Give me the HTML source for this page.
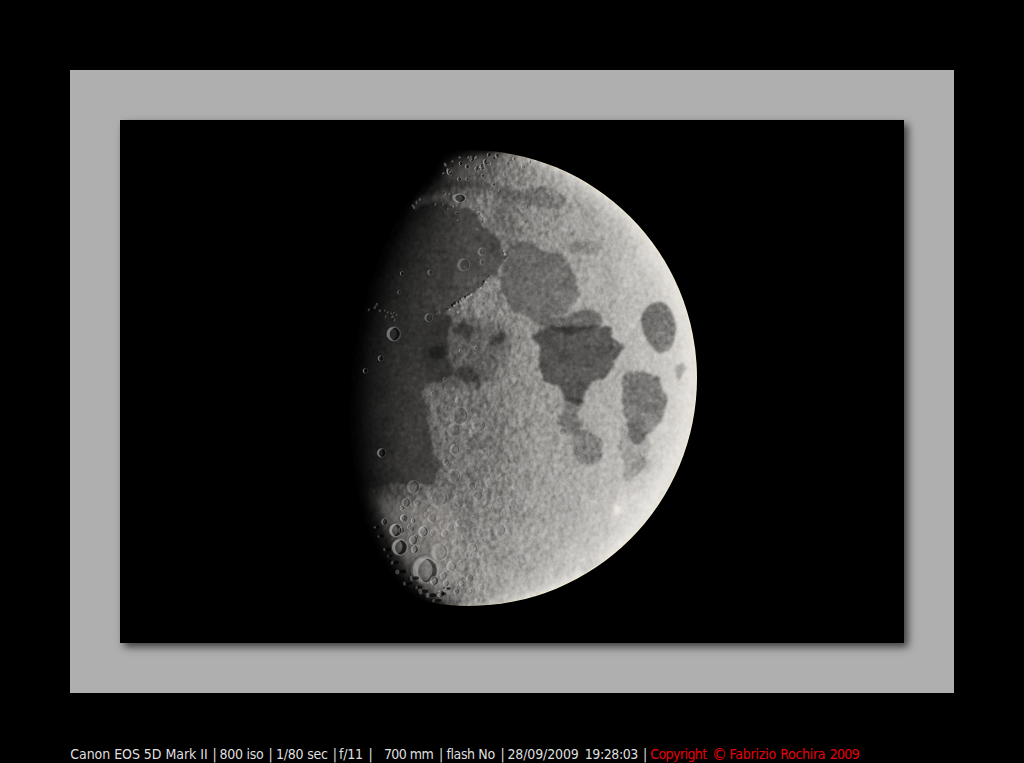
<!DOCTYPE html>
<html><head><meta charset="utf-8"><title>Moon</title>
<style>
html,body{margin:0;padding:0;background:#000;}
body{width:1024px;height:763px;position:relative;overflow:hidden;font-family:"DejaVu Sans Condensed","DejaVu Sans","Liberation Sans",sans-serif;font-stretch:condensed;}
#frame{position:absolute;left:70px;top:70px;width:884px;height:623px;background:#afafaf;}
#photo{position:absolute;left:50px;top:50px;width:784px;height:523px;background:#000;box-shadow:4px 4px 8px rgba(0,0,0,.66);overflow:hidden;}
#photo svg{position:absolute;left:-120px;top:-120px;}
#cap{position:absolute;left:70px;top:744px;width:900px;height:20px;font-size:14px;line-height:20px;color:#dfdfdf;white-space:pre;}
#cap span{position:absolute;top:0;}
#cap span.r{color:#e8000a;}
</style></head><body>
<div id="frame"><div id="photo">
<svg width="1024" height="763" viewBox="0 0 1024 763">
<defs>
<mask id="disc" maskUnits="userSpaceOnUse" x="200" y="110" width="540" height="540"><circle cx="469.0" cy="378.0" r="228.0" fill="#fff"/></mask>
<filter id="b2" x="-5%" y="-5%" width="110%" height="110%" color-interpolation-filters="sRGB"><feGaussianBlur stdDeviation="2.5"/></filter>
<filter id="bl0_6" filterUnits="userSpaceOnUse" x="200" y="110" width="540" height="540" color-interpolation-filters="sRGB"><feGaussianBlur stdDeviation="0.6"/></filter>
<filter id="bl0_8" filterUnits="userSpaceOnUse" x="200" y="110" width="540" height="540" color-interpolation-filters="sRGB"><feGaussianBlur stdDeviation="0.8"/></filter>
<filter id="bl1_2" filterUnits="userSpaceOnUse" x="200" y="110" width="540" height="540" color-interpolation-filters="sRGB"><feGaussianBlur stdDeviation="1.2"/></filter>
<filter id="bl1_5" filterUnits="userSpaceOnUse" x="200" y="110" width="540" height="540" color-interpolation-filters="sRGB"><feTurbulence type="fractalNoise" baseFrequency="0.07" numOctaves="3" seed="4" result="t"/><feDisplacementMap in="SourceGraphic" in2="t" scale="9" xChannelSelector="R" yChannelSelector="G" result="d"/><feGaussianBlur in="d" stdDeviation="0.9"/></filter>
<filter id="bl1_6" filterUnits="userSpaceOnUse" x="200" y="110" width="540" height="540" color-interpolation-filters="sRGB"><feTurbulence type="fractalNoise" baseFrequency="0.07" numOctaves="3" seed="4" result="t"/><feDisplacementMap in="SourceGraphic" in2="t" scale="9" xChannelSelector="R" yChannelSelector="G" result="d"/><feGaussianBlur in="d" stdDeviation="1.0"/></filter>
<filter id="bl1_8" filterUnits="userSpaceOnUse" x="200" y="110" width="540" height="540" color-interpolation-filters="sRGB"><feTurbulence type="fractalNoise" baseFrequency="0.07" numOctaves="3" seed="4" result="t"/><feDisplacementMap in="SourceGraphic" in2="t" scale="9" xChannelSelector="R" yChannelSelector="G" result="d"/><feGaussianBlur in="d" stdDeviation="1.1"/></filter>
<filter id="bl2" filterUnits="userSpaceOnUse" x="200" y="110" width="540" height="540" color-interpolation-filters="sRGB"><feTurbulence type="fractalNoise" baseFrequency="0.07" numOctaves="3" seed="4" result="t"/><feDisplacementMap in="SourceGraphic" in2="t" scale="9" xChannelSelector="R" yChannelSelector="G" result="d"/><feGaussianBlur in="d" stdDeviation="1.2"/></filter>
<filter id="bl2_2" filterUnits="userSpaceOnUse" x="200" y="110" width="540" height="540" color-interpolation-filters="sRGB"><feTurbulence type="fractalNoise" baseFrequency="0.07" numOctaves="3" seed="4" result="t"/><feDisplacementMap in="SourceGraphic" in2="t" scale="9" xChannelSelector="R" yChannelSelector="G" result="d"/><feGaussianBlur in="d" stdDeviation="1.3"/></filter>
<filter id="bl2_5" filterUnits="userSpaceOnUse" x="200" y="110" width="540" height="540" color-interpolation-filters="sRGB"><feTurbulence type="fractalNoise" baseFrequency="0.07" numOctaves="3" seed="4" result="t"/><feDisplacementMap in="SourceGraphic" in2="t" scale="9" xChannelSelector="R" yChannelSelector="G" result="d"/><feGaussianBlur in="d" stdDeviation="1.5"/></filter>
<filter id="bl3" filterUnits="userSpaceOnUse" x="200" y="110" width="540" height="540" color-interpolation-filters="sRGB"><feTurbulence type="fractalNoise" baseFrequency="0.07" numOctaves="3" seed="4" result="t"/><feDisplacementMap in="SourceGraphic" in2="t" scale="9" xChannelSelector="R" yChannelSelector="G" result="d"/><feGaussianBlur in="d" stdDeviation="1.8"/></filter>
<filter id="bl3_5" filterUnits="userSpaceOnUse" x="200" y="110" width="540" height="540" color-interpolation-filters="sRGB"><feGaussianBlur stdDeviation="3.5"/></filter>
<filter id="bl4" filterUnits="userSpaceOnUse" x="200" y="110" width="540" height="540" color-interpolation-filters="sRGB"><feGaussianBlur stdDeviation="4"/></filter>
<filter id="bl4_5" filterUnits="userSpaceOnUse" x="200" y="110" width="540" height="540" color-interpolation-filters="sRGB"><feGaussianBlur stdDeviation="4.5"/></filter>
<filter id="bl5" filterUnits="userSpaceOnUse" x="200" y="110" width="540" height="540" color-interpolation-filters="sRGB"><feGaussianBlur stdDeviation="5"/></filter>
<filter id="bl6" filterUnits="userSpaceOnUse" x="200" y="110" width="540" height="540" color-interpolation-filters="sRGB"><feGaussianBlur stdDeviation="6"/></filter>
<filter id="bl8" filterUnits="userSpaceOnUse" x="200" y="110" width="540" height="540" color-interpolation-filters="sRGB"><feGaussianBlur stdDeviation="8"/></filter>
<filter id="bl10" filterUnits="userSpaceOnUse" x="200" y="110" width="540" height="540" color-interpolation-filters="sRGB"><feGaussianBlur stdDeviation="10"/></filter>
<filter id="bl12" filterUnits="userSpaceOnUse" x="200" y="110" width="540" height="540" color-interpolation-filters="sRGB"><feGaussianBlur stdDeviation="12"/></filter>
<filter id="bl14" filterUnits="userSpaceOnUse" x="200" y="110" width="540" height="540" color-interpolation-filters="sRGB"><feGaussianBlur stdDeviation="14"/></filter>
<filter id="bl16" filterUnits="userSpaceOnUse" x="200" y="110" width="540" height="540" color-interpolation-filters="sRGB"><feGaussianBlur stdDeviation="16"/></filter>
<linearGradient id="gIn" gradientTransform="rotate(6.5 .5 .5)"><stop offset="0" stop-color="#fff" stop-opacity=".75"/><stop offset=".32" stop-color="#fff" stop-opacity="0"/><stop offset=".5" stop-color="#000" stop-opacity="0"/><stop offset=".8" stop-color="#000" stop-opacity=".8"/><stop offset="1" stop-color="#000" stop-opacity=".9"/></linearGradient>
<linearGradient id="gOut" gradientTransform="rotate(6.5 .5 .5)"><stop offset="0" stop-color="#000" stop-opacity=".55"/><stop offset=".4" stop-color="#000" stop-opacity="0"/><stop offset=".6" stop-color="#fff" stop-opacity="0"/><stop offset="1" stop-color="#fff" stop-opacity=".5"/></linearGradient>
<filter id="cb" x="-5%" y="-5%" width="110%" height="110%" color-interpolation-filters="sRGB"><feGaussianBlur stdDeviation="0.55"/></filter>
<filter id="noise" x="0" y="0" width="100%" height="100%" color-interpolation-filters="sRGB"><feTurbulence type="fractalNoise" baseFrequency="0.22" numOctaves="3" seed="7" result="n"/><feColorMatrix in="n" type="matrix" values="0.9 0.9 0 0 -0.4  0.9 0.9 0 0 -0.4  0.9 0.9 0 0 -0.4  0 0 0 0 1"/></filter>
<filter id="relief" x="0" y="0" width="100%" height="100%" color-interpolation-filters="sRGB"><feTurbulence type="fractalNoise" baseFrequency="0.14" numOctaves="3" seed="11" result="t"/><feDiffuseLighting in="t" surfaceScale="2.2" diffuseConstant="1" lighting-color="#fff"><feDistantLight azimuth="6.5" elevation="30"/></feDiffuseLighting></filter>
<linearGradient id="rmg" gradientUnits="userSpaceOnUse" x1="360" y1="378" x2="700" y2="416"><stop offset="0" stop-color="#fff"/><stop offset=".35" stop-color="#aaa"/><stop offset="1" stop-color="#444"/></linearGradient>
<mask id="rmask" maskUnits="userSpaceOnUse" x="230" y="140" width="480" height="480"><rect x="230" y="140" width="480" height="480" fill="url(#rmg)"/><g filter="url(#bl2)"><path d="M409.0,211.8C416.1,210.7 422.0,207.0 427.9,205.4C433.7,203.9 440.0,202.2 444.4,202.4C448.7,202.6 449.9,205.7 453.8,206.6C457.7,207.5 464.0,206.1 468.0,207.8C471.9,209.4 474.8,213.5 477.4,216.5C479.9,219.6 480.9,223.2 483.3,226.0C485.6,228.7 488.6,230.0 491.5,233.0C494.5,236.1 499.1,239.7 501.0,244.4C502.9,249.0 503.9,255.8 502.9,260.9C501.9,266.0 498.5,270.7 495.1,275.0C491.6,279.4 486.6,283.3 482.1,286.8C477.6,290.4 472.3,293.3 468.0,296.3C463.6,299.2 460.1,301.8 456.2,304.5C452.2,307.3 448.7,310.8 444.4,312.8C440.0,314.7 434.9,316.2 430.2,316.3C425.5,316.4 421.6,314.2 416.1,313.3C410.6,312.3 404.3,312.1 397.2,310.9C390.1,309.7 381.5,308.0 373.6,306.2C365.7,304.4 356.4,307.7 350.0,300.0C343.6,292.3 334.2,273.3 335.0,260.0C335.8,246.7 346.7,228.0 355.0,220.0C363.3,212.0 376.0,213.4 385.0,212.0C394.0,210.6 401.8,212.9 409.0,211.8ZM364.2,304.7C373.7,300.1 386.6,301.6 397.2,302.4C407.8,303.1 418.8,307.1 427.9,309.4C436.9,311.8 447.7,313.4 451.4,316.5C455.2,319.7 451.0,324.0 450.3,328.3C449.5,332.6 446.9,337.0 446.7,342.5C446.5,348.0 447.9,356.6 449.1,361.3C450.3,366.1 454.6,367.6 453.8,370.8C453.0,373.9 449.1,377.9 444.4,380.2C439.6,382.6 429.4,382.6 425.5,384.9C421.6,387.3 420.8,390.8 420.8,394.4C420.8,397.9 423.9,399.9 425.5,406.2C427.1,412.5 428.6,425.4 430.2,432.1C431.8,438.8 434.3,444.1 434.9,446.3C435.6,448.4 433.8,443.0 434.1,445.0C434.4,447.0 435.6,453.7 436.7,458.1C437.8,462.5 441.3,467.1 440.6,471.2C440.0,475.3 436.2,480.8 432.8,483.0C429.3,485.2 425.1,484.3 419.7,484.3C414.2,484.3 408.3,482.5 400.0,483.0C391.7,483.4 378.3,487.5 370.0,487.0C361.7,486.5 355.0,494.5 350.0,480.0C345.0,465.5 341.7,425.0 340.0,400.0C338.3,375.0 336.0,345.9 340.0,330.0C344.0,314.1 354.6,309.3 364.2,304.7Z" fill="#000" fill-opacity="0.75"/><path d="M514.4,242.2C517.9,240.2 522.1,240.6 526.2,241.6C530.3,242.5 534.9,246.4 539.3,248.1C543.7,249.8 548.3,250.9 552.4,252.0C556.6,253.1 561.4,252.5 564.2,254.7C567.0,256.8 567.5,261.0 569.4,265.1C571.4,269.3 574.5,275.4 576.0,279.5C577.5,283.7 578.5,286.7 578.6,290.0C578.7,293.3 577.9,296.1 576.6,299.2C575.3,302.2 573.3,306.1 570.7,308.4C568.2,310.7 565.1,311.4 561.6,312.9C558.1,314.5 553.7,316.6 549.8,317.5C545.9,318.5 541.9,319.0 538.0,318.8C534.1,318.7 529.7,318.0 526.2,316.9C522.7,315.8 520.1,314.4 517.0,312.3C514.0,310.2 510.3,307.5 507.9,304.4C505.5,301.4 503.7,297.9 502.6,294.0C501.5,290.0 501.4,285.2 501.3,280.9C501.2,276.5 501.3,272.3 502.0,267.8C502.6,263.2 503.2,257.6 505.2,253.3C507.3,249.1 510.9,244.2 514.4,242.2Z" fill="#000" fill-opacity="0.75"/><path d="M539.3,318.8C540.8,317.2 546.7,317.9 552.4,316.9C558.1,315.9 566.8,314.4 573.4,312.9C579.9,311.5 587.1,307.4 591.7,308.4C596.3,309.3 600.9,315.3 600.9,318.8C600.9,322.3 597.6,327.0 591.7,329.3C585.8,331.6 573.6,333.0 565.5,332.6C557.4,332.2 547.6,329.0 543.2,326.7C538.9,324.4 537.8,320.5 539.3,318.8Z" fill="#000" fill-opacity="0.75"/><path d="M533.1,334.4C534.8,331.8 541.8,329.2 546.2,327.9C550.6,326.6 554.5,327.0 559.3,326.6C564.1,326.1 570.2,325.2 575.0,325.2C579.8,325.2 583.8,326.6 588.1,326.6C592.5,326.6 597.3,325.0 601.2,325.2C605.2,325.5 609.3,325.5 611.7,327.9C614.1,330.3 613.7,336.7 615.6,339.7C617.6,342.6 622.8,343.1 623.5,345.5C624.1,347.9 621.1,351.3 619.6,354.1C618.0,356.8 615.6,358.9 614.3,361.9C613.0,365.0 613.4,369.6 611.7,372.4C610.0,375.2 606.5,377.6 603.8,379.0C601.2,380.3 598.2,379.4 596.0,380.3C593.8,381.1 592.5,382.0 590.7,384.2C589.0,386.4 587.0,390.5 585.5,393.4C584.0,396.2 583.8,399.5 581.6,401.2C579.4,403.0 575.0,404.3 572.4,403.8C569.8,403.4 567.6,400.8 565.9,398.6C564.1,396.4 563.4,392.9 561.9,390.7C560.4,388.6 559.3,386.8 556.7,385.5C554.1,384.2 548.8,384.6 546.2,382.9C543.6,381.1 542.3,378.3 541.0,375.0C539.7,371.7 538.6,366.7 538.3,363.2C538.1,359.7 540.1,357.3 539.7,354.1C539.2,350.8 536.8,346.9 535.7,343.6C534.6,340.3 531.4,337.0 533.1,334.4Z" fill="#000" fill-opacity="0.75"/><path d="M564.5,397.3C567.8,395.3 579.2,397.5 581.6,399.9C584.0,402.3 579.0,408.0 579.0,411.7C579.0,415.4 582.0,418.7 581.6,422.2C581.1,425.7 579.2,430.9 576.3,432.7C573.5,434.4 567.4,434.4 564.5,432.7C561.7,430.9 559.7,425.7 559.3,422.2C558.9,418.7 561.0,415.9 561.9,411.7C562.8,407.6 561.3,399.3 564.5,397.3Z" fill="#000" fill-opacity="0.75"/><path d="M643.2,312.3C645.1,309.2 649.3,304.8 652.4,303.1C655.5,301.4 659.0,301.1 661.6,301.8C664.2,302.4 666.2,304.6 668.1,307.0C670.1,309.4 672.1,312.9 673.4,316.2C674.7,319.5 675.8,323.4 676.0,326.7C676.2,330.0 675.3,332.8 674.7,335.9C674.0,338.9 673.6,342.4 672.1,345.0C670.5,347.6 667.7,350.3 665.5,351.6C663.3,352.9 661.1,353.5 659.0,352.9C656.8,352.2 654.4,349.8 652.4,347.6C650.4,345.5 648.7,342.6 647.2,339.8C645.6,336.9 644.2,333.7 643.2,330.6C642.2,327.6 641.3,324.5 641.3,321.4C641.3,318.4 641.4,315.3 643.2,312.3Z" fill="#000" fill-opacity="0.75"/><path d="M631.4,370.8C635.4,370.2 643.0,370.0 648.0,372.0C652.9,373.9 658.0,378.0 660.9,382.6C663.9,387.1 665.3,394.0 665.6,399.1C666.0,404.2 665.1,408.5 663.3,413.2C661.5,418.0 658.0,423.1 655.0,427.4C652.1,431.7 648.7,436.5 645.6,439.2C642.5,441.9 638.7,444.2 636.2,443.4C633.6,442.6 632.0,438.7 630.3,434.5C628.5,430.2 627.1,423.5 625.5,418.0C624.0,412.5 621.6,406.9 620.8,401.4C620.0,395.9 620.2,389.3 620.8,384.9C621.4,380.6 622.6,377.9 624.4,375.5C626.1,373.1 627.5,371.4 631.4,370.8Z" fill="#000" fill-opacity="0.75"/></g></mask>
<filter id="noise2" x="0" y="0" width="100%" height="100%" color-interpolation-filters="sRGB"><feTurbulence type="fractalNoise" baseFrequency="0.055" numOctaves="2" seed="3" result="n"/><feColorMatrix in="n" type="matrix" values="0.7 0.7 0 0 -0.2  0.7 0.7 0 0 -0.2  0.7 0.7 0 0 -0.2  0 0 0 0 1"/></filter>
</defs>
<g mask="url(#disc)">
<g id="albedo">
<rect x="230" y="140" width="480" height="480" fill="rgb(232, 229, 224)"/>
<g filter="url(#bl16)">
<ellipse cx="590.0" cy="520.0" rx="85" ry="55" transform="rotate(-35 590.0 520.0)" fill="#fff" fill-opacity="0.1"/>
</g>
<g filter="url(#bl14)">
<ellipse cx="560.0" cy="215.0" rx="70" ry="35" transform="rotate(25 560.0 215.0)" fill="#000" fill-opacity="0.07"/>
<ellipse cx="478.0" cy="450.0" rx="42" ry="85" transform="rotate(0 478.0 450.0)" fill="#000" fill-opacity="0.1"/>
</g>
<g filter="url(#bl12)">
<ellipse cx="520.0" cy="520.0" rx="60" ry="45" transform="rotate(-30 520.0 520.0)" fill="#fff" fill-opacity="0.06"/>
</g>
<g filter="url(#bl10)">
<ellipse cx="425.0" cy="262.0" rx="45" ry="38" transform="rotate(-20 425.0 262.0)" fill="#000" fill-opacity="0.05"/>
<ellipse cx="600.0" cy="470.0" rx="45" ry="30" transform="rotate(-40 600.0 470.0)" fill="#fff" fill-opacity="0.07"/>
<ellipse cx="645.0" cy="465.0" rx="30" ry="55" transform="rotate(20 645.0 465.0)" fill="#fff" fill-opacity="0.05"/>
</g>
<g filter="url(#bl8)">
<ellipse cx="490.0" cy="180.0" rx="40" ry="14" transform="rotate(8 490.0 180.0)" fill="#000" fill-opacity="0.06"/>
</g>
<g filter="url(#bl6)">
<ellipse cx="393.0" cy="328.0" rx="26" ry="14" transform="rotate(10 393.0 328.0)" fill="#fff" fill-opacity="0.07"/>
<ellipse cx="505.0" cy="230.0" rx="16" ry="30" transform="rotate(10 505.0 230.0)" fill="#000" fill-opacity="0.16"/>
</g>
<g filter="url(#bl5)">
<ellipse cx="543.2" cy="283.5" rx="19" ry="21" transform="rotate(0 543.2 283.5)" fill="#fff" fill-opacity="0.1"/>
<ellipse cx="617.3" cy="510.2" rx="15" ry="11" transform="rotate(-30 617.3 510.2)" fill="#fff" fill-opacity="0.1"/>
<path d="M607.9,527.9C614.5,519.2 621.6,517.2 629.1,509.0C636.6,500.7 647.2,488.1 652.7,478.3C658.2,468.5 659.0,454.7 662.1,450.0C665.3,445.3 671.5,443.7 671.5,450.0C671.5,456.3 667.2,476.0 662.1,487.7C657.0,499.5 648.7,511.3 640.9,520.8C633.0,530.2 623.6,537.7 614.9,544.4C606.3,551.0 590.2,563.6 589.0,560.9C587.8,558.1 601.2,536.5 607.9,527.9Z" fill="#fff" fill-opacity="0.12"/>
<ellipse cx="520.0" cy="560.0" rx="16" ry="9" transform="rotate(-10 520.0 560.0)" fill="#000" fill-opacity="0.05"/>
</g>
<g filter="url(#bl4)">
<path d="M420.8,318.9C426.3,313.4 441.2,313.8 451.4,314.2C461.7,314.5 473.1,319.3 482.1,321.2C491.2,323.2 500.6,321.6 505.7,326.0C510.8,330.3 514.4,339.7 512.8,347.2C511.2,354.7 501.4,364.1 496.3,370.8C491.2,377.5 489.2,384.5 482.1,387.3C475.0,390.0 462.8,389.3 453.8,387.3C444.8,385.3 433.7,382.2 427.9,375.5C422.0,368.8 419.6,356.6 418.4,347.2C417.2,337.7 415.3,324.4 420.8,318.9Z" fill="#000" fill-opacity="0.25"/>
<ellipse cx="560.0" cy="505.0" rx="14" ry="8" transform="rotate(20 560.0 505.0)" fill="#000" fill-opacity="0.05"/>
</g>
<g filter="url(#bl3)">
<path d="M633.8,375.5C638.9,373.1 652.7,376.3 657.4,380.2C662.1,384.1 662.5,394.0 662.1,399.1C661.7,404.2 659.4,409.3 655.0,410.9C650.7,412.5 640.9,411.3 636.2,408.5C631.4,405.8 627.1,399.9 626.7,394.4C626.3,388.9 628.7,377.9 633.8,375.5Z" fill="#000" fill-opacity="0.08"/>
<ellipse cx="591.7" cy="456.3" rx="6" ry="6" transform="rotate(0 591.7 456.3)" fill="#000" fill-opacity="0.1"/>
<ellipse cx="641.0" cy="466.0" rx="11" ry="9" transform="rotate(-30 641.0 466.0)" fill="#000" fill-opacity="0.1"/>
<ellipse cx="591.0" cy="567.0" rx="10" ry="5" transform="rotate(-25 591.0 567.0)" fill="#000" fill-opacity="0.08"/>
</g>
<g filter="url(#bl2_5)">
<path d="M573.4,242.9C576.6,241.1 584.9,240.7 589.1,241.6C593.2,242.4 597.4,245.9 598.3,248.1C599.1,250.3 597.6,253.6 594.3,254.7C591.0,255.7 582.8,255.1 578.6,254.7C574.5,254.2 570.3,254.0 569.4,252.0C568.6,250.1 570.1,244.6 573.4,242.9Z" fill="#000" fill-opacity="0.18"/>
<path d="M539.3,318.8C540.8,317.2 546.7,317.9 552.4,316.9C558.1,315.9 566.8,314.4 573.4,312.9C579.9,311.5 587.1,307.4 591.7,308.4C596.3,309.3 600.9,315.3 600.9,318.8C600.9,322.3 597.6,327.0 591.7,329.3C585.8,331.6 573.6,333.0 565.5,332.6C557.4,332.2 547.6,329.0 543.2,326.7C538.9,324.4 537.8,320.5 539.3,318.8Z" fill="#000" fill-opacity="0.36"/>
<path d="M564.5,397.3C567.8,395.3 579.2,397.5 581.6,399.9C584.0,402.3 579.0,408.0 579.0,411.7C579.0,415.4 582.0,418.7 581.6,422.2C581.1,425.7 579.2,430.9 576.3,432.7C573.5,434.4 567.4,434.4 564.5,432.7C561.7,430.9 559.7,425.7 559.3,422.2C558.9,418.7 561.0,415.9 561.9,411.7C562.8,407.6 561.3,399.3 564.5,397.3Z" fill="#000" fill-opacity="0.3"/>
<path d="M491.7,275.8C496.1,274.5 502.0,275.5 504.8,279.1C507.6,282.7 509.6,292.8 508.7,297.4C507.9,302.0 503.7,304.4 499.6,306.6C495.4,308.8 488.2,308.5 483.8,310.5C479.5,312.5 476.9,316.2 473.4,318.4C469.9,320.5 465.9,322.9 462.9,323.6C459.8,324.3 457.0,323.6 455.0,322.3C453.1,321.0 452.8,317.6 451.1,315.7C449.3,313.9 442.6,314.0 444.5,311.2C446.5,308.3 457.2,302.8 462.9,298.7C468.6,294.7 473.8,290.7 478.6,286.9C483.4,283.1 487.3,277.1 491.7,275.8Z" fill="#fff" fill-opacity="0.1"/>
</g>
<g filter="url(#bl2_2)">
<path d="M423.6,197.4C425.1,194.8 434.1,188.4 439.3,185.6C444.5,182.8 450.2,181.4 455.0,180.4C459.8,179.3 462.0,178.7 468.1,179.3C474.2,180.0 483.1,182.2 491.7,184.3C500.3,186.4 513.1,191.9 520.0,192.2C526.9,192.4 528.3,186.3 533.1,186.0C537.9,185.6 544.0,188.1 548.8,189.9C553.6,191.6 559.3,194.0 561.9,196.4C564.5,198.8 565.4,202.1 564.5,204.3C563.7,206.5 560.2,208.9 556.7,209.5C553.2,210.2 547.9,208.9 543.6,208.2C539.2,207.6 534.4,205.6 530.5,205.6C526.6,205.6 523.0,209.2 520.0,208.2C517.0,207.3 516.1,202.3 512.7,200.0C509.3,197.8 504.4,196.5 499.6,194.8C494.8,193.0 489.1,190.8 483.8,189.5C478.6,188.3 472.9,187.4 468.1,187.2C463.3,187.0 459.4,187.2 455.0,188.2C450.7,189.3 446.1,191.3 441.9,193.5C437.8,195.7 433.2,200.7 430.1,201.3C427.1,202.0 422.1,200.0 423.6,197.4Z" fill="#000" fill-opacity="0.22"/>
<ellipse cx="466.8" cy="374.3" rx="11.5" ry="8" transform="rotate(10 466.8 374.3)" fill="#000" fill-opacity="0.34"/>
<ellipse cx="436.1" cy="353.1" rx="8" ry="8" transform="rotate(0 436.1 353.1)" fill="#000" fill-opacity="0.36"/>
<ellipse cx="464.4" cy="330.7" rx="11" ry="7" transform="rotate(0 464.4 330.7)" fill="#000" fill-opacity="0.34"/>
</g>
<g filter="url(#bl2)">
<path d="M409.0,211.8C416.1,210.7 422.0,207.0 427.9,205.4C433.7,203.9 440.0,202.2 444.4,202.4C448.7,202.6 449.9,205.7 453.8,206.6C457.7,207.5 464.0,206.1 468.0,207.8C471.9,209.4 474.8,213.5 477.4,216.5C479.9,219.6 480.9,223.2 483.3,226.0C485.6,228.7 488.6,230.0 491.5,233.0C494.5,236.1 499.1,239.7 501.0,244.4C502.9,249.0 503.9,255.8 502.9,260.9C501.9,266.0 498.5,270.7 495.1,275.0C491.6,279.4 486.6,283.3 482.1,286.8C477.6,290.4 472.3,293.3 468.0,296.3C463.6,299.2 460.1,301.8 456.2,304.5C452.2,307.3 448.7,310.8 444.4,312.8C440.0,314.7 434.9,316.2 430.2,316.3C425.5,316.4 421.6,314.2 416.1,313.3C410.6,312.3 404.3,312.1 397.2,310.9C390.1,309.7 381.5,308.0 373.6,306.2C365.7,304.4 356.4,307.7 350.0,300.0C343.6,292.3 334.2,273.3 335.0,260.0C335.8,246.7 346.7,228.0 355.0,220.0C363.3,212.0 376.0,213.4 385.0,212.0C394.0,210.6 401.8,212.9 409.0,211.8ZM364.2,304.7C373.7,300.1 386.6,301.6 397.2,302.4C407.8,303.1 418.8,307.1 427.9,309.4C436.9,311.8 447.7,313.4 451.4,316.5C455.2,319.7 451.0,324.0 450.3,328.3C449.5,332.6 446.9,337.0 446.7,342.5C446.5,348.0 447.9,356.6 449.1,361.3C450.3,366.1 454.6,367.6 453.8,370.8C453.0,373.9 449.1,377.9 444.4,380.2C439.6,382.6 429.4,382.6 425.5,384.9C421.6,387.3 420.8,390.8 420.8,394.4C420.8,397.9 423.9,399.9 425.5,406.2C427.1,412.5 428.6,425.4 430.2,432.1C431.8,438.8 434.3,444.1 434.9,446.3C435.6,448.4 433.8,443.0 434.1,445.0C434.4,447.0 435.6,453.7 436.7,458.1C437.8,462.5 441.3,467.1 440.6,471.2C440.0,475.3 436.2,480.8 432.8,483.0C429.3,485.2 425.1,484.3 419.7,484.3C414.2,484.3 408.3,482.5 400.0,483.0C391.7,483.4 378.3,487.5 370.0,487.0C361.7,486.5 355.0,494.5 350.0,480.0C345.0,465.5 341.7,425.0 340.0,400.0C338.3,375.0 336.0,345.9 340.0,330.0C344.0,314.1 354.6,309.3 364.2,304.7Z" fill="#000" fill-opacity="0.37"/>
<ellipse cx="496.7" cy="338.9" rx="9" ry="7" transform="rotate(-10 496.7 338.9)" fill="#000" fill-opacity="0.34"/>
<path d="M430.1,197.4C432.1,195.3 438.4,191.8 443.2,190.2C448.0,188.6 453.9,187.8 459.0,187.6C464.0,187.4 469.2,187.8 473.4,188.9C477.5,190.0 481.0,192.1 483.8,194.1C486.7,196.2 490.2,199.0 490.4,201.3C490.6,203.6 488.0,207.0 485.2,207.9C482.3,208.8 476.6,207.2 473.4,206.6C470.1,205.9 469.0,204.4 465.5,204.0C462.0,203.5 456.8,204.2 452.4,204.0C448.0,203.7 442.8,202.9 439.3,202.6C435.8,202.4 433.0,203.5 431.4,202.6C429.9,201.8 428.2,199.5 430.1,197.4Z" fill="#fff" fill-opacity="0.15"/>
<ellipse cx="664.5" cy="427.2" rx="7" ry="8" transform="rotate(20 664.5 427.2)" fill="#fff" fill-opacity="0.22"/>
<path d="M622.0,424.0C625.3,422.0 635.7,424.5 640.0,428.0C644.3,431.5 647.3,439.3 648.0,445.0C648.7,450.7 646.0,456.5 644.0,462.0C642.0,467.5 638.8,475.2 636.0,478.0C633.2,480.8 629.3,482.0 627.0,479.0C624.7,476.0 623.2,466.5 622.0,460.0C620.8,453.5 620.0,446.0 620.0,440.0C620.0,434.0 618.7,426.0 622.0,424.0Z" fill="#000" fill-opacity="0.17"/>
</g>
<g filter="url(#bl1_8)">
<path d="M578.6,430.1C581.4,428.8 586.9,430.1 590.4,431.4C593.9,432.8 597.4,435.2 599.6,438.0C601.7,440.8 603.3,445.0 603.5,448.5C603.7,452.0 602.4,456.1 600.9,459.0C599.3,461.8 596.9,464.4 594.3,465.5C591.7,466.6 588.0,466.6 585.2,465.5C582.3,464.4 579.3,461.6 577.3,459.0C575.3,456.3 574.0,453.1 573.4,449.8C572.7,446.5 572.5,442.6 573.4,439.3C574.2,436.0 575.8,431.4 578.6,430.1Z" fill="#000" fill-opacity="0.25"/>
</g>
<g filter="url(#bl1_6)">
<path d="M631.4,370.8C635.4,370.2 643.0,370.0 648.0,372.0C652.9,373.9 658.0,378.0 660.9,382.6C663.9,387.1 665.3,394.0 665.6,399.1C666.0,404.2 665.1,408.5 663.3,413.2C661.5,418.0 658.0,423.1 655.0,427.4C652.1,431.7 648.7,436.5 645.6,439.2C642.5,441.9 638.7,444.2 636.2,443.4C633.6,442.6 632.0,438.7 630.3,434.5C628.5,430.2 627.1,423.5 625.5,418.0C624.0,412.5 621.6,406.9 620.8,401.4C620.0,395.9 620.2,389.3 620.8,384.9C621.4,380.6 622.6,377.9 624.4,375.5C626.1,373.1 627.5,371.4 631.4,370.8Z" fill="#000" fill-opacity="0.33"/>
</g>
<g filter="url(#bl1_5)">
<path d="M514.4,242.2C517.9,240.2 522.1,240.6 526.2,241.6C530.3,242.5 534.9,246.4 539.3,248.1C543.7,249.8 548.3,250.9 552.4,252.0C556.6,253.1 561.4,252.5 564.2,254.7C567.0,256.8 567.5,261.0 569.4,265.1C571.4,269.3 574.5,275.4 576.0,279.5C577.5,283.7 578.5,286.7 578.6,290.0C578.7,293.3 577.9,296.1 576.6,299.2C575.3,302.2 573.3,306.1 570.7,308.4C568.2,310.7 565.1,311.4 561.6,312.9C558.1,314.5 553.7,316.6 549.8,317.5C545.9,318.5 541.9,319.0 538.0,318.8C534.1,318.7 529.7,318.0 526.2,316.9C522.7,315.8 520.1,314.4 517.0,312.3C514.0,310.2 510.3,307.5 507.9,304.4C505.5,301.4 503.7,297.9 502.6,294.0C501.5,290.0 501.4,285.2 501.3,280.9C501.2,276.5 501.3,272.3 502.0,267.8C502.6,263.2 503.2,257.6 505.2,253.3C507.3,249.1 510.9,244.2 514.4,242.2Z" fill="#000" fill-opacity="0.29"/>
<path d="M533.1,334.4C534.8,331.8 541.8,329.2 546.2,327.9C550.6,326.6 554.5,327.0 559.3,326.6C564.1,326.1 570.2,325.2 575.0,325.2C579.8,325.2 583.8,326.6 588.1,326.6C592.5,326.6 597.3,325.0 601.2,325.2C605.2,325.5 609.3,325.5 611.7,327.9C614.1,330.3 613.7,336.7 615.6,339.7C617.6,342.6 622.8,343.1 623.5,345.5C624.1,347.9 621.1,351.3 619.6,354.1C618.0,356.8 615.6,358.9 614.3,361.9C613.0,365.0 613.4,369.6 611.7,372.4C610.0,375.2 606.5,377.6 603.8,379.0C601.2,380.3 598.2,379.4 596.0,380.3C593.8,381.1 592.5,382.0 590.7,384.2C589.0,386.4 587.0,390.5 585.5,393.4C584.0,396.2 583.8,399.5 581.6,401.2C579.4,403.0 575.0,404.3 572.4,403.8C569.8,403.4 567.6,400.8 565.9,398.6C564.1,396.4 563.4,392.9 561.9,390.7C560.4,388.6 559.3,386.8 556.7,385.5C554.1,384.2 548.8,384.6 546.2,382.9C543.6,381.1 542.3,378.3 541.0,375.0C539.7,371.7 538.6,366.7 538.3,363.2C538.1,359.7 540.1,357.3 539.7,354.1C539.2,350.8 536.8,346.9 535.7,343.6C534.6,340.3 531.4,337.0 533.1,334.4Z" fill="#000" fill-opacity="0.48"/>
<ellipse cx="680.5" cy="370.0" rx="4.5" ry="9" transform="rotate(8 680.5 370.0)" fill="#000" fill-opacity="0.22"/>
<path d="M501.5,247.0C503.3,244.8 509.5,245.8 511.4,247.6C513.2,249.5 513.3,255.4 512.7,258.1C512.0,260.8 509.4,263.6 507.4,264.0C505.5,264.4 501.9,263.6 500.9,260.7C499.9,257.9 499.8,249.1 501.5,247.0Z" fill="#fff" fill-opacity="0.12"/>
<path d="M613.1,322.8C614.0,319.7 618.1,318.6 621.0,318.8C623.8,319.0 627.9,321.7 630.1,324.1C632.3,326.5 634.1,330.4 634.1,333.2C634.1,336.1 632.3,339.6 630.1,341.1C627.9,342.6 623.4,343.1 621.0,342.4C618.6,341.7 617.0,340.4 615.7,337.2C614.4,333.9 612.2,325.8 613.1,322.8Z" fill="#fff" fill-opacity="0.12"/>
<path d="M632.8,326.0C633.4,321.4 637.8,316.5 639.3,314.9C640.8,313.3 642.6,314.1 641.9,316.2C641.3,318.3 636.0,323.0 635.4,327.3C634.7,331.7 638.0,339.9 638.0,342.4C638.0,344.9 636.2,345.1 635.4,342.4C634.5,339.7 632.1,330.6 632.8,326.0Z" fill="#fff" fill-opacity="0.25"/>
</g>
<g filter="url(#bl1_2)">
<path d="M643.2,312.3C645.1,309.2 649.3,304.8 652.4,303.1C655.5,301.4 659.0,301.1 661.6,301.8C664.2,302.4 666.2,304.6 668.1,307.0C670.1,309.4 672.1,312.9 673.4,316.2C674.7,319.5 675.8,323.4 676.0,326.7C676.2,330.0 675.3,332.8 674.7,335.9C674.0,338.9 673.6,342.4 672.1,345.0C670.5,347.6 667.7,350.3 665.5,351.6C663.3,352.9 661.1,353.5 659.0,352.9C656.8,352.2 654.4,349.8 652.4,347.6C650.4,345.5 648.7,342.6 647.2,339.8C645.6,336.9 644.2,333.7 643.2,330.6C642.2,327.6 641.3,324.5 641.3,321.4C641.3,318.4 641.4,315.3 643.2,312.3Z" fill="#000" fill-opacity="0.42"/>
<ellipse cx="459.0" cy="415.7" rx="8" ry="8" transform="rotate(0 459.0 415.7)" fill="#000" fill-opacity="0.07"/>
</g>
<g filter="url(#bl0_6)">
<ellipse cx="458.9" cy="198.1" rx="6" ry="3.6" transform="rotate(8 458.9 198.1)" fill="#000" fill-opacity="0.3"/>
</g>
<circle cx="469.0" cy="378.0" r="227.3" fill="none" stroke="#fff6cf" stroke-width="1.4" stroke-opacity="0.55"/>
<g filter="url(#cb)" fill="none">
<circle cx="562.9" cy="431.4" r="3.5" fill="#000" fill-opacity="0.05"/>
<circle cx="562.9" cy="431.4" r="4.2" stroke="#fff" stroke-opacity="0.3" stroke-width="1.8"/>
<circle cx="566.0" cy="443.0" r="3.1" fill="#000" fill-opacity="0.03"/>
<circle cx="566.0" cy="443.0" r="3.8" stroke="#fff" stroke-opacity="0.15" stroke-width="1.6"/>
<circle cx="623.9" cy="430.4" r="2.8" fill="#000" fill-opacity="0.03"/>
<circle cx="623.9" cy="430.4" r="3.4" stroke="#fff" stroke-opacity="0.28" stroke-width="1.4"/>
<circle cx="615.4" cy="422.6" r="2.1" fill="#000" fill-opacity="0.03"/>
<circle cx="615.4" cy="422.6" r="2.5" stroke="#fff" stroke-opacity="0.22" stroke-width="1.0"/>
<circle cx="559.6" cy="324.7" r="1.9" stroke="#fff" stroke-opacity="0.35" stroke-width="0.9"/>
<circle cx="585.8" cy="317.5" r="1.7" stroke="#fff" stroke-opacity="0.25" stroke-width="0.9"/>
<circle cx="495.0" cy="391.5" r="1.3" stroke="#fff" stroke-opacity="0.4" stroke-width="0.9"/>
<circle cx="497.0" cy="410.5" r="1.5" stroke="#fff" stroke-opacity="0.45" stroke-width="0.9"/>
<circle cx="487.8" cy="411.8" r="1.7" stroke="#fff" stroke-opacity="0.25" stroke-width="0.9"/>
<circle cx="490.1" cy="395.4" r="1.5" stroke="#fff" stroke-opacity="0.25" stroke-width="0.9"/>
<circle cx="591.8" cy="388.5" r="1.1" stroke="#fff" stroke-opacity="0.5" stroke-width="0.9"/>
<circle cx="548.0" cy="300.0" r="1.3" stroke="#fff" stroke-opacity="0.2" stroke-width="0.9"/>
</g>
</g>
<g id="illum" style="mix-blend-mode:multiply" filter="url(#b2)">
<rect x="200" y="120" width="540" height="523" fill="#000"/>
<path d="M703.0,613.0 439.0,612.9 438.1,612.0 438.3,608.0 438.7,606.0 439.0,605.3 439.0,604.0 436.0,604.0 435.0,603.0 432.0,602.8 431.2,602.0 430.0,601.9 429.0,601.6 428.4,601.0 427.0,600.9 426.1,600.0 425.0,599.9 424.0,599.0 423.0,598.9 422.0,598.0 421.0,597.9 420.1,597.0 419.0,596.8 418.2,596.0 417.0,595.6 415.1,594.0 414.0,593.6 410.9,591.0 410.0,590.6 401.6,583.0 393.5,574.0 387.6,566.0 381.4,556.0 376.7,547.0 371.7,536.0 367.4,525.0 363.5,513.0 359.5,498.0 356.7,485.0 354.6,473.0 352.6,458.0 351.5,446.0 350.5,429.0 350.3,413.0 350.6,397.0 351.5,381.0 352.6,369.0 354.6,353.0 357.5,335.0 360.5,320.0 363.6,307.0 367.4,293.0 372.5,277.0 377.6,263.0 382.5,251.0 387.6,240.0 393.7,228.0 400.6,216.0 408.4,204.0 417.5,192.0 423.6,185.0 432.0,176.6 439.0,170.5 447.0,164.6 451.4,162.0 452.0,161.4 453.2,161.0 454.0,160.3 455.0,160.0 456.0,159.2 457.0,159.0 458.0,158.2 459.0,158.0 460.0,157.2 461.2,157.0 462.0,156.3 463.5,156.0 464.0,155.5 465.0,155.1 466.3,155.0 467.0,154.3 469.3,154.0 470.0,153.3 473.0,153.0 474.0,152.2 477.7,152.0 479.0,151.2 480.0,151.1 490.4,151.0 491.0,148.8 491.2,144.0 492.0,143.2 493.0,143.1 703.0,143.0 704.0,144.0 704.0,612.0 703.0,613.0Z" fill="rgb(1,1,1)"/>
<path d="M703.0,613.0 440.0,612.9 439.0,612.7 438.3,612.0 439.0,607.6 439.2,604.0 436.0,603.8 435.1,603.0 433.0,602.9 431.6,602.0 430.0,601.8 429.0,601.0 427.0,600.6 426.4,600.0 425.0,599.7 424.3,599.0 423.0,598.7 422.3,598.0 421.0,597.6 420.4,597.0 416.0,594.5 412.0,591.6 407.0,587.5 402.2,583.0 396.7,577.0 390.4,569.0 384.5,560.0 380.5,553.0 375.5,543.0 370.4,531.0 366.5,520.0 362.6,507.0 359.4,494.0 356.6,480.0 354.5,466.0 352.7,450.0 351.7,435.0 351.2,422.0 351.2,406.0 351.7,392.0 352.7,378.0 354.6,360.0 356.5,346.0 359.4,330.0 362.6,315.0 365.6,303.0 369.6,289.0 374.5,274.0 380.5,258.0 385.7,246.0 391.4,234.0 397.3,223.0 404.6,211.0 410.7,202.0 417.6,193.0 424.5,185.0 432.0,177.4 440.0,170.4 448.0,164.5 456.0,159.7 460.0,157.7 464.3,156.0 465.0,155.5 467.0,155.0 468.0,154.4 470.0,154.0 471.0,153.4 473.6,153.0 475.0,152.3 478.4,152.0 479.0,151.6 481.0,151.2 491.1,151.0 491.6,144.0 493.0,143.2 494.0,143.1 703.0,143.0 704.0,144.0 704.0,612.0 703.0,613.0Z" fill="rgb(1,1,1)"/>
<path d="M703.0,613.0 455.0,613.0 440.0,612.7 438.7,612.0 439.6,605.0 439.4,604.0 436.0,603.7 435.3,603.0 433.0,602.7 432.1,602.0 430.0,601.6 429.3,601.0 428.0,600.7 426.8,600.0 425.0,599.3 418.0,595.4 414.0,592.7 409.0,588.8 402.8,583.0 395.6,575.0 388.3,565.0 381.7,554.0 376.7,544.0 372.4,534.0 368.6,524.0 364.5,511.0 361.4,499.0 358.5,486.0 356.3,473.0 354.2,457.0 352.8,440.0 352.2,428.0 352.1,412.0 352.4,396.0 353.4,380.0 354.7,367.0 356.6,352.0 359.5,334.0 362.6,319.0 366.5,303.0 370.5,289.0 374.7,276.0 379.4,263.0 385.6,248.0 391.3,236.0 397.6,224.0 403.5,214.0 411.5,202.0 418.4,193.0 425.3,185.0 434.0,176.2 442.0,169.4 450.0,163.7 457.0,159.6 466.0,155.5 472.0,153.4 474.3,153.0 475.0,152.6 479.1,152.0 480.0,151.6 482.0,151.2 491.3,151.0 492.1,144.0 493.0,143.3 494.0,143.2 703.0,143.0 704.0,144.0 704.0,612.0 703.0,613.0Z" fill="rgb(2,2,2)"/>
<path d="M703.0,613.0 455.0,613.0 443.0,612.9 440.0,612.6 439.1,612.0 439.9,605.0 439.6,604.0 437.0,603.8 436.0,603.5 435.5,603.0 433.0,602.6 432.3,602.0 430.0,601.4 429.5,601.0 428.0,600.6 424.0,598.6 417.0,594.4 413.0,591.6 408.6,588.0 401.4,581.0 394.6,573.0 388.3,564.0 382.4,554.0 377.4,544.0 372.7,533.0 368.4,521.0 364.5,508.0 361.5,496.0 358.5,481.0 356.4,468.0 354.7,453.0 353.6,438.0 353.0,424.0 353.0,410.0 353.4,394.0 354.4,379.0 355.7,366.0 357.6,351.0 360.4,334.0 363.5,319.0 367.4,303.0 371.4,289.0 375.6,276.0 380.3,263.0 385.7,250.0 391.7,237.0 397.4,226.0 402.5,217.0 409.6,206.0 417.6,195.0 424.3,187.0 431.9,179.0 440.0,171.6 448.0,165.5 456.0,160.5 462.0,157.5 466.0,155.8 472.0,153.7 476.0,152.6 479.8,152.0 482.0,151.4 491.6,151.0 492.3,144.0 493.0,143.5 495.0,143.2 703.0,143.0 704.0,144.0 704.0,612.0 703.0,613.0Z" fill="rgb(4,4,4)"/>
<path d="M703.0,613.0 460.0,613.0 446.0,612.9 441.0,612.7 439.4,612.0 440.3,605.0 439.9,604.0 437.0,603.7 435.7,603.0 433.0,602.4 432.5,602.0 428.0,600.3 422.0,597.3 417.0,594.1 413.0,591.2 409.1,588.0 404.9,584.0 399.3,578.0 393.8,571.0 388.3,563.0 383.7,555.0 378.6,545.0 373.5,533.0 369.5,522.0 365.6,509.0 362.3,496.0 359.5,482.0 357.4,469.0 355.8,455.0 354.6,440.0 354.0,425.0 353.9,410.0 354.3,395.0 355.4,379.0 356.8,365.0 358.7,350.0 361.4,334.0 364.5,319.0 368.4,303.0 372.3,289.0 376.5,276.0 381.6,262.0 386.6,250.0 392.6,237.0 398.3,226.0 404.6,215.0 411.8,204.0 418.4,195.0 426.0,186.0 433.7,178.0 441.0,171.4 449.0,165.4 457.0,160.4 465.0,156.5 473.0,153.6 477.0,152.6 483.0,151.4 492.0,151.0 492.7,144.0 494.0,143.4 496.0,143.2 703.0,143.0 704.0,144.0 704.0,612.0 703.0,613.0Z" fill="rgb(5,5,5)"/>
<path d="M703.0,613.0 460.0,613.0 446.0,612.9 441.0,612.5 439.7,612.0 440.6,605.0 440.1,604.0 437.0,603.6 436.0,603.0 434.0,602.6 431.0,601.4 423.0,597.6 418.0,594.5 414.0,591.6 409.7,588.0 405.4,584.0 399.9,578.0 394.4,571.0 389.7,564.0 384.4,555.0 379.4,545.0 374.7,534.0 370.7,523.0 366.7,510.0 363.4,497.0 360.6,483.0 358.5,470.0 356.7,455.0 355.5,440.0 354.9,425.0 354.9,410.0 355.4,394.0 356.4,379.0 357.7,365.0 359.7,350.0 362.6,333.0 365.7,318.0 369.3,303.0 373.3,289.0 377.5,276.0 382.6,262.0 388.4,248.0 394.5,235.0 400.3,224.0 406.8,213.0 413.4,203.0 420.1,194.0 427.7,185.0 435.5,177.0 443.0,170.4 451.0,164.5 459.0,159.7 463.0,157.7 468.0,155.6 477.0,152.8 484.0,151.5 492.3,151.0 493.1,144.0 494.0,143.5 496.0,143.3 518.0,143.0 703.0,143.0 704.0,144.0 704.0,612.0 703.0,613.0Z" fill="rgb(7,7,7)"/>
<path d="M703.0,613.0 464.0,613.0 448.0,612.9 442.0,612.6 440.1,612.0 440.9,605.0 440.2,604.0 437.0,603.5 436.0,602.9 434.0,602.4 429.0,600.4 423.0,597.3 418.0,594.2 414.0,591.2 410.2,588.0 406.0,584.0 400.5,578.0 394.4,570.0 389.7,563.0 384.6,554.0 379.7,544.0 374.7,532.0 370.5,520.0 367.3,509.0 364.3,497.0 361.5,483.0 359.3,469.0 357.6,454.0 356.5,439.0 355.9,424.0 355.9,409.0 356.4,394.0 357.4,379.0 358.9,364.0 360.7,350.0 363.6,333.0 366.7,318.0 370.4,303.0 374.3,289.0 378.5,276.0 383.6,262.0 389.4,248.0 395.5,235.0 401.2,224.0 407.7,213.0 414.3,203.0 421.8,193.0 428.6,185.0 436.4,177.0 444.4,170.0 452.0,164.4 460.0,159.6 468.0,155.9 475.0,153.5 484.0,151.6 492.7,151.0 493.4,144.0 495.0,143.5 497.0,143.3 521.0,143.0 703.0,143.0 704.0,144.0 704.0,612.0 703.0,613.0Z" fill="rgb(8,8,8)"/>
<path d="M703.0,613.0 464.0,612.9 448.0,612.8 442.0,612.5 440.4,612.0 441.3,605.0 440.4,604.0 437.0,603.3 434.0,602.3 429.0,600.2 422.9,597.0 418.3,594.0 414.3,591.0 410.8,588.0 406.6,584.0 401.2,578.0 395.8,571.0 390.5,563.0 385.4,554.0 380.5,544.0 375.5,532.0 371.7,521.0 368.2,509.0 365.2,497.0 362.4,483.0 360.3,469.0 358.6,454.0 357.5,439.0 356.9,424.0 356.9,409.0 357.4,394.0 358.4,379.0 359.9,364.0 362.1,348.0 364.7,333.0 367.8,318.0 371.4,303.0 375.7,288.0 380.2,274.0 385.4,260.0 390.4,248.0 396.5,235.0 402.2,224.0 408.7,213.0 415.3,203.0 422.7,193.0 430.4,184.0 437.2,177.0 445.2,170.0 453.4,164.0 461.0,159.5 469.0,155.8 476.0,153.4 484.0,151.7 493.0,151.0 493.8,144.0 495.0,143.6 497.0,143.3 521.0,143.1 703.0,143.0 704.0,144.0 704.0,612.0 703.0,613.0Z" fill="rgb(10,10,10)"/>
<path d="M703.0,613.0 464.0,612.9 448.0,612.8 442.0,612.4 440.8,612.0 441.7,605.0 440.5,604.0 437.0,603.2 432.0,601.3 427.0,599.0 423.3,597.0 418.8,594.0 414.8,591.0 411.3,588.0 407.2,584.0 401.8,578.0 396.5,571.0 391.2,563.0 386.7,555.0 381.8,545.0 377.2,534.0 373.3,523.0 369.4,510.0 366.2,497.0 363.4,483.0 361.3,469.0 359.7,455.0 358.6,441.0 358.0,426.0 358.0,411.0 358.4,395.0 359.5,379.0 361.1,363.0 363.4,347.0 365.8,333.0 368.6,319.0 372.5,303.0 376.5,289.0 381.3,274.0 386.5,260.0 391.5,248.0 397.5,235.0 403.8,223.0 410.3,212.0 417.6,201.0 424.4,192.0 431.3,184.0 439.2,176.0 446.0,170.0 454.2,164.0 462.0,159.4 470.0,155.7 477.0,153.4 485.0,151.8 493.4,151.0 494.1,144.0 496.0,143.5 498.0,143.3 524.0,143.1 703.0,143.0 704.0,144.0 704.0,612.0 703.0,613.0Z" fill="rgb(13,13,13)"/>
<path d="M703.0,612.9 468.0,612.9 450.0,612.8 443.0,612.5 441.2,612.0 442.0,605.0 440.7,604.0 438.0,603.4 431.5,601.0 427.3,599.0 423.8,597.0 419.3,594.0 415.4,591.0 407.9,584.0 402.5,578.0 397.2,571.0 392.6,564.0 387.5,555.0 382.6,545.0 377.7,533.0 373.6,521.0 370.4,510.0 367.2,497.0 364.5,483.0 362.3,469.0 360.7,454.0 359.6,439.0 359.1,424.0 359.1,409.0 359.7,393.0 360.7,378.0 362.4,362.0 364.5,347.0 367.3,331.0 370.5,316.0 374.2,301.0 378.5,286.0 382.8,273.0 387.6,260.0 393.4,246.0 399.6,233.0 405.4,222.0 412.0,211.0 418.6,201.0 425.4,192.0 433.2,183.0 441.2,175.0 448.2,169.0 456.0,163.4 463.5,159.0 471.0,155.6 478.0,153.3 485.0,151.9 493.8,151.0 494.5,144.0 498.0,143.4 524.0,143.1 703.0,143.1 703.9,144.0 703.9,612.0 703.0,612.9Z" fill="rgb(15,15,15)"/>
<path d="M703.0,612.9 468.0,612.9 450.0,612.8 443.0,612.4 441.6,612.0 442.4,605.0 440.9,604.0 438.0,603.3 431.9,601.0 427.8,599.0 422.7,596.0 418.5,593.0 413.7,589.0 409.5,585.0 405.8,581.0 399.4,573.0 394.0,565.0 388.4,555.0 383.5,545.0 378.6,533.0 374.5,521.0 370.6,507.0 367.4,493.0 364.7,478.0 362.6,462.0 361.2,446.0 360.4,430.0 360.2,414.0 360.7,397.0 361.8,380.0 363.5,363.0 365.7,347.0 368.7,330.0 372.3,313.0 376.5,297.0 380.6,283.0 385.7,268.0 391.6,253.0 397.3,240.0 403.8,227.0 410.6,215.0 417.6,204.0 424.9,194.0 431.4,186.0 439.0,178.0 445.5,172.0 453.1,166.0 457.5,163.0 463.0,159.7 468.5,157.0 473.5,155.0 477.0,153.8 482.0,152.6 486.0,151.9 492.0,151.4 494.2,151.0 494.9,144.0 497.0,143.5 500.0,143.3 514.0,143.1 703.0,143.1 703.9,144.0 703.9,612.0 703.0,612.9Z" fill="rgb(17,17,17)"/>
<path d="M703.0,612.9 468.0,612.9 450.0,612.7 443.0,612.3 442.0,612.0 442.8,605.0 441.0,603.9 438.0,603.2 432.3,601.0 428.3,599.0 423.3,596.0 419.1,593.0 414.3,589.0 410.2,585.0 406.5,581.0 400.2,573.0 394.9,565.0 389.2,555.0 384.5,545.0 379.6,533.0 375.3,520.0 371.4,506.0 368.3,492.0 365.7,477.0 363.7,462.0 362.3,446.0 361.6,430.0 361.4,414.0 361.9,397.0 363.0,380.0 364.7,363.0 367.1,346.0 370.1,329.0 373.6,313.0 377.7,297.0 382.5,281.0 387.3,267.0 392.7,253.0 398.5,240.0 404.9,227.0 411.7,215.0 418.7,204.0 425.9,194.0 432.5,186.0 440.0,178.0 446.4,172.0 454.0,166.0 458.4,163.0 463.4,160.0 469.3,157.0 474.3,155.0 478.0,153.8 483.0,152.6 494.6,151.0 495.3,144.0 497.0,143.6 501.0,143.3 515.0,143.1 703.0,143.1 703.9,144.0 703.9,612.0 703.0,612.9Z" fill="rgb(20,20,20)"/>
<path d="M703.0,612.9 468.0,612.9 450.0,612.7 443.0,612.1 442.4,612.0 443.2,605.0 441.0,603.9 438.0,603.0 432.8,601.0 428.7,599.0 423.8,596.0 419.7,593.0 415.0,589.0 410.9,585.0 407.3,581.0 401.7,574.0 395.8,565.0 390.7,556.0 385.9,546.0 381.0,534.0 376.6,521.0 372.8,507.0 369.6,493.0 367.0,478.0 365.1,463.0 363.6,447.0 362.9,431.0 362.7,415.0 363.1,398.0 364.2,381.0 365.9,364.0 368.2,347.0 371.2,330.0 374.6,314.0 378.7,298.0 383.1,283.0 388.2,268.0 393.6,254.0 399.2,241.0 405.6,228.0 412.3,216.0 419.2,205.0 426.3,195.0 432.7,187.0 440.0,179.0 447.4,172.0 454.9,166.0 459.3,163.0 464.3,160.0 470.2,157.0 475.2,155.0 483.0,152.8 495.0,151.0 495.8,144.0 501.0,143.4 517.0,143.1 703.0,143.1 703.9,144.0 703.9,612.0 703.0,612.9Z" fill="rgb(23,23,23)"/>
<path d="M703.0,612.9 468.0,612.9 450.0,612.7 446.0,612.5 443.0,612.0 443.7,605.0 441.0,603.8 438.2,603.0 433.2,601.0 429.3,599.0 424.4,596.0 420.3,593.0 415.7,589.0 411.6,585.0 408.1,581.0 401.9,573.0 396.7,565.0 391.7,556.0 386.9,546.0 382.1,534.0 377.7,521.0 373.9,507.0 370.8,493.0 368.2,478.0 366.3,463.0 364.9,447.0 364.2,431.0 364.0,415.0 364.5,398.0 365.6,381.0 367.3,364.0 369.6,347.0 372.4,331.0 375.8,315.0 379.8,299.0 384.1,284.0 389.2,269.0 394.5,255.0 400.5,241.0 406.9,228.0 413.5,216.0 420.4,205.0 427.4,195.0 433.8,187.0 441.1,179.0 448.5,172.0 455.9,166.0 460.3,163.0 465.2,160.0 471.2,157.0 476.1,155.0 483.0,152.9 488.3,152.0 493.0,151.5 495.4,151.0 496.2,144.0 502.0,143.4 518.0,143.2 703.0,143.1 703.9,144.0 703.9,612.0 703.0,612.9Z" fill="rgb(26,26,26)"/>
<path d="M703.0,612.9 472.0,612.8 452.0,612.7 444.0,612.1 443.3,612.0 444.1,605.0 433.7,601.0 426.5,597.0 422.3,594.0 417.5,590.0 413.4,586.0 409.7,582.0 403.5,574.0 398.2,566.0 393.2,557.0 388.4,547.0 383.6,535.0 379.2,522.0 375.4,508.0 372.3,494.0 369.7,479.0 367.7,464.0 366.3,448.0 365.6,432.0 365.4,416.0 365.8,399.0 366.9,382.0 368.6,365.0 370.9,348.0 373.6,332.0 377.0,316.0 381.0,299.7 385.2,285.0 390.2,270.0 395.4,256.0 401.4,242.0 407.7,229.0 414.2,217.0 420.9,206.0 427.9,196.0 434.1,188.0 441.3,180.0 448.4,173.0 455.7,167.0 459.8,164.0 464.5,161.0 470.0,158.0 474.4,156.0 480.0,154.0 483.7,153.0 489.3,152.0 494.0,151.5 495.8,151.0 496.7,144.0 503.0,143.4 520.0,143.2 703.0,143.1 703.9,144.0 703.9,612.0 703.0,612.9Z" fill="rgb(29,29,29)"/>
<path d="M703.0,612.9 472.0,612.8 452.0,612.6 447.0,612.4 444.0,612.0 443.8,612.0 444.6,605.0 434.2,601.0 427.1,597.0 423.0,594.0 418.2,590.0 414.2,586.0 410.6,582.0 405.1,575.0 399.8,567.0 394.7,558.0 389.9,548.0 385.1,536.0 381.0,524.0 377.1,510.0 374.0,496.0 371.3,481.0 369.3,466.0 367.9,450.0 367.1,434.0 366.8,418.0 367.2,401.0 368.2,384.0 369.9,367.0 372.1,350.0 375.0,333.0 378.2,317.0 382.2,301.0 386.4,286.0 391.3,271.0 396.5,257.0 402.4,243.0 408.5,230.0 415.0,218.0 421.6,207.0 429.1,196.0 435.4,188.0 442.4,180.0 449.6,173.0 456.7,167.0 460.9,164.0 465.5,161.0 471.0,158.0 475.4,156.0 481.0,154.0 484.7,153.0 494.0,151.6 496.3,151.0 497.1,144.0 504.0,143.4 521.0,143.2 703.0,143.1 703.9,144.0 703.9,612.0 703.0,612.9Z" fill="rgb(32,32,32)"/>
<path d="M703.0,612.9 472.0,612.8 452.0,612.6 444.3,612.0 445.0,605.0 439.4,603.0 434.7,601.0 427.8,597.0 423.7,594.0 419.0,590.0 415.0,586.0 411.5,582.0 406.1,575.0 400.8,567.0 395.8,558.0 391.1,548.0 386.3,536.0 382.0,523.0 378.2,509.0 375.2,495.0 372.6,480.0 370.7,465.0 369.3,449.0 368.6,433.0 368.4,417.0 368.8,400.0 369.9,383.0 371.6,366.0 373.8,349.0 376.7,332.0 380.1,316.0 384.0,300.0 388.3,285.0 393.2,270.0 398.4,256.0 404.0,242.6 410.0,230.0 416.4,218.0 423.0,207.0 430.5,196.0 436.7,188.0 443.7,180.0 450.8,173.0 457.9,167.0 462.0,164.0 466.6,161.0 472.1,158.0 476.4,156.0 482.0,154.0 485.7,153.0 495.0,151.6 496.8,151.0 497.6,144.0 505.0,143.4 523.0,143.2 703.0,143.1 703.9,144.0 703.9,612.0 703.0,612.9Z" fill="rgb(35,35,35)"/>
<path d="M703.0,612.9 473.0,612.8 453.0,612.6 444.8,612.0 445.5,605.0 439.8,603.0 435.2,601.0 428.5,597.0 424.4,594.0 419.8,590.0 415.9,586.0 412.4,582.0 407.1,575.0 401.9,567.0 397.0,558.0 392.7,549.0 387.9,537.0 383.9,525.0 380.1,511.0 377.0,497.0 374.4,482.0 372.4,467.0 371.0,451.0 370.2,435.0 370.0,419.0 370.4,402.0 371.4,385.0 373.0,368.0 375.2,351.0 378.0,334.2 381.3,318.0 385.1,302.0 389.3,287.0 394.1,272.0 399.2,258.0 405.0,244.0 411.0,231.0 417.3,219.0 423.8,208.0 431.1,197.0 437.2,189.0 444.0,181.0 450.9,174.0 457.8,168.0 463.1,164.0 467.7,161.0 473.1,158.0 477.5,156.0 483.0,154.0 486.8,153.0 495.0,151.8 497.0,151.2 497.3,151.0 498.1,144.0 506.0,143.4 524.0,143.2 703.0,143.1 703.9,144.0 703.9,612.0 703.0,612.9Z" fill="rgb(39,39,39)"/>
<path d="M703.0,612.8 473.0,612.8 453.0,612.6 445.3,612.0 446.0,605.0 437.9,602.0 433.9,600.0 429.2,597.0 425.2,594.0 420.7,590.0 416.8,586.0 413.4,582.0 408.1,575.0 403.0,567.0 398.2,558.0 394.0,549.0 389.3,537.0 385.1,524.0 381.6,511.0 378.5,497.0 376.0,482.0 374.1,467.0 372.7,451.0 371.9,435.0 371.7,419.0 372.1,402.0 373.2,385.0 374.8,368.0 377.0,351.0 379.8,334.0 383.0,318.0 386.9,302.0 391.0,287.0 395.8,272.0 401.0,257.7 406.6,244.0 412.6,231.0 418.9,219.0 425.9,207.0 432.6,197.0 438.6,189.0 445.4,181.0 452.2,174.0 459.1,168.0 464.3,164.0 468.9,161.0 474.3,158.0 478.6,156.0 484.1,154.0 487.9,153.0 497.0,151.6 497.8,151.0 498.7,144.0 507.0,143.4 526.0,143.2 703.0,143.2 703.8,144.0 703.8,612.0 703.0,612.8Z" fill="rgb(42,42,42)"/>
<path d="M703.0,612.8 474.0,612.8 454.0,612.5 445.9,612.0 446.6,605.0 438.5,602.0 434.6,600.0 429.9,597.0 426.0,594.0 422.6,591.0 418.7,587.0 415.2,583.0 409.9,576.0 404.8,568.0 400.4,560.0 396.2,551.0 391.4,539.0 387.1,526.0 383.6,513.0 380.5,499.0 378.0,484.4 376.0,469.0 374.6,453.0 373.8,437.0 373.6,421.0 373.9,404.0 374.9,387.0 376.4,370.0 378.6,353.0 381.1,337.0 384.5,320.0 388.2,304.0 392.3,289.0 397.0,273.9 402.0,259.7 407.9,245.0 413.8,232.0 420.0,220.0 426.9,208.0 433.4,198.0 440.1,189.0 446.8,181.0 453.6,174.0 460.4,168.0 465.6,164.0 470.1,161.0 475.4,158.0 479.7,156.0 485.3,154.0 489.0,153.0 498.0,151.7 498.3,151.0 499.2,144.0 507.0,143.5 527.0,143.2 703.0,143.2 703.8,144.0 703.8,612.0 703.0,612.8Z" fill="rgb(46,46,46)"/>
<path d="M703.0,612.8 475.0,612.7 455.0,612.5 446.4,612.0 447.1,605.0 439.1,602.0 435.3,600.0 430.7,597.0 426.9,594.0 423.6,591.0 419.7,587.0 416.3,583.0 411.1,576.0 406.7,569.0 402.3,561.0 398.0,552.0 393.3,540.0 389.0,527.0 385.5,514.0 382.4,500.0 380.0,486.0 377.9,470.0 376.5,454.0 375.7,438.0 375.5,422.0 375.8,405.0 376.8,388.0 378.3,371.0 380.3,355.0 383.0,337.9 386.1,322.0 390.0,304.8 394.0,289.9 398.9,274.0 403.8,260.0 409.0,246.8 415.0,233.3 421.2,221.0 428.0,209.0 434.4,199.0 440.9,190.0 447.4,182.0 454.0,175.0 460.5,169.0 465.6,165.0 471.4,161.0 476.7,158.0 480.9,156.0 486.4,154.0 490.3,153.0 498.6,152.0 499.8,144.0 508.0,143.5 527.0,143.3 703.0,143.2 703.8,144.0 703.8,612.0 703.0,612.8Z" fill="rgb(50,50,50)"/>
<path d="M703.0,612.8 477.0,612.7 456.0,612.5 447.0,612.0 447.7,605.0 441.9,603.0 439.7,602.0 436.0,600.0 431.5,597.0 427.8,594.0 424.6,591.0 420.7,587.0 417.4,583.0 413.0,577.0 408.0,569.0 403.7,561.0 399.9,553.0 395.2,541.0 391.0,528.2 387.5,515.0 384.4,501.0 382.0,486.8 380.0,471.0 378.6,455.0 377.8,439.0 377.6,423.0 377.9,406.0 378.8,389.0 380.4,372.0 382.4,355.0 385.0,338.7 388.2,322.0 392.0,305.3 396.0,290.0 400.9,274.0 405.8,260.0 411.0,246.7 417.0,233.1 423.0,221.0 429.2,210.0 436.1,199.0 442.5,190.0 449.0,182.0 455.5,175.0 462.0,169.0 466.9,165.0 471.2,162.0 476.1,159.0 480.0,157.0 484.7,155.0 490.0,153.4 493.0,152.8 499.3,152.0 500.4,144.0 509.0,143.5 527.0,143.3 703.0,143.2 703.8,144.0 703.8,612.0 703.0,612.8Z" fill="rgb(54,54,54)"/>
<path d="M703.0,612.8 478.0,612.7 457.0,612.5 447.6,612.0 448.2,605.0 445.1,604.0 440.4,602.0 433.8,598.0 429.9,595.0 426.6,592.0 422.8,588.0 419.4,584.0 414.3,577.0 409.9,570.0 405.6,562.0 401.9,554.0 397.2,542.0 393.3,530.0 389.8,517.0 386.7,503.0 384.2,488.0 382.2,473.0 380.8,457.0 380.0,440.5 379.8,424.0 380.1,407.0 381.0,390.0 382.5,373.0 384.6,356.0 387.1,340.0 390.1,324.0 394.0,306.3 398.0,291.0 402.8,275.0 408.0,260.0 413.0,247.0 418.6,234.0 424.5,222.0 431.0,210.1 437.3,200.0 443.6,191.0 449.9,183.0 456.2,176.0 463.5,169.0 468.4,165.0 472.6,162.0 477.5,159.0 481.3,157.0 488.9,154.0 492.8,153.0 498.0,152.4 499.9,152.0 501.0,144.0 510.0,143.5 528.0,143.3 703.0,143.2 703.8,144.0 703.8,612.0 703.0,612.8Z" fill="rgb(58,58,58)"/>
<path d="M703.0,612.8 480.0,612.7 458.0,612.5 448.2,612.0 448.8,605.0 443.2,603.0 439.3,601.0 436.1,599.0 430.9,595.0 424.8,589.0 419.1,582.0 413.7,574.0 408.7,565.0 404.0,555.0 399.3,543.0 395.4,531.0 392.0,518.0 389.0,504.0 386.4,489.0 384.6,474.0 383.2,458.0 382.4,442.0 382.1,426.0 382.5,409.0 383.3,392.0 384.8,375.0 386.9,357.0 389.4,341.0 392.3,325.0 396.0,308.1 400.0,292.4 404.0,278.7 409.0,263.5 414.0,250.0 419.9,236.0 426.0,223.2 432.0,212.0 438.6,201.0 444.7,192.0 450.8,184.0 456.9,177.0 464.0,170.0 468.7,166.0 472.7,163.0 477.2,160.0 482.7,157.0 487.3,155.0 490.3,154.0 494.2,153.0 499.0,152.4 500.5,152.0 501.6,144.0 511.0,143.5 529.0,143.3 703.0,143.2 703.8,144.0 703.8,612.0 703.0,612.8Z" fill="rgb(63,63,63)"/>
<path d="M703.0,612.7 482.0,612.7 459.0,612.5 448.9,612.0 449.3,605.0 443.9,603.0 440.1,601.0 437.0,599.0 432.0,595.0 426.0,589.0 420.5,582.0 415.2,574.0 410.8,566.0 406.2,556.0 401.9,545.0 398.0,533.0 394.3,519.0 391.3,505.0 389.0,490.9 387.0,475.0 385.7,460.0 384.9,444.0 384.7,428.0 385.0,411.0 385.8,394.0 387.2,377.0 389.2,360.0 391.8,342.0 394.9,325.0 398.4,309.0 402.2,294.0 406.4,279.0 411.0,264.9 416.1,251.0 421.8,237.0 427.4,225.0 433.6,213.0 440.0,202.0 446.0,193.0 452.7,184.0 458.7,177.0 465.7,170.0 470.3,166.0 474.2,163.0 478.7,160.0 484.1,157.0 488.7,155.0 491.7,154.0 495.7,153.0 499.0,152.6 501.1,152.0 502.2,144.0 512.0,143.5 531.0,143.3 703.0,143.3 703.7,144.0 703.7,612.0 703.0,612.7Z" fill="rgb(67,67,67)"/>
<path d="M703.0,612.7 483.0,612.7 460.0,612.5 449.6,612.0 450.1,606.0 449.8,605.0 444.6,603.0 441.0,601.0 438.0,599.0 432.0,594.0 427.3,589.0 421.9,582.0 417.4,575.0 413.0,567.0 408.9,558.0 404.2,546.0 400.4,534.0 397.0,521.0 394.1,507.0 391.8,493.0 389.9,478.0 388.5,462.0 387.7,446.0 387.4,429.0 387.8,412.0 388.6,395.0 390.0,378.0 392.0,360.5 394.4,344.0 397.4,327.0 401.0,310.0 404.9,294.0 409.0,279.6 414.0,264.0 419.0,250.1 424.0,237.8 430.0,224.6 435.9,213.0 442.3,202.0 448.1,193.0 454.0,185.0 459.8,178.0 466.5,171.0 470.9,167.0 474.6,164.0 478.8,161.0 483.7,158.0 487.8,156.0 493.1,154.0 497.2,153.0 500.0,152.6 501.8,152.0 502.9,144.0 513.0,143.5 532.0,143.4 703.0,143.3 703.7,144.0 703.7,612.0 703.0,612.7Z" fill="rgb(71,71,71)"/>
<path d="M703.0,612.7 485.0,612.6 462.0,612.5 450.3,612.0 450.7,606.0 450.3,605.0 445.4,603.0 441.9,601.0 439.0,599.0 434.3,595.0 429.6,590.0 424.8,584.0 420.3,577.0 415.9,569.0 411.7,560.0 407.4,549.0 403.5,537.0 400.1,524.0 397.1,510.0 394.8,496.0 392.9,481.0 391.5,465.0 390.7,449.0 390.4,432.0 390.7,415.0 391.5,398.0 392.8,381.0 394.7,364.0 397.0,347.0 400.0,329.7 403.4,313.0 407.0,297.8 411.3,282.0 416.0,266.6 421.0,252.3 426.2,239.0 431.9,226.0 437.9,214.0 444.1,203.0 449.7,194.0 456.1,185.0 461.8,178.0 468.4,171.0 476.3,164.0 480.5,161.0 485.4,158.0 491.7,155.0 494.7,154.0 501.0,152.6 502.5,152.0 503.6,144.0 514.0,143.6 534.0,143.4 703.0,143.3 703.7,144.0 703.7,612.0 703.0,612.7Z" fill="rgb(76,76,76)"/>
<path d="M703.0,612.7 486.0,612.6 463.0,612.5 451.0,612.0 451.4,606.0 450.9,605.0 446.3,603.0 442.9,601.0 440.1,599.0 435.6,595.0 431.0,590.0 426.5,584.0 422.0,577.0 418.3,570.0 414.6,562.0 410.3,551.0 406.5,539.0 403.1,526.0 400.2,512.0 397.9,498.0 396.0,482.0 394.8,467.0 394.0,451.0 393.7,435.0 393.9,418.0 394.7,401.0 396.0,383.6 397.9,366.0 400.0,350.0 403.0,332.0 406.3,315.0 410.0,299.0 414.0,283.8 418.1,270.0 423.1,255.0 428.0,241.9 433.9,228.0 440.0,215.2 446.1,204.0 452.2,194.0 457.7,186.0 463.2,179.0 469.5,172.0 477.0,165.0 480.9,162.0 485.3,159.0 488.9,157.0 493.3,155.0 496.2,154.0 502.0,152.6 503.2,152.0 504.4,144.0 515.0,143.6 536.0,143.4 703.0,143.3 703.7,144.0 703.7,612.0 703.0,612.7Z" fill="rgb(81,81,81)"/>
<path d="M703.0,612.7 488.0,612.6 464.0,612.4 451.7,612.0 452.2,606.0 451.5,605.0 447.2,603.0 442.6,600.0 438.0,596.0 433.4,591.0 428.9,585.0 425.1,579.0 421.3,572.0 417.6,564.0 413.8,554.0 409.9,542.0 406.6,529.0 403.7,515.0 401.3,500.0 399.5,485.0 398.2,469.0 397.5,453.0 397.2,436.0 397.5,419.0 398.3,402.0 399.7,384.0 401.6,366.0 404.0,348.3 406.9,331.0 410.0,315.0 413.9,298.0 417.8,283.0 422.0,268.5 426.8,254.0 432.0,240.0 437.0,228.0 442.6,216.0 448.3,205.0 454.0,195.3 459.5,187.0 464.8,180.0 470.7,173.0 474.6,169.0 479.0,165.0 482.8,162.0 487.2,159.0 490.7,157.0 495.0,155.0 497.9,154.0 502.2,153.0 503.0,152.7 503.9,152.0 505.1,144.0 516.0,143.6 537.0,143.4 703.0,143.3 703.7,144.0 703.7,612.0 703.0,612.7Z" fill="rgb(86,86,86)"/>
<path d="M703.0,612.7 490.0,612.6 465.0,612.4 452.5,612.0 453.0,606.0 452.2,605.0 448.2,603.0 442.6,599.0 438.4,595.0 435.0,591.0 431.4,586.0 427.6,580.0 424.0,573.0 420.8,566.0 416.7,555.0 413.0,543.0 410.0,530.9 407.2,517.0 405.0,502.5 403.3,488.0 402.1,472.0 401.4,456.0 401.1,439.0 401.4,422.0 402.2,405.0 403.5,387.0 405.3,370.0 407.6,352.0 410.3,335.0 413.4,318.0 417.0,301.6 421.0,285.4 425.0,271.0 429.8,256.0 434.8,242.0 439.9,229.0 445.3,217.0 450.8,206.0 455.9,197.0 461.6,188.0 467.3,180.0 473.1,173.0 476.9,169.0 481.2,165.0 484.8,162.0 489.1,159.0 492.5,157.0 496.7,155.0 499.6,154.0 504.0,153.0 504.7,152.0 506.0,144.0 518.0,143.6 539.0,143.4 703.0,143.3 703.7,144.0 703.7,612.0 703.0,612.7Z" fill="rgb(91,91,91)"/>
<path d="M703.0,612.6 491.0,612.6 466.0,612.4 453.4,612.0 453.8,606.0 453.0,605.0 449.2,603.0 445.1,600.0 440.9,596.0 437.5,592.0 433.9,587.0 430.9,582.0 427.7,576.0 424.6,569.0 420.8,559.0 417.1,547.0 414.0,534.5 411.4,521.0 409.2,507.0 407.6,492.0 406.3,476.0 405.6,460.0 405.4,443.0 405.7,426.0 406.5,408.0 407.8,390.0 409.6,372.0 411.9,354.0 414.5,337.0 417.5,320.0 421.0,303.4 424.7,288.0 428.9,272.0 433.0,258.6 437.9,244.0 442.8,231.0 448.0,218.8 453.6,207.0 459.0,197.0 463.9,189.0 469.3,181.0 474.8,174.0 478.4,170.0 482.4,166.0 485.7,163.0 489.6,160.0 494.4,157.0 498.6,155.0 501.3,154.0 505.3,153.0 506.8,144.0 519.0,143.6 540.0,143.4 703.0,143.4 703.6,144.0 703.6,612.0 703.0,612.6Z" fill="rgb(96,96,96)"/>
<path d="M703.0,612.6 493.0,612.6 468.0,612.4 454.2,612.0 454.6,606.0 453.8,605.0 450.4,603.0 446.5,600.0 443.5,597.0 440.1,593.0 437.3,589.0 434.2,584.0 431.1,578.0 428.4,572.0 424.7,562.0 421.4,551.0 418.4,539.0 415.9,526.0 413.8,512.0 412.2,497.0 411.0,481.0 410.4,465.0 410.2,448.0 410.4,431.0 411.2,413.0 412.4,395.0 414.0,378.0 416.3,359.0 419.0,340.3 422.0,322.9 425.1,307.0 429.0,290.0 433.0,274.1 437.0,260.0 441.5,246.0 446.2,233.0 451.4,220.0 456.8,208.0 461.9,198.0 466.5,190.0 471.6,182.0 476.8,175.0 483.8,167.0 488.1,163.0 491.8,160.0 494.7,158.0 498.3,156.0 500.4,155.0 506.2,153.0 507.7,144.0 520.0,143.6 542.0,143.5 703.0,143.4 703.6,144.0 703.6,612.0 703.0,612.6Z" fill="rgb(101,101,101)"/>
<path d="M703.0,612.6 495.0,612.5 469.0,612.4 455.1,612.0 455.5,606.0 454.8,605.0 451.6,603.0 448.1,600.0 445.2,597.0 442.8,594.0 440.1,590.0 437.7,586.0 435.1,581.0 432.9,576.0 429.1,566.0 426.0,555.6 423.0,543.0 420.8,531.0 418.8,517.0 417.2,502.0 416.2,487.0 415.6,471.0 415.4,454.0 415.7,436.0 416.5,418.0 417.7,400.0 419.3,382.0 421.5,363.0 424.0,344.6 427.0,326.2 430.0,310.0 433.6,293.0 437.2,278.0 441.2,263.0 445.3,249.0 450.0,235.0 454.9,222.0 459.9,210.0 464.6,200.0 469.4,191.0 474.2,183.0 479.0,176.0 485.6,168.0 489.5,164.0 492.9,161.0 498.5,157.0 502.3,155.0 506.0,153.7 507.1,153.0 508.6,144.0 522.0,143.6 544.0,143.5 703.0,143.4 703.6,144.0 703.6,612.0 703.0,612.6Z" fill="rgb(106,106,106)"/>
<path d="M703.0,612.6 497.0,612.5 471.0,612.4 456.1,612.0 456.4,606.0 455.8,605.0 453.0,603.0 449.7,600.0 445.6,595.0 441.3,588.0 437.0,579.0 433.7,570.0 430.5,559.0 428.0,547.8 425.8,535.0 424.0,521.4 422.7,507.0 421.8,492.0 421.2,475.0 421.2,458.0 421.6,440.0 422.4,422.0 423.8,403.0 425.5,384.0 427.6,365.0 430.0,347.0 433.0,327.8 436.0,311.0 439.2,295.0 443.0,278.0 446.8,263.0 451.0,248.0 455.1,235.0 459.3,223.0 463.9,211.0 468.3,201.0 472.8,192.0 477.2,184.0 481.6,177.0 487.6,169.0 491.2,165.0 494.2,162.0 497.8,159.0 500.7,157.0 504.3,155.0 507.0,153.9 508.0,153.0 509.6,144.0 523.0,143.6 545.0,143.5 703.0,143.4 703.6,144.0 703.6,612.0 703.0,612.6Z" fill="rgb(112,112,112)"/>
<path d="M703.0,612.5 499.0,612.5 472.0,612.4 457.0,612.0 457.4,606.0 456.9,605.0 452.4,601.0 448.5,596.0 444.9,590.0 441.7,583.0 438.8,575.0 435.9,565.0 433.3,553.0 431.4,541.0 429.8,528.0 428.7,514.0 427.9,499.0 427.5,482.0 427.6,465.0 428.1,447.0 429.0,428.7 430.4,409.0 432.1,390.0 434.2,370.0 436.8,350.0 439.6,331.0 442.8,312.0 446.0,295.0 449.1,280.0 452.8,264.0 456.7,249.0 460.4,236.0 464.6,223.0 468.9,211.0 472.9,201.0 477.0,192.0 481.1,184.0 485.2,177.0 490.8,169.0 494.1,165.0 496.9,162.0 500.3,159.0 502.9,157.0 508.4,154.0 509.0,153.0 510.6,144.0 524.0,143.7 547.0,143.5 703.0,143.5 703.5,144.0 703.5,612.0 703.0,612.5Z" fill="rgb(118,118,118)"/>
<path d="M703.0,612.5 500.0,612.5 473.0,612.3 458.1,612.0 458.4,606.0 458.1,605.0 455.1,602.0 452.0,598.0 449.1,593.0 446.4,587.0 443.6,579.0 441.2,570.0 439.0,559.2 437.4,548.0 436.0,535.0 435.1,522.0 434.6,507.0 434.4,491.0 434.7,473.0 435.3,455.0 436.3,436.0 437.8,416.0 439.7,395.0 441.8,375.0 444.2,355.0 447.0,334.8 450.0,315.4 453.0,298.0 456.0,282.0 459.4,266.0 462.9,251.0 466.5,237.0 470.2,224.0 474.0,212.0 477.2,203.0 480.8,194.0 484.4,186.0 488.0,179.0 493.5,170.0 498.9,163.0 504.0,158.0 509.9,154.0 511.6,144.0 526.0,143.7 549.0,143.5 703.0,143.5 703.5,144.0 703.5,612.0 703.0,612.5Z" fill="rgb(123,123,123)"/>
<path d="M703.0,612.5 502.0,612.5 473.0,612.3 459.2,612.0 459.4,605.0 455.6,600.0 453.8,597.0 451.9,593.0 449.0,585.0 446.7,576.0 445.1,567.0 443.6,556.0 442.7,545.0 442.0,532.0 441.7,517.0 441.8,500.0 442.3,482.0 443.3,463.0 444.6,442.0 446.4,420.0 448.6,397.0 451.0,374.6 456.7,330.0 463.0,289.6 466.3,271.0 469.9,253.0 473.5,237.0 477.0,223.0 480.4,211.0 483.9,200.0 487.2,191.0 490.9,182.0 495.4,173.0 500.5,165.0 504.5,160.0 507.7,157.0 510.3,155.0 510.9,154.0 512.8,144.0 527.0,143.7 551.0,143.6 703.0,143.5 703.5,144.0 703.5,612.0 703.0,612.5Z" fill="rgb(129,129,129)"/>
<path d="M703.0,612.5 504.0,612.4 473.0,612.3 460.3,612.0 460.5,606.0 460.8,605.0 457.4,599.0 455.0,593.0 453.1,586.0 451.4,577.0 450.3,568.0 449.6,559.0 449.1,548.0 449.0,536.0 449.3,522.0 449.9,506.0 452.2,469.0 456.0,425.0 461.2,376.0 467.0,328.6 473.0,286.0 479.0,249.8 482.0,234.0 485.0,220.0 487.6,209.0 490.3,199.0 493.1,190.0 495.9,182.0 499.7,173.0 503.4,166.0 507.4,160.0 512.1,155.0 512.0,154.0 514.0,144.0 553.0,143.6 703.0,143.5 703.5,144.0 703.5,612.0 703.0,612.5Z" fill="rgb(135,135,135)"/>
<path d="M703.0,612.5 506.0,612.4 461.5,612.0 461.7,606.0 462.4,605.0 460.1,599.0 458.4,593.0 457.2,586.0 456.4,578.0 455.9,562.0 456.6,541.0 458.4,514.0 461.7,478.0 467.0,427.8 474.0,365.5 480.9,307.0 486.0,267.0 490.3,236.0 494.3,212.0 498.1,194.0 501.8,180.0 504.6,172.0 507.1,166.0 509.8,161.0 513.2,156.0 513.7,155.0 513.2,154.0 515.2,144.0 555.0,143.6 703.0,143.5 703.5,144.0 703.5,612.0 703.0,612.5Z" fill="rgb(141,141,141)"/>
<path d="M703.0,612.4 508.0,612.4 462.8,612.0 463.0,606.0 464.1,605.0 462.2,593.0 461.9,587.0 461.8,581.0 462.3,569.0 463.5,555.0 467.0,525.1 479.3,430.0 485.4,379.0 491.6,322.0 502.2,215.0 504.6,196.0 507.2,181.0 509.0,173.0 510.8,167.0 512.6,162.0 515.2,156.0 514.5,154.0 516.5,144.0 557.0,143.6 703.0,143.6 703.4,144.0 703.4,612.0 703.0,612.4Z" fill="rgb(147,147,147)"/>
<path d="M703.0,612.4 511.0,612.4 464.2,612.0 464.3,606.0 465.9,605.0 466.2,604.0 466.4,595.0 466.8,589.0 469.0,572.0 482.4,499.0 489.5,456.0 494.6,420.0 499.2,383.0 503.8,339.0 507.3,295.0 509.4,260.0 511.9,202.0 512.9,185.0 514.6,170.0 517.1,157.0 517.0,156.0 515.8,155.0 515.9,154.0 518.0,144.0 559.0,143.7 703.0,143.6 703.4,144.0 703.4,612.0 703.0,612.4Z" fill="rgb(153,153,153)"/>
<path d="M703.0,612.4 513.0,612.3 465.6,612.0 465.7,606.0 467.9,605.0 468.9,603.0 473.4,584.0 483.7,547.0 488.7,528.0 492.8,511.0 496.9,493.0 502.1,467.0 506.9,440.0 511.0,413.0 514.5,385.0 517.3,358.0 519.5,331.0 521.1,304.0 521.9,278.0 522.2,258.0 522.0,238.0 521.3,217.0 519.6,179.0 519.6,159.0 519.2,157.0 518.5,156.0 517.1,155.0 519.5,144.0 561.0,143.7 703.0,143.6 703.4,144.0 703.4,612.0 703.0,612.4Z" fill="rgb(160,160,160)"/>
<path d="M703.0,612.4 515.0,612.3 467.2,612.0 467.2,606.0 470.0,605.0 471.1,604.0 472.9,601.0 483.5,576.0 490.8,558.0 495.6,545.0 499.8,533.0 503.9,520.0 507.8,507.0 511.5,493.0 515.0,479.0 518.4,464.0 521.4,449.0 524.2,434.0 526.8,418.0 529.1,402.0 531.1,386.0 534.1,355.0 535.9,325.0 536.5,295.0 536.4,280.0 536.0,266.0 535.1,249.0 533.7,232.0 531.9,216.0 529.4,199.0 522.8,161.0 521.7,158.0 521.0,157.0 520.0,156.4 518.6,155.0 521.1,144.0 564.0,143.7 703.0,143.6 703.4,144.0 703.4,612.0 703.0,612.4Z" fill="rgb(166,166,166)"/>
<path d="M703.0,612.3 518.0,612.3 468.8,612.0 468.8,606.0 472.3,605.0 473.8,604.0 475.8,602.0 477.3,600.0 481.4,594.0 487.6,584.0 497.7,566.0 503.8,554.0 509.7,541.0 515.1,528.0 519.9,515.0 525.0,500.0 529.5,485.0 533.5,470.0 537.3,454.0 540.7,438.0 543.7,421.0 546.2,405.0 548.4,388.0 550.1,371.0 551.4,355.0 552.2,338.0 552.6,322.0 552.6,306.0 552.1,290.0 551.2,275.0 549.9,260.0 547.7,243.0 544.9,226.0 541.5,210.0 537.6,195.0 532.0,177.0 526.8,163.0 525.3,160.0 523.7,158.0 522.5,157.0 520.5,156.0 520.3,155.0 522.8,144.0 566.0,143.7 703.0,143.7 703.3,144.0 703.3,612.0 703.0,612.3Z" fill="rgb(173,173,173)"/>
<path d="M703.0,612.3 521.0,612.3 470.6,612.0 470.5,606.0 474.6,605.0 476.7,604.0 479.4,602.0 482.7,599.0 488.2,593.0 494.1,586.0 500.2,578.0 505.9,570.0 513.6,558.0 520.4,546.0 527.1,533.0 533.0,520.0 538.6,506.0 544.0,491.0 549.1,475.0 553.5,459.0 557.5,442.0 561.0,425.0 563.8,408.0 566.2,390.0 567.9,373.0 569.0,356.0 569.6,339.0 569.6,322.0 569.0,305.0 567.9,289.0 566.2,273.0 564.0,258.0 560.7,241.0 556.4,224.0 551.7,209.0 546.0,194.0 542.6,186.0 538.7,178.0 535.1,171.0 531.6,165.0 528.7,161.0 526.7,159.0 525.4,158.0 524.0,157.4 523.0,156.5 521.8,156.0 524.7,144.0 569.0,143.7 703.0,143.7 703.3,144.0 703.3,612.0 703.0,612.3Z" fill="rgb(179,179,179)"/>
<path d="M703.0,612.3 524.0,612.2 472.5,612.0 472.4,606.0 477.0,605.0 479.6,604.0 483.3,602.0 488.8,598.0 495.9,592.0 502.2,586.0 508.8,579.0 515.0,572.0 523.6,561.0 531.2,550.0 539.1,537.0 546.1,524.0 553.2,509.0 559.4,494.0 565.1,478.0 570.1,462.0 574.6,445.0 578.4,428.0 581.6,410.0 584.0,392.0 585.7,374.0 586.7,357.0 587.0,339.0 586.6,322.0 585.4,305.0 583.7,289.0 581.2,273.0 577.9,257.0 573.4,240.0 568.1,224.0 562.0,209.0 555.2,195.0 551.3,188.0 547.0,181.0 542.2,174.0 537.7,168.0 534.3,164.0 531.2,161.0 528.5,159.0 524.5,157.0 523.8,156.0 526.7,144.0 572.0,143.8 703.0,143.7 703.3,144.0 703.3,612.0 703.0,612.3Z" fill="rgb(186,186,186)"/>
<path d="M703.0,612.3 527.0,612.2 475.2,612.0 475.0,606.0 479.4,605.0 485.1,603.0 490.9,600.0 497.2,596.0 504.2,591.0 511.6,585.0 518.4,579.0 524.5,573.0 533.7,563.0 542.6,552.0 551.1,540.0 559.1,527.0 567.2,512.0 574.2,497.0 580.7,481.0 586.2,465.0 591.2,448.0 595.5,430.0 598.8,412.0 601.4,394.0 603.0,376.0 603.9,358.0 603.8,340.0 603.0,323.0 601.4,306.0 599.0,289.7 595.9,274.0 591.8,258.0 589.0,249.0 586.3,241.0 583.2,233.0 579.8,225.0 576.1,217.0 572.5,210.0 568.5,203.0 564.1,196.0 559.4,189.0 554.1,182.0 549.2,176.0 543.7,170.0 538.5,165.0 534.8,162.0 531.7,160.0 528.0,158.3 527.0,157.3 526.2,157.0 529.6,144.0 703.0,143.7 703.3,144.0 703.3,612.0 703.0,612.3Z" fill="rgb(193,193,193)"/>
<path d="M703.0,612.2 478.2,612.0 478.0,606.0 485.7,604.0 491.2,602.0 497.6,599.0 503.2,596.0 511.4,591.0 518.7,586.0 526.5,580.0 533.6,574.0 544.1,564.0 554.0,553.0 563.5,541.0 571.8,529.0 580.2,515.0 588.0,500.0 595.2,484.0 601.6,467.0 607.0,450.0 611.6,432.0 615.1,414.0 617.7,396.0 619.4,378.0 620.0,360.0 619.8,342.0 618.6,325.0 616.6,308.0 613.5,291.0 609.7,275.0 604.9,259.0 602.0,251.0 598.4,242.0 594.8,234.0 590.9,226.0 586.5,218.0 582.3,211.0 577.8,204.0 572.7,197.0 567.2,190.0 562.0,184.0 556.3,178.0 550.0,172.0 544.0,167.0 539.9,164.0 535.1,161.0 531.0,159.0 530.0,158.2 529.0,158.0 532.8,144.0 703.0,143.8 703.2,144.0 703.2,612.0 703.0,612.2Z" fill="rgb(200,200,200)"/>
<path d="M703.0,612.2 481.7,612.0 481.4,606.0 485.0,604.7 492.0,603.0 497.7,601.0 504.8,598.0 511.0,595.0 520.1,590.0 528.1,585.0 535.3,580.0 543.1,574.0 554.6,564.0 564.5,554.0 574.9,542.0 583.9,530.0 593.0,516.0 597.7,508.0 602.0,500.0 609.6,484.0 616.0,468.1 621.7,451.0 626.3,434.0 630.0,416.0 632.7,398.0 634.3,380.0 634.8,362.0 634.4,344.0 632.9,327.0 630.5,310.0 627.0,293.0 622.7,277.0 617.2,261.0 614.0,253.0 610.0,244.0 606.0,236.0 601.6,228.0 596.8,220.0 592.2,213.0 587.1,206.0 581.5,199.0 575.4,192.0 569.6,186.0 563.3,180.0 556.3,174.0 549.7,169.0 543.8,165.0 536.0,160.7 535.0,160.5 534.2,160.0 534.0,159.6 532.2,159.0 536.6,144.0 703.0,143.8 703.2,144.0 703.2,612.0 703.0,612.2Z" fill="rgb(207,207,207)"/>
<path d="M703.0,612.2 485.9,612.0 485.4,606.0 485.9,605.0 490.0,604.3 501.7,601.0 509.7,598.0 518.8,594.0 526.7,590.0 535.5,585.0 543.3,580.0 551.8,574.0 558.2,569.0 564.1,564.0 574.7,554.0 584.9,543.0 594.6,531.0 599.7,524.0 604.4,517.0 609.0,509.6 613.4,502.0 621.0,487.0 625.0,478.2 628.4,470.0 634.4,453.0 637.1,444.0 639.5,435.0 643.3,417.0 646.0,399.0 647.5,382.0 647.9,364.0 647.3,346.0 645.6,329.0 642.9,312.0 639.0,295.0 634.3,279.0 628.7,264.0 625.0,255.5 620.9,247.0 616.7,239.0 612.0,231.0 606.8,223.0 601.9,216.0 596.5,209.0 590.6,202.0 584.1,195.0 578.0,189.0 571.3,183.0 563.9,177.0 557.0,172.0 550.9,168.0 543.9,164.0 541.0,162.7 539.0,161.5 538.0,161.4 537.4,161.0 537.0,160.3 536.1,160.0 541.1,144.0 703.0,143.8 703.2,144.0 703.2,612.0 703.0,612.2ZM535.0,160.1 535.0,159.7 535.8,160.0 535.0,160.1Z" fill="rgb(214,214,214)"/>
<path d="M703.0,612.1 490.8,612.0 490.1,605.0 492.0,604.7 495.0,603.6 501.8,602.0 508.4,600.0 516.7,597.0 526.2,593.0 534.5,589.0 543.7,584.0 551.9,579.0 559.3,574.0 571.1,565.0 577.0,560.0 583.6,554.0 594.3,543.0 604.4,531.0 609.8,524.0 614.7,517.0 619.3,510.0 624.0,502.1 632.1,487.0 639.2,471.0 642.4,463.0 645.5,454.0 650.5,437.0 652.7,428.0 654.5,419.0 656.1,410.0 657.3,401.0 658.8,383.0 659.2,366.0 658.5,349.0 656.7,332.0 654.0,315.8 650.0,299.0 645.0,282.9 642.1,275.0 638.8,267.0 635.0,258.6 630.7,250.0 626.0,241.6 621.0,233.5 615.9,226.0 610.0,218.0 604.3,211.0 598.1,204.0 591.2,197.0 584.8,191.0 577.7,185.0 569.9,179.0 562.8,174.0 554.7,169.0 545.0,163.8 544.0,163.5 542.0,162.2 541.0,162.2 540.6,162.0 546.5,144.0 703.1,144.0 703.0,612.1Z" fill="rgb(221,221,221)"/>
<path d="M703.0,612.1 496.9,612.0 496.1,605.0 495.4,604.0 499.0,603.6 501.0,602.8 508.3,601.0 514.9,599.0 523.4,596.0 533.2,592.0 541.7,588.0 551.2,583.0 559.6,578.0 568.7,572.0 580.6,563.0 592.1,553.0 603.1,542.0 613.6,530.0 619.0,523.0 624.0,516.1 633.1,502.0 637.6,494.0 641.8,486.0 649.0,470.2 655.1,454.0 657.9,445.0 660.2,437.0 664.0,420.0 665.6,411.0 666.8,402.0 668.3,385.0 668.6,368.0 667.9,351.0 666.0,334.3 663.0,317.5 659.0,301.5 654.0,286.0 648.0,270.9 643.8,262.0 639.2,253.0 634.0,244.0 629.0,236.2 624.0,229.0 617.9,221.0 612.1,214.0 605.7,207.0 598.7,200.0 592.1,194.0 585.0,188.0 577.1,182.0 569.8,177.0 561.8,172.0 551.0,166.3 550.0,165.6 549.0,165.4 548.4,165.0 548.0,164.4 546.3,164.0 546.4,163.0 553.3,144.0 703.1,144.0 703.0,612.1ZM544.0,163.0 544.0,162.9 544.2,163.0 544.0,163.0Z" fill="rgb(229,229,229)"/>
<path d="M703.0,612.1 505.0,612.0 503.8,604.0 503.0,603.8 502.3,603.0 506.0,602.6 506.8,602.0 508.0,601.6 510.0,601.3 517.9,599.0 526.9,596.0 534.7,593.0 544.0,589.0 552.1,585.0 559.5,581.0 567.9,576.0 575.5,571.0 582.5,566.0 590.2,560.0 597.2,554.0 603.6,548.0 609.6,542.0 616.1,535.0 622.0,528.0 631.9,515.0 641.0,501.0 645.1,494.0 649.8,485.0 657.0,469.4 663.0,453.6 668.0,437.0 670.0,428.8 671.8,420.0 674.4,404.0 675.8,388.0 676.3,372.0 675.7,356.0 674.0,339.4 671.2,323.0 667.6,308.0 663.0,293.0 657.0,277.5 653.0,268.7 648.1,259.0 643.0,250.0 638.0,242.0 633.0,234.7 627.0,226.7 620.7,219.0 614.4,212.0 607.6,205.0 600.0,198.0 592.9,192.0 585.2,186.0 578.1,181.0 570.3,176.0 563.4,172.0 557.0,168.5 556.0,168.2 555.0,167.3 554.0,167.2 553.6,167.0 553.5,166.0 562.3,144.0 703.1,144.0 703.0,612.1ZM552.0,166.1 551.8,166.0 552.0,165.5 552.8,166.0 552.0,166.1Z" fill="rgb(236,236,236)"/>
<path d="M703.0,612.1 516.7,612.0 514.7,602.0 513.0,601.5 512.8,601.0 516.0,600.8 516.6,600.0 519.0,599.5 529.7,596.0 537.8,593.0 545.1,590.0 559.7,583.0 567.0,579.0 573.7,575.0 587.0,566.0 594.9,560.0 600.9,555.0 612.8,544.0 624.0,532.0 629.9,525.0 635.0,518.4 640.0,511.5 644.9,504.0 653.2,490.0 657.0,482.6 661.0,474.2 664.9,465.0 668.0,457.0 673.0,441.3 677.0,425.2 680.0,408.2 681.6,393.0 682.3,378.0 682.0,362.0 680.8,347.0 678.4,331.0 675.0,315.4 671.0,301.4 666.0,287.3 662.0,277.8 658.0,269.2 653.0,259.7 648.0,251.1 643.0,243.3 637.2,235.0 631.0,227.0 625.1,220.0 617.7,212.0 610.5,205.0 603.9,199.0 595.4,192.0 587.3,186.0 579.9,181.0 568.0,173.7 567.0,173.4 566.0,172.5 565.0,172.3 564.0,171.2 563.0,171.2 562.6,171.0 563.0,170.1 563.9,170.0 575.8,144.0 703.1,144.0 703.0,612.1ZM561.0,170.1 560.8,170.0 561.0,169.6 561.7,170.0 561.0,170.1Z" fill="rgb(244,244,244)"/>
<path d="M703.0,612.0 538.0,612.0 533.6,597.0 532.0,596.7 531.8,596.0 534.0,595.7 535.0,594.9 537.0,594.5 538.0,593.8 540.0,593.2 541.0,592.6 545.0,591.2 552.0,588.2 560.7,584.0 568.3,580.0 575.3,576.0 587.7,568.0 599.8,559.0 611.5,549.0 622.7,538.0 633.0,526.4 642.0,514.8 651.0,501.5 659.0,487.7 666.0,473.5 672.0,458.9 677.0,444.0 681.0,428.8 684.1,413.0 686.0,397.0 686.7,388.0 687.0,379.0 686.9,371.0 686.6,362.0 686.0,353.9 685.0,344.9 683.8,337.0 682.0,327.2 678.0,311.0 673.0,295.5 667.0,280.5 660.0,266.1 656.0,258.8 651.0,250.6 646.0,243.0 641.0,236.1 631.0,223.7 625.0,217.0 619.1,211.0 612.8,205.0 606.0,199.0 593.0,188.8 584.4,183.0 584.0,182.5 582.9,182.0 581.0,180.4 579.7,180.0 580.0,179.1 581.3,179.0 601.0,144.0 703.0,144.0 703.0,612.0ZM575.0,177.0 575.2,177.0 575.0,177.0ZM577.0,178.1 576.8,178.0 577.0,177.7 577.6,178.0 577.0,178.1ZM579.0,179.2 578.3,179.0 579.0,178.4 579.8,179.0 579.0,179.2ZM531.0,597.3 529.0,597.4 528.7,597.0 531.5,597.0 531.0,597.3Z" fill="rgb(251,251,251)"/>
</g>
<g mask="url(#rmask)" style="mix-blend-mode:overlay"><rect x="230" y="140" width="480" height="480" filter="url(#relief)" opacity="0.32"/></g><rect x="230" y="140" width="480" height="480" filter="url(#noise)" style="mix-blend-mode:overlay" opacity="0.22"/><rect x="230" y="140" width="480" height="480" filter="url(#noise2)" style="mix-blend-mode:overlay" opacity="0.16"/>
<path d="M443.2,175.8C441.7,173.1 443.2,166.6 445.9,163.3C448.5,160.1 454.4,157.8 459.0,156.1C463.5,154.4 469.2,153.2 473.4,153.1C477.5,153.0 482.5,153.1 483.8,155.5C485.2,157.8 483.8,163.9 481.2,167.3C478.6,170.7 472.5,173.7 468.1,175.8C463.8,177.9 459.2,179.7 455.0,179.7C450.9,179.7 444.8,178.5 443.2,175.8Z" fill="#cfc9c3" fill-opacity="0.16" filter="url(#bl4)"/>
<path d="M410.5,206.6C410.3,205.0 413.1,202.0 415.7,200.0C418.3,198.1 421.6,196.5 426.2,194.8C430.8,193.0 440.4,189.1 443.2,189.5C446.1,190.0 445.4,195.2 443.2,197.4C441.0,199.6 434.5,200.7 430.1,202.6C425.8,204.6 420.3,208.5 417.0,209.2C413.8,209.8 410.7,208.1 410.5,206.6Z" fill="#cfc9c3" fill-opacity="0.1" filter="url(#bl2_5)"/>
<path d="M379.0,498.0C381.0,495.0 388.2,499.3 395.0,500.0C401.8,500.7 410.8,500.7 420.0,502.0C429.2,503.3 443.0,501.7 450.0,508.0C457.0,514.3 460.8,528.3 462.0,540.0C463.2,551.7 459.5,569.3 457.0,578.0C454.5,586.7 451.8,590.7 447.0,592.0C442.2,593.3 434.7,590.7 428.0,586.0C421.3,581.3 412.8,571.5 407.0,564.0C401.2,556.5 397.0,548.7 393.0,541.0C389.0,533.3 385.3,525.2 383.0,518.0C380.7,510.8 377.0,501.0 379.0,498.0Z" fill="#cfc9c3" fill-opacity="0.25" filter="url(#bl4_5)"/>
<g filter="url(#bl0_8)" fill="#fffaf2">
<circle cx="632.8" cy="326.0" r="2.0" fill-opacity="0.50"/>
<circle cx="548.0" cy="388.0" r="1.5" fill-opacity="0.17"/>
<circle cx="556.0" cy="395.0" r="1.2" fill-opacity="0.26"/>
<circle cx="540.0" cy="410.0" r="1.2" fill-opacity="0.19"/>
<circle cx="567.0" cy="380.0" r="1.8" fill-opacity="0.20"/>
<circle cx="530.0" cy="430.0" r="1.7" fill-opacity="0.20"/>
<circle cx="545.0" cy="440.0" r="2.0" fill-opacity="0.17"/>
<circle cx="520.0" cy="455.0" r="1.4" fill-opacity="0.18"/>
<circle cx="575.0" cy="470.0" r="2.0" fill-opacity="0.23"/>
<circle cx="600.0" cy="480.0" r="2.1" fill-opacity="0.27"/>
<circle cx="560.0" cy="500.0" r="1.5" fill-opacity="0.27"/>
<circle cx="590.0" cy="520.0" r="1.8" fill-opacity="0.22"/>
<circle cx="540.0" cy="520.0" r="2.0" fill-opacity="0.20"/>
<circle cx="575.0" cy="545.0" r="1.9" fill-opacity="0.29"/>
<circle cx="610.0" cy="300.0" r="1.4" fill-opacity="0.23"/>
<circle cx="600.0" cy="280.0" r="1.5" fill-opacity="0.20"/>
<circle cx="622.0" cy="262.0" r="1.6" fill-opacity="0.21"/>
<circle cx="590.0" cy="255.0" r="1.4" fill-opacity="0.24"/>
<circle cx="615.0" cy="345.0" r="1.9" fill-opacity="0.27"/>
<circle cx="640.0" cy="390.0" r="1.4" fill-opacity="0.28"/>
<circle cx="650.0" cy="400.0" r="1.8" fill-opacity="0.25"/>
<circle cx="600.0" cy="395.0" r="1.6" fill-opacity="0.21"/>
<circle cx="605.0" cy="445.0" r="1.7" fill-opacity="0.27"/>
<circle cx="640.0" cy="300.0" r="1.6" fill-opacity="0.29"/>
<circle cx="625.0" cy="285.0" r="2.0" fill-opacity="0.28"/>
<circle cx="655.0" cy="375.0" r="2.0" fill-opacity="0.27"/>
<circle cx="560.0" cy="470.0" r="1.6" fill-opacity="0.26"/>
<circle cx="535.0" cy="480.0" r="1.9" fill-opacity="0.20"/>
<circle cx="510.0" cy="470.0" r="1.6" fill-opacity="0.18"/>
<circle cx="505.0" cy="430.0" r="1.7" fill-opacity="0.19"/>
<circle cx="525.0" cy="395.0" r="1.5" fill-opacity="0.28"/>
<circle cx="515.0" cy="380.0" r="1.9" fill-opacity="0.27"/>
<circle cx="580.0" cy="300.0" r="1.4" fill-opacity="0.25"/>
<circle cx="570.0" cy="240.0" r="1.6" fill-opacity="0.27"/>
<circle cx="600.0" cy="220.0" r="1.6" fill-opacity="0.26"/>
<circle cx="630.0" cy="240.0" r="1.8" fill-opacity="0.28"/>
<circle cx="650.0" cy="270.0" r="1.4" fill-opacity="0.18"/>
</g>
<g filter="url(#bl1_5)" fill="#fffaf2">
<circle cx="617.3" cy="510.2" r="3.2" fill-opacity="0.55"/>
<path d="M620.1,509.0C622.7,507.7 630.5,503.4 635.2,500.1C640.0,496.7 646.6,490.9 648.8,488.9C650.9,486.9 650.7,486.6 648.1,487.9C645.4,489.2 637.7,493.5 632.9,496.8C628.2,500.1 621.6,506.0 619.4,508.0C617.3,510.0 617.5,510.3 620.1,509.0Z" fill-opacity="0.21"/>
<path d="M619.5,508.1C621.9,505.5 628.7,497.4 632.7,491.7C636.7,486.0 641.9,476.8 643.6,473.7C645.3,470.6 645.0,470.4 642.6,473.0C640.3,475.6 633.4,483.7 629.4,489.4C625.4,495.1 620.2,504.3 618.5,507.4C616.9,510.5 617.1,510.7 619.5,508.1Z" fill-opacity="0.18"/>
<path d="M620.4,510.0C622.5,509.9 628.8,509.2 632.8,508.1C636.8,507.0 642.6,504.5 644.5,503.5C646.4,502.6 646.3,502.3 644.2,502.4C642.1,502.5 635.8,503.2 631.8,504.3C627.7,505.3 621.9,507.9 620.0,508.8C618.1,509.8 618.2,510.1 620.4,510.0Z" fill-opacity="0.16"/>
<path d="M618.4,507.3C619.2,505.2 621.4,498.7 622.1,494.3C622.9,489.9 623.1,483.1 623.1,480.8C623.1,478.5 622.7,478.4 621.9,480.6C621.1,482.7 619.0,489.2 618.2,493.6C617.4,498.0 617.2,504.9 617.2,507.1C617.3,509.4 617.6,509.5 618.4,507.3Z" fill-opacity="0.13"/>
<path d="M619.9,511.8C621.5,512.8 626.3,515.6 629.8,516.9C633.2,518.1 638.7,519.1 640.6,519.3C642.5,519.5 642.6,519.2 641.0,518.2C639.4,517.2 634.6,514.4 631.1,513.1C627.7,511.9 622.2,510.9 620.3,510.7C618.5,510.4 618.3,510.8 619.9,511.8Z" fill-opacity="0.13"/>
<path d="M614.4,511.2C612.2,511.9 605.9,514.5 602.0,516.7C598.1,519.0 592.8,523.2 591.0,524.7C589.3,526.2 589.5,526.5 591.6,525.7C593.8,525.0 600.1,522.4 604.0,520.2C607.9,517.9 613.3,513.7 615.0,512.2C616.7,510.7 616.6,510.4 614.4,511.2Z" fill-opacity="0.13"/>
<path d="M615.3,512.5C613.9,513.9 610.2,518.4 608.3,521.8C606.4,525.1 604.4,530.5 603.8,532.4C603.2,534.3 603.5,534.5 604.8,533.0C606.2,531.6 609.9,527.1 611.8,523.8C613.7,520.4 615.7,515.0 616.3,513.1C616.9,511.2 616.6,511.1 615.3,512.5Z" fill-opacity="0.10"/>
<path d="M616.3,507.3C615.7,505.3 613.4,499.4 611.3,495.8C609.2,492.2 605.2,487.2 603.8,485.7C602.4,484.1 602.1,484.2 602.8,486.3C603.4,488.3 605.7,494.2 607.8,497.8C609.9,501.4 613.9,506.3 615.3,507.9C616.7,509.5 617.0,509.3 616.3,507.3Z" fill-opacity="0.10"/>
<path d="M614.7,508.6C612.7,507.4 606.7,504.2 602.5,502.7C598.3,501.1 591.6,499.7 589.3,499.4C587.1,499.0 586.9,499.3 588.9,500.5C590.9,501.7 596.9,504.9 601.1,506.4C605.3,508.0 612.0,509.4 614.3,509.7C616.5,510.1 616.7,509.8 614.7,508.6Z" fill-opacity="0.10"/>
<path d="M618.3,513.1C618.6,514.5 619.9,518.7 621.3,521.2C622.7,523.6 625.7,526.8 626.8,527.8C627.9,528.8 628.2,528.7 627.8,527.2C627.5,525.8 626.2,521.6 624.8,519.2C623.4,516.7 620.4,513.5 619.3,512.5C618.2,511.5 617.9,511.7 618.3,513.1Z" fill-opacity="0.10"/>
<path d="M619.1,507.7C621.5,503.6 628.4,491.1 632.4,482.5C636.4,473.9 641.6,460.6 643.2,456.1C644.8,451.6 644.5,451.4 642.1,455.6C639.7,459.7 632.8,472.2 628.8,480.8C624.8,489.4 619.6,502.7 618.0,507.2C616.4,511.7 616.7,511.9 619.1,507.7Z" fill-opacity="0.10"/>
<path d="M640.6,520.4C643.8,516.5 652.8,504.7 658.1,496.3C663.4,488.0 670.4,474.9 672.6,470.4C674.8,465.9 674.5,465.7 671.4,469.6C668.2,473.5 659.2,485.3 653.9,493.7C648.6,502.0 641.6,515.1 639.4,519.6C637.2,524.1 637.5,524.3 640.6,520.4Z" fill-opacity="0.12"/>
<path d="M630.6,545.5C634.2,542.1 644.6,531.6 650.9,524.1C657.2,516.6 665.8,504.6 668.6,500.5C671.3,496.4 671.0,496.1 667.4,499.5C663.8,502.9 653.4,513.4 647.1,520.9C640.8,528.4 632.2,540.4 629.4,544.5C626.7,548.6 627.0,548.9 630.6,545.5Z" fill-opacity="0.11"/>
<path d="M650.7,500.3C653.7,495.6 662.2,481.1 667.2,471.1C672.2,461.1 678.7,445.6 680.7,440.3C682.7,435.1 682.3,434.9 679.3,439.7C676.3,444.4 667.8,458.9 662.8,468.9C657.8,478.9 651.3,494.4 649.3,499.7C647.3,504.9 647.7,505.1 650.7,500.3Z" fill-opacity="0.10"/>
<path d="M600.5,560.6C604.1,558.5 614.8,552.0 621.5,547.0C628.2,542.0 637.4,533.5 640.5,530.6C643.5,527.7 643.2,527.3 639.5,529.4C635.9,531.5 625.2,538.0 618.5,543.0C611.8,548.0 602.6,556.5 599.5,559.4C596.5,562.3 596.8,562.7 600.5,560.6Z" fill-opacity="0.10"/>
<path d="M585.4,580.6C589.0,579.0 599.7,573.8 606.3,569.6C613.0,565.5 622.4,558.2 625.4,555.6C628.4,553.1 628.2,552.7 624.6,554.4C621.0,556.0 610.3,561.2 603.7,565.4C597.0,569.5 587.6,576.8 584.6,579.4C581.6,581.9 581.8,582.3 585.4,580.6Z" fill-opacity="0.08"/>
<path d="M655.7,470.3C657.5,467.1 662.3,457.5 664.8,450.9C667.3,444.2 670.0,433.8 670.7,430.3C671.4,426.7 671.1,426.6 669.3,429.7C667.5,432.9 662.7,442.5 660.2,449.1C657.7,455.8 655.0,466.2 654.3,469.7C653.6,473.3 653.9,473.4 655.7,470.3Z" fill-opacity="0.10"/>
</g>
<g filter="url(#bl4)" fill="#fffaf2">
<circle cx="617.3" cy="510.2" r="10.0" fill-opacity="0.22"/>
</g>
<g filter="url(#cb)">
<ellipse cx="487.4" cy="277.0" rx="0.8" ry="0.8" fill="#000" fill-opacity="0.31"/>
<ellipse cx="489.1" cy="277.5" rx="0.7" ry="0.8" fill="#d8d2cc" fill-opacity="0.23"/>
<ellipse cx="488.3" cy="279.2" rx="1.2" ry="1.4" fill="#d8d2cc" fill-opacity="0.18"/>
<ellipse cx="466.7" cy="298.4" rx="1.0" ry="1.2" fill="#d8d2cc" fill-opacity="0.28"/>
<ellipse cx="452.2" cy="305.5" rx="1.3" ry="1.4" fill="#000" fill-opacity="0.49"/>
<ellipse cx="454.3" cy="306.0" rx="1.2" ry="1.4" fill="#d8d2cc" fill-opacity="0.22"/>
<ellipse cx="459.9" cy="299.1" rx="1.3" ry="1.4" fill="#000" fill-opacity="0.37"/>
<ellipse cx="462.0" cy="299.6" rx="1.2" ry="1.4" fill="#d8d2cc" fill-opacity="0.38"/>
<ellipse cx="461.9" cy="298.6" rx="0.9" ry="1.3" fill="#d8d2cc" fill-opacity="0.22"/>
<ellipse cx="458.7" cy="302.3" rx="1.0" ry="0.7" fill="#000" fill-opacity="0.45"/>
<ellipse cx="460.6" cy="302.8" rx="1.0" ry="0.7" fill="#d8d2cc" fill-opacity="0.18"/>
<ellipse cx="483.7" cy="281.8" rx="1.1" ry="1.2" fill="#000" fill-opacity="0.48"/>
<ellipse cx="485.5" cy="282.3" rx="1.0" ry="1.2" fill="#d8d2cc" fill-opacity="0.39"/>
<ellipse cx="488.8" cy="275.9" rx="1.0" ry="1.0" fill="#000" fill-opacity="0.30"/>
<ellipse cx="490.6" cy="276.4" rx="0.9" ry="1.0" fill="#d8d2cc" fill-opacity="0.31"/>
<ellipse cx="482.3" cy="284.1" rx="1.0" ry="1.1" fill="#000" fill-opacity="0.43"/>
<ellipse cx="484.1" cy="284.6" rx="0.9" ry="1.1" fill="#d8d2cc" fill-opacity="0.30"/>
<ellipse cx="465.0" cy="296.6" rx="1.2" ry="1.0" fill="#000" fill-opacity="0.38"/>
<ellipse cx="467.0" cy="297.2" rx="1.0" ry="1.0" fill="#d8d2cc" fill-opacity="0.22"/>
<ellipse cx="478.4" cy="287.1" rx="1.2" ry="0.7" fill="#000" fill-opacity="0.45"/>
<ellipse cx="480.4" cy="287.7" rx="1.1" ry="0.7" fill="#d8d2cc" fill-opacity="0.31"/>
<ellipse cx="454.5" cy="302.9" rx="1.4" ry="1.1" fill="#000" fill-opacity="0.46"/>
<ellipse cx="456.6" cy="303.4" rx="1.2" ry="1.1" fill="#d8d2cc" fill-opacity="0.21"/>
<ellipse cx="468.2" cy="296.0" rx="0.9" ry="1.3" fill="#d8d2cc" fill-opacity="0.30"/>
<ellipse cx="467.2" cy="296.2" rx="1.1" ry="1.0" fill="#000" fill-opacity="0.46"/>
<ellipse cx="469.0" cy="296.7" rx="1.0" ry="1.0" fill="#d8d2cc" fill-opacity="0.39"/>
<ellipse cx="452.3" cy="304.7" rx="1.3" ry="1.2" fill="#000" fill-opacity="0.49"/>
<ellipse cx="454.4" cy="305.2" rx="1.1" ry="1.2" fill="#d8d2cc" fill-opacity="0.42"/>
<ellipse cx="480.5" cy="288.5" rx="1.1" ry="1.2" fill="#d8d2cc" fill-opacity="0.41"/>
<ellipse cx="461.0" cy="301.8" rx="0.8" ry="1.3" fill="#d8d2cc" fill-opacity="0.24"/>
<ellipse cx="467.6" cy="296.5" rx="1.2" ry="0.7" fill="#d8d2cc" fill-opacity="0.39"/>
<ellipse cx="469.2" cy="294.8" rx="1.3" ry="0.8" fill="#000" fill-opacity="0.42"/>
<ellipse cx="471.3" cy="295.3" rx="1.2" ry="0.8" fill="#d8d2cc" fill-opacity="0.33"/>
<ellipse cx="469.4" cy="293.7" rx="1.2" ry="0.9" fill="#000" fill-opacity="0.41"/>
<ellipse cx="471.5" cy="294.2" rx="1.1" ry="0.9" fill="#d8d2cc" fill-opacity="0.32"/>
<ellipse cx="460.0" cy="300.8" rx="0.9" ry="1.2" fill="#d8d2cc" fill-opacity="0.33"/>
<ellipse cx="466.4" cy="297.2" rx="0.7" ry="1.2" fill="#d8d2cc" fill-opacity="0.22"/>
<ellipse cx="470.9" cy="294.9" rx="1.2" ry="1.4" fill="#d8d2cc" fill-opacity="0.36"/>
<ellipse cx="458.5" cy="302.1" rx="0.8" ry="1.2" fill="#000" fill-opacity="0.30"/>
<ellipse cx="460.1" cy="302.6" rx="0.7" ry="1.2" fill="#d8d2cc" fill-opacity="0.42"/>
<ellipse cx="454.4" cy="304.0" rx="1.4" ry="0.9" fill="#000" fill-opacity="0.45"/>
<ellipse cx="456.5" cy="304.5" rx="1.2" ry="0.9" fill="#d8d2cc" fill-opacity="0.27"/>
<ellipse cx="446.2" cy="308.8" rx="1.2" ry="0.7" fill="#000" fill-opacity="0.35"/>
<ellipse cx="448.2" cy="309.3" rx="1.1" ry="0.7" fill="#d8d2cc" fill-opacity="0.18"/>
<ellipse cx="466.3" cy="297.7" rx="0.9" ry="0.8" fill="#d8d2cc" fill-opacity="0.23"/>
<ellipse cx="486.0" cy="281.9" rx="1.2" ry="1.3" fill="#d8d2cc" fill-opacity="0.20"/>
<ellipse cx="448.0" cy="308.8" rx="1.4" ry="0.7" fill="#000" fill-opacity="0.30"/>
<ellipse cx="450.1" cy="309.3" rx="1.3" ry="0.7" fill="#d8d2cc" fill-opacity="0.24"/>
<ellipse cx="492.0" cy="276.0" rx="0.8" ry="1.3" fill="#d8d2cc" fill-opacity="0.26"/>
<ellipse cx="483.7" cy="281.4" rx="1.3" ry="0.9" fill="#000" fill-opacity="0.31"/>
<ellipse cx="485.8" cy="282.0" rx="1.2" ry="0.9" fill="#d8d2cc" fill-opacity="0.20"/>
<ellipse cx="455.0" cy="302.0" rx="0.9" ry="0.8" fill="#000" fill-opacity="0.43"/>
<ellipse cx="456.7" cy="302.5" rx="0.8" ry="0.8" fill="#d8d2cc" fill-opacity="0.38"/>
<ellipse cx="460.9" cy="300.7" rx="0.8" ry="1.0" fill="#000" fill-opacity="0.30"/>
<ellipse cx="462.6" cy="301.2" rx="0.8" ry="1.0" fill="#d8d2cc" fill-opacity="0.30"/>
<ellipse cx="447.6" cy="309.0" rx="1.1" ry="1.1" fill="#000" fill-opacity="0.27"/>
<ellipse cx="449.6" cy="309.5" rx="1.0" ry="1.1" fill="#d8d2cc" fill-opacity="0.20"/>
<ellipse cx="467.4" cy="295.0" rx="1.0" ry="1.1" fill="#000" fill-opacity="0.41"/>
<ellipse cx="469.2" cy="295.5" rx="0.9" ry="1.1" fill="#d8d2cc" fill-opacity="0.36"/>
<ellipse cx="463.8" cy="298.0" rx="1.0" ry="1.2" fill="#d8d2cc" fill-opacity="0.42"/>
<ellipse cx="465.1" cy="297.3" rx="1.2" ry="1.3" fill="#000" fill-opacity="0.50"/>
<ellipse cx="467.0" cy="297.8" rx="1.1" ry="1.3" fill="#d8d2cc" fill-opacity="0.26"/>
<ellipse cx="481.5" cy="287.9" rx="0.9" ry="1.3" fill="#d8d2cc" fill-opacity="0.29"/>
<ellipse cx="489.0" cy="289.7" rx="1.3" ry="1.7" fill="#d8d2cc" fill-opacity="0.15"/>
<ellipse cx="466.1" cy="305.4" rx="1.4" ry="1.8" fill="#d8d2cc" fill-opacity="0.10"/>
<ellipse cx="479.4" cy="296.7" rx="1.3" ry="1.4" fill="#d8d2cc" fill-opacity="0.13"/>
<ellipse cx="486.0" cy="291.1" rx="1.3" ry="1.1" fill="#d8d2cc" fill-opacity="0.07"/>
<ellipse cx="468.4" cy="304.7" rx="1.4" ry="1.6" fill="#d8d2cc" fill-opacity="0.12"/>
<ellipse cx="458.2" cy="312.3" rx="1.6" ry="1.1" fill="#d8d2cc" fill-opacity="0.15"/>
<ellipse cx="483.7" cy="295.9" rx="1.1" ry="1.8" fill="#d8d2cc" fill-opacity="0.16"/>
<ellipse cx="473.9" cy="299.4" rx="1.6" ry="1.5" fill="#d8d2cc" fill-opacity="0.11"/>
<ellipse cx="490.2" cy="286.5" rx="1.0" ry="1.5" fill="#d8d2cc" fill-opacity="0.12"/>
<ellipse cx="489.8" cy="288.0" rx="1.6" ry="1.7" fill="#d8d2cc" fill-opacity="0.11"/>
<ellipse cx="471.9" cy="301.7" rx="1.4" ry="1.6" fill="#d8d2cc" fill-opacity="0.08"/>
<ellipse cx="483.8" cy="293.4" rx="1.4" ry="1.8" fill="#d8d2cc" fill-opacity="0.14"/>
<ellipse cx="491.8" cy="279.1" rx="1.7" ry="0.9" fill="#d8d2cc" fill-opacity="0.10"/>
<ellipse cx="457.2" cy="312.3" rx="1.5" ry="1.0" fill="#d8d2cc" fill-opacity="0.09"/>
<ellipse cx="478.1" cy="297.9" rx="1.6" ry="1.2" fill="#d8d2cc" fill-opacity="0.10"/>
<ellipse cx="475.5" cy="301.2" rx="1.7" ry="1.3" fill="#d8d2cc" fill-opacity="0.11"/>
<ellipse cx="489.5" cy="287.3" rx="1.0" ry="1.6" fill="#d8d2cc" fill-opacity="0.08"/>
<ellipse cx="477.9" cy="299.6" rx="1.2" ry="1.6" fill="#d8d2cc" fill-opacity="0.09"/>
<ellipse cx="460.9" cy="308.7" rx="1.3" ry="0.9" fill="#d8d2cc" fill-opacity="0.10"/>
<ellipse cx="474.4" cy="300.8" rx="1.0" ry="1.7" fill="#d8d2cc" fill-opacity="0.12"/>
<ellipse cx="482.5" cy="293.9" rx="1.4" ry="1.0" fill="#d8d2cc" fill-opacity="0.12"/>
<ellipse cx="462.6" cy="307.6" rx="1.1" ry="1.5" fill="#d8d2cc" fill-opacity="0.12"/>
<ellipse cx="458.1" cy="312.0" rx="1.0" ry="1.7" fill="#d8d2cc" fill-opacity="0.11"/>
<ellipse cx="457.5" cy="311.4" rx="1.5" ry="1.5" fill="#d8d2cc" fill-opacity="0.14"/>
<ellipse cx="465.6" cy="303.7" rx="1.1" ry="1.7" fill="#d8d2cc" fill-opacity="0.10"/>
<ellipse cx="462.4" cy="308.6" rx="1.2" ry="1.4" fill="#d8d2cc" fill-opacity="0.13"/>
<ellipse cx="495.2" cy="279.5" rx="1.0" ry="1.7" fill="#d8d2cc" fill-opacity="0.09"/>
<ellipse cx="494.0" cy="281.5" rx="1.7" ry="1.0" fill="#d8d2cc" fill-opacity="0.12"/>
<ellipse cx="486.8" cy="290.6" rx="1.2" ry="1.5" fill="#d8d2cc" fill-opacity="0.10"/>
<ellipse cx="457.9" cy="313.0" rx="1.0" ry="1.9" fill="#d8d2cc" fill-opacity="0.09"/>
<ellipse cx="470.4" cy="302.2" rx="0.9" ry="1.3" fill="#d8d2cc" fill-opacity="0.15"/>
<ellipse cx="491.6" cy="285.5" rx="0.9" ry="1.8" fill="#d8d2cc" fill-opacity="0.14"/>
<ellipse cx="465.1" cy="307.1" rx="1.1" ry="1.4" fill="#d8d2cc" fill-opacity="0.09"/>
<ellipse cx="487.4" cy="289.2" rx="1.0" ry="1.7" fill="#d8d2cc" fill-opacity="0.13"/>
<ellipse cx="505.2" cy="261.0" rx="1.3" ry="0.9" fill="#d8d2cc" fill-opacity="0.24"/>
<ellipse cx="506.6" cy="256.7" rx="1.0" ry="1.2" fill="#000" fill-opacity="0.21"/>
<ellipse cx="508.4" cy="257.2" rx="0.9" ry="1.2" fill="#d8d2cc" fill-opacity="0.23"/>
<ellipse cx="505.7" cy="250.0" rx="0.9" ry="1.5" fill="#d8d2cc" fill-opacity="0.17"/>
<ellipse cx="504.9" cy="254.6" rx="1.2" ry="1.3" fill="#d8d2cc" fill-opacity="0.31"/>
<ellipse cx="505.6" cy="254.0" rx="1.2" ry="0.8" fill="#d8d2cc" fill-opacity="0.19"/>
<ellipse cx="503.0" cy="253.0" rx="1.0" ry="1.3" fill="#000" fill-opacity="0.33"/>
<ellipse cx="504.8" cy="253.5" rx="0.9" ry="1.3" fill="#d8d2cc" fill-opacity="0.33"/>
<ellipse cx="505.2" cy="254.6" rx="0.8" ry="1.0" fill="#d8d2cc" fill-opacity="0.23"/>
<ellipse cx="506.6" cy="255.4" rx="1.1" ry="1.2" fill="#d8d2cc" fill-opacity="0.15"/>
<ellipse cx="504.6" cy="258.0" rx="1.4" ry="1.1" fill="#000" fill-opacity="0.22"/>
<ellipse cx="506.7" cy="258.6" rx="1.3" ry="1.1" fill="#d8d2cc" fill-opacity="0.20"/>
<ellipse cx="502.2" cy="250.6" rx="0.8" ry="1.4" fill="#000" fill-opacity="0.28"/>
<ellipse cx="503.9" cy="251.0" rx="0.8" ry="1.4" fill="#d8d2cc" fill-opacity="0.36"/>
<ellipse cx="483.6" cy="221.9" rx="0.6" ry="0.8" fill="#000" fill-opacity="0.26"/>
<ellipse cx="485.0" cy="222.3" rx="0.5" ry="0.8" fill="#d8d2cc" fill-opacity="0.24"/>
<ellipse cx="475.2" cy="204.4" rx="0.5" ry="0.8" fill="#d8d2cc" fill-opacity="0.13"/>
<ellipse cx="475.8" cy="211.2" rx="1.1" ry="0.9" fill="#000" fill-opacity="0.27"/>
<ellipse cx="477.6" cy="211.7" rx="1.0" ry="0.9" fill="#d8d2cc" fill-opacity="0.24"/>
<ellipse cx="482.7" cy="221.3" rx="0.8" ry="0.7" fill="#000" fill-opacity="0.22"/>
<ellipse cx="484.3" cy="221.8" rx="0.8" ry="0.7" fill="#d8d2cc" fill-opacity="0.20"/>
<ellipse cx="484.0" cy="221.4" rx="1.0" ry="0.7" fill="#d8d2cc" fill-opacity="0.17"/>
<ellipse cx="477.9" cy="210.2" rx="0.6" ry="0.6" fill="#000" fill-opacity="0.23"/>
<ellipse cx="479.4" cy="210.7" rx="0.6" ry="0.6" fill="#d8d2cc" fill-opacity="0.18"/>
<ellipse cx="480.7" cy="216.3" rx="1.1" ry="0.8" fill="#000" fill-opacity="0.30"/>
<ellipse cx="482.6" cy="216.8" rx="1.0" ry="0.8" fill="#d8d2cc" fill-opacity="0.26"/>
<ellipse cx="475.7" cy="206.4" rx="0.7" ry="0.6" fill="#d8d2cc" fill-opacity="0.12"/>
<ellipse cx="479.7" cy="213.9" rx="0.8" ry="0.9" fill="#000" fill-opacity="0.34"/>
<ellipse cx="481.3" cy="214.4" rx="0.7" ry="0.9" fill="#d8d2cc" fill-opacity="0.15"/>
<ellipse cx="478.4" cy="211.6" rx="0.7" ry="0.7" fill="#d8d2cc" fill-opacity="0.16"/>
<ellipse cx="479.1" cy="213.5" rx="0.9" ry="0.8" fill="#000" fill-opacity="0.21"/>
<ellipse cx="480.9" cy="214.0" rx="0.9" ry="0.8" fill="#d8d2cc" fill-opacity="0.16"/>
<ellipse cx="474.5" cy="205.1" rx="0.6" ry="0.6" fill="#d8d2cc" fill-opacity="0.18"/>
<ellipse cx="476.4" cy="208.0" rx="0.8" ry="0.8" fill="#000" fill-opacity="0.30"/>
<ellipse cx="478.1" cy="208.5" rx="0.7" ry="0.8" fill="#d8d2cc" fill-opacity="0.18"/>
<ellipse cx="482.5" cy="218.6" rx="0.8" ry="0.8" fill="#000" fill-opacity="0.29"/>
<ellipse cx="484.1" cy="219.1" rx="0.7" ry="0.8" fill="#d8d2cc" fill-opacity="0.27"/>
<ellipse cx="476.7" cy="206.2" rx="0.8" ry="0.9" fill="#d8d2cc" fill-opacity="0.26"/>
<ellipse cx="478.7" cy="215.4" rx="1.0" ry="0.8" fill="#000" fill-opacity="0.22"/>
<ellipse cx="480.5" cy="215.9" rx="0.9" ry="0.8" fill="#d8d2cc" fill-opacity="0.14"/>
<ellipse cx="482.9" cy="221.4" rx="0.8" ry="0.9" fill="#000" fill-opacity="0.19"/>
<ellipse cx="484.5" cy="221.9" rx="0.7" ry="0.9" fill="#d8d2cc" fill-opacity="0.21"/>
<path d="M392.6,327.5 395.2,327.7 397.4,328.9 399.1,330.9 399.8,333.3 399.5,335.9 398.3,338.1 396.2,339.7 393.7,340.3 391.2,339.9 391.2,339.9 393.0,339.4 394.6,338.4 395.8,337.0 396.6,335.2 396.8,333.3 396.5,331.5 395.6,329.8 394.3,328.4 392.6,327.5Z" fill="#000" fill-opacity="0.59"/><path d="M394.1,340.5 391.5,340.3 389.2,339.0 387.5,337.0 386.8,334.5 387.1,331.9 388.4,329.6 390.4,327.9 393.0,327.3 395.6,327.6 395.6,327.6 393.7,328.1 392.0,329.2 390.7,330.7 389.9,332.5 389.7,334.5 390.0,336.4 391.0,338.2 392.4,339.6 394.1,340.5Z" fill="#fff" fill-opacity="0.37"/><ellipse cx="393.4" cy="333.9" rx="7.0" ry="7.0" fill="none" stroke="#fff" stroke-opacity="0.16" stroke-width="1.3"/><path d="M393.5,342.6 390.2,342.1 387.5,340.3 385.5,337.7 384.7,334.6 385.0,331.3 386.6,328.4 389.1,326.3 392.2,325.2 395.4,325.4 395.4,325.4 392.7,325.9 390.2,327.2 388.2,329.2 387.1,331.8 386.7,334.6 387.3,337.3 388.8,339.7 390.9,341.6 393.5,342.6Z" fill="#000" fill-opacity="0.20"/>
<path d="M428.6,313.8 430.0,314.1 431.2,314.8 432.1,316.0 432.5,317.4 432.3,318.9 431.6,320.2 430.5,321.1 429.1,321.6 427.7,321.5 427.7,321.5 428.9,321.3 430.0,320.7 430.9,319.8 431.4,318.7 431.6,317.4 431.3,316.2 430.7,315.1 429.7,314.3 428.6,313.8Z" fill="#000" fill-opacity="0.40"/><path d="M429.0,321.7 427.4,321.6 426.0,320.8 425.0,319.6 424.6,318.0 424.8,316.5 425.5,315.1 426.8,314.1 428.3,313.7 429.9,313.9 429.9,313.9 428.8,314.2 427.7,314.8 427.0,315.7 426.5,316.9 426.3,318.0 426.6,319.2 427.1,320.3 428.0,321.2 429.0,321.7Z" fill="#fff" fill-opacity="0.27"/><ellipse cx="428.6" cy="317.7" rx="4.2" ry="4.2" fill="none" stroke="#fff" stroke-opacity="0.16" stroke-width="0.8"/><path d="M428.6,323.0 426.7,322.7 425.0,321.6 423.8,320.0 423.3,318.1 423.5,316.1 424.5,314.4 426.0,313.1 427.8,312.4 429.8,312.5 429.8,312.5 428.1,312.8 426.6,313.6 425.5,314.9 424.8,316.4 424.6,318.1 424.9,319.8 425.8,321.2 427.1,322.4 428.6,323.0Z" fill="#000" fill-opacity="0.08"/>
<path d="M463.7,259.0 465.7,259.4 467.4,260.6 468.7,262.3 469.2,264.3 469.0,266.4 468.0,268.2 466.4,269.6 464.5,270.3 462.4,270.3 462.4,270.3 464.2,270.0 465.9,269.2 467.2,267.9 468.0,266.2 468.2,264.3 467.8,262.5 466.9,260.9 465.4,259.7 463.7,259.0Z" fill="#000" fill-opacity="0.30"/><path d="M464.1,270.6 461.8,270.3 459.8,269.3 458.3,267.4 457.6,265.2 457.9,262.9 459.0,260.9 460.9,259.4 463.1,258.8 465.4,259.1 465.4,259.1 463.7,259.6 462.3,260.5 461.1,261.9 460.4,263.5 460.2,265.2 460.5,266.9 461.3,268.5 462.6,269.7 464.1,270.6Z" fill="#fff" fill-opacity="0.21"/><ellipse cx="463.5" cy="264.7" rx="6.2" ry="6.2" fill="none" stroke="#fff" stroke-opacity="0.14" stroke-width="1.1"/>
<path d="M482.0,247.9 483.3,248.2 484.4,248.9 485.2,250.0 485.6,251.3 485.4,252.7 484.8,253.9 483.8,254.8 482.5,255.2 481.1,255.2 481.1,255.2 482.3,255.0 483.4,254.5 484.2,253.6 484.7,252.5 484.9,251.3 484.6,250.2 484.0,249.1 483.1,248.4 482.0,247.9Z" fill="#000" fill-opacity="0.34"/><path d="M482.3,255.4 480.8,255.2 479.5,254.5 478.5,253.4 478.1,251.9 478.3,250.4 479.0,249.1 480.2,248.2 481.7,247.8 483.2,248.0 483.2,248.0 482.1,248.3 481.1,248.9 480.4,249.8 479.9,250.8 479.8,251.9 480.0,253.0 480.5,254.0 481.3,254.8 482.3,255.4Z" fill="#fff" fill-opacity="0.23"/><ellipse cx="481.9" cy="251.6" rx="4.0" ry="4.0" fill="none" stroke="#fff" stroke-opacity="0.16" stroke-width="0.7"/>
<path d="M482.1,259.7 483.0,259.9 483.7,260.3 484.2,261.0 484.4,261.8 484.3,262.7 483.9,263.4 483.3,264.0 482.5,264.3 481.6,264.2 481.6,264.2 482.3,264.1 483.0,263.8 483.5,263.2 483.8,262.6 483.9,261.8 483.8,261.1 483.4,260.5 482.8,260.0 482.1,259.7Z" fill="#000" fill-opacity="0.34"/><path d="M482.4,264.4 481.4,264.3 480.6,263.8 480.0,263.1 479.7,262.2 479.8,261.3 480.3,260.4 481.0,259.9 482.0,259.6 482.9,259.8 482.9,259.8 482.2,259.9 481.6,260.3 481.1,260.9 480.9,261.5 480.8,262.2 480.9,262.9 481.2,263.5 481.7,264.0 482.4,264.4Z" fill="#fff" fill-opacity="0.23"/><ellipse cx="482.1" cy="262.0" rx="2.5" ry="2.5" fill="none" stroke="#fff" stroke-opacity="0.16" stroke-width="0.7"/>
<path d="M429.9,270.0 430.9,270.1 431.7,270.6 432.4,271.3 432.6,272.3 432.5,273.3 432.0,274.1 431.3,274.7 430.3,275.0 429.4,274.9 429.4,274.9 430.1,274.7 430.8,274.3 431.3,273.8 431.6,273.1 431.7,272.3 431.5,271.5 431.2,270.9 430.6,270.3 429.9,270.0Z" fill="#000" fill-opacity="0.48"/><path d="M430.4,275.1 429.4,275.0 428.4,274.5 427.8,273.7 427.5,272.7 427.6,271.7 428.1,270.8 428.9,270.2 429.9,269.9 431.0,270.0 431.0,270.0 430.2,270.2 429.5,270.6 429.0,271.2 428.7,272.0 428.6,272.7 428.8,273.5 429.1,274.2 429.7,274.7 430.4,275.1Z" fill="#fff" fill-opacity="0.31"/><ellipse cx="430.1" cy="272.5" rx="2.8" ry="2.8" fill="none" stroke="#fff" stroke-opacity="0.16" stroke-width="0.7"/><path d="M430.1,275.9 428.9,275.7 427.8,275.0 427.0,274.0 426.7,272.8 426.8,271.5 427.4,270.3 428.4,269.5 429.6,269.1 430.9,269.2 430.9,269.2 429.8,269.3 428.8,269.9 428.1,270.7 427.6,271.7 427.5,272.8 427.7,273.8 428.3,274.8 429.1,275.5 430.1,275.9Z" fill="#000" fill-opacity="0.12"/>
<path d="M401.5,271.6 402.3,271.6 403.2,271.9 403.8,272.5 404.1,273.4 404.0,274.3 403.5,275.0 402.8,275.5 401.9,275.7 401.0,275.4 401.0,275.4 401.5,275.2 402.0,274.9 402.3,274.4 402.5,273.9 402.6,273.4 402.5,272.8 402.3,272.3 401.9,271.9 401.5,271.6Z" fill="#000" fill-opacity="0.64"/><path d="M402.2,275.7 401.4,275.6 400.6,275.3 400.1,274.6 399.9,273.8 400.0,272.9 400.4,272.2 401.0,271.7 401.9,271.5 402.7,271.6 402.7,271.6 402.1,271.7 401.5,272.1 401.1,272.6 400.9,273.2 400.8,273.8 400.9,274.4 401.2,275.0 401.7,275.4 402.2,275.7Z" fill="#fff" fill-opacity="0.40"/><ellipse cx="402.0" cy="273.6" rx="2.2" ry="2.2" fill="none" stroke="#fff" stroke-opacity="0.16" stroke-width="0.7"/><path d="M402.1,276.4 401.0,276.2 400.1,275.7 399.5,274.8 399.2,273.8 399.3,272.8 399.8,271.8 400.6,271.1 401.7,270.8 402.7,270.9 402.7,270.9 401.8,271.0 401.1,271.5 400.5,272.1 400.1,272.9 400.0,273.8 400.2,274.7 400.6,275.5 401.3,276.1 402.1,276.4Z" fill="#000" fill-opacity="0.23"/>
<path d="M398.6,290.7 399.3,290.7 399.9,291.0 400.4,291.5 400.6,292.1 400.5,292.8 400.2,293.4 399.6,293.8 398.9,293.9 398.3,293.7 398.3,293.7 398.7,293.6 399.0,293.3 399.3,293.0 399.4,292.6 399.5,292.1 399.4,291.7 399.2,291.3 399.0,291.0 398.6,290.7Z" fill="#000" fill-opacity="0.62"/><path d="M399.3,293.9 398.6,293.9 398.0,293.6 397.5,293.1 397.3,292.5 397.4,291.8 397.8,291.2 398.3,290.8 399.0,290.6 399.6,290.8 399.6,290.8 399.2,290.9 398.8,291.2 398.5,291.5 398.3,292.0 398.2,292.5 398.3,292.9 398.5,293.4 398.9,293.7 399.3,293.9Z" fill="#fff" fill-opacity="0.39"/><ellipse cx="399.0" cy="292.3" rx="1.8" ry="1.8" fill="none" stroke="#fff" stroke-opacity="0.16" stroke-width="0.7"/><path d="M399.2,294.5 398.3,294.4 397.6,294.0 397.1,293.3 396.8,292.5 396.9,291.6 397.3,290.9 398.0,290.4 398.8,290.1 399.6,290.2 399.6,290.2 399.0,290.4 398.4,290.7 398.0,291.2 397.7,291.8 397.6,292.5 397.7,293.1 398.1,293.7 398.5,294.2 399.2,294.5Z" fill="#000" fill-opacity="0.22"/>
<path d="M380.0,355.6 381.2,355.6 382.3,356.0 383.1,356.9 383.4,358.0 383.3,359.2 382.7,360.2 381.7,360.9 380.6,361.1 379.4,360.7 379.4,360.7 380.1,360.5 380.7,360.0 381.1,359.4 381.4,358.8 381.5,358.0 381.4,357.3 381.1,356.6 380.6,356.1 380.0,355.6Z" fill="#000" fill-opacity="0.65"/><path d="M381.0,361.1 379.9,361.0 378.9,360.5 378.2,359.6 377.9,358.5 378.0,357.4 378.5,356.4 379.4,355.7 380.5,355.5 381.6,355.6 381.6,355.6 380.8,355.8 380.1,356.3 379.5,356.9 379.2,357.7 379.1,358.5 379.3,359.4 379.7,360.1 380.3,360.7 381.0,361.1Z" fill="#fff" fill-opacity="0.40"/><ellipse cx="380.7" cy="358.3" rx="3.0" ry="3.0" fill="none" stroke="#fff" stroke-opacity="0.16" stroke-width="0.7"/><path d="M380.7,362.0 379.3,361.8 378.2,361.1 377.3,359.9 377.0,358.6 377.1,357.2 377.8,356.0 378.8,355.0 380.2,354.6 381.6,354.7 381.6,354.7 380.4,354.9 379.3,355.4 378.5,356.3 378.0,357.4 377.8,358.6 378.1,359.8 378.7,360.8 379.6,361.6 380.7,362.0Z" fill="#000" fill-opacity="0.23"/>
<path d="M364.4,368.7 365.4,368.5 366.5,368.8 367.2,369.5 367.6,370.5 367.5,371.6 366.9,372.5 366.0,373.0 364.9,373.1 363.9,372.7 363.9,372.7 364.4,372.4 364.8,372.0 365.1,371.6 365.3,371.1 365.3,370.5 365.3,370.0 365.1,369.5 364.8,369.1 364.4,368.7Z" fill="#000" fill-opacity="0.74"/><path d="M365.6,373.2 364.6,373.1 363.8,372.6 363.2,371.9 362.9,371.0 363.0,370.1 363.5,369.2 364.2,368.7 365.2,368.4 366.1,368.6 366.1,368.6 365.4,368.7 364.8,369.1 364.3,369.7 364.1,370.3 364.0,371.0 364.1,371.7 364.4,372.3 364.9,372.8 365.6,373.2Z" fill="#fff" fill-opacity="0.45"/><ellipse cx="365.3" cy="370.8" rx="2.5" ry="2.5" fill="none" stroke="#fff" stroke-opacity="0.16" stroke-width="0.7"/><path d="M365.3,373.9 364.2,373.7 363.2,373.1 362.5,372.2 362.2,371.0 362.3,369.9 362.9,368.8 363.8,368.1 364.9,367.7 366.0,367.8 366.0,367.8 365.1,367.9 364.2,368.4 363.5,369.1 363.1,370.0 363.0,371.0 363.2,372.0 363.7,372.9 364.4,373.5 365.3,373.9Z" fill="#000" fill-opacity="0.29"/>
<path d="M380.6,448.8 382.3,448.9 383.9,449.6 385.0,450.9 385.5,452.5 385.3,454.2 384.5,455.7 383.1,456.7 381.4,457.0 379.7,456.7 379.7,456.7 380.8,456.3 381.7,455.6 382.4,454.7 382.9,453.7 383.0,452.5 382.8,451.4 382.3,450.3 381.6,449.5 380.6,448.8Z" fill="#000" fill-opacity="0.63"/><path d="M381.9,457.1 380.2,457.0 378.7,456.2 377.6,454.9 377.1,453.3 377.3,451.6 378.2,450.1 379.5,449.1 381.1,448.6 382.8,448.9 382.8,448.9 381.6,449.2 380.5,449.9 379.7,450.8 379.2,452.0 379.0,453.3 379.2,454.5 379.8,455.7 380.7,456.6 381.9,457.1Z" fill="#fff" fill-opacity="0.39"/><ellipse cx="381.4" cy="452.9" rx="4.5" ry="4.5" fill="none" stroke="#fff" stroke-opacity="0.16" stroke-width="0.8"/><path d="M381.4,458.5 379.4,458.1 377.6,457.0 376.3,455.3 375.8,453.3 376.0,451.2 377.0,449.4 378.6,448.0 380.6,447.3 382.7,447.4 382.7,447.4 380.9,447.7 379.3,448.6 378.1,449.9 377.3,451.5 377.1,453.3 377.5,455.1 378.4,456.6 379.8,457.8 381.4,458.5Z" fill="#000" fill-opacity="0.22"/>
<path d="M458.1,194.2 460.5,194.4 462.7,195.2 464.3,196.5 465.0,198.0 464.9,199.6 463.8,200.9 461.9,201.7 459.6,202.0 457.2,201.8 457.2,201.8 459.0,201.5 460.5,201.0 461.7,200.1 462.4,199.1 462.5,197.9 462.1,196.7 461.1,195.7 459.7,194.8 458.1,194.2Z" fill="#000" fill-opacity="0.55"/><path d="M459.9,202.2 457.3,201.9 455.1,201.1 453.4,199.8 452.6,198.2 452.7,196.6 453.9,195.2 455.8,194.3 458.2,194.0 460.8,194.3 460.8,194.3 458.9,194.6 457.4,195.2 456.2,196.0 455.5,197.1 455.3,198.3 455.8,199.5 456.7,200.6 458.1,201.5 459.9,202.2Z" fill="#fff" fill-opacity="0.35"/><ellipse cx="458.9" cy="198.1" rx="6.8" ry="4.2" fill="none" stroke="#fff" stroke-opacity="0.16" stroke-width="1.2"/><path d="M459.3,203.5 456.2,203.0 453.5,201.8 451.5,200.1 450.6,198.1 450.8,196.2 452.1,194.5 454.4,193.3 457.4,192.8 460.5,193.0 460.5,193.0 457.9,193.2 455.5,193.9 453.8,195.0 452.7,196.5 452.5,198.2 453.2,199.9 454.7,201.5 456.8,202.7 459.3,203.5Z" fill="#000" fill-opacity="0.17"/>
<path d="M422.9,526.8 424.7,527.0 426.3,528.0 427.4,529.4 427.9,531.2 427.7,533.1 426.8,534.7 425.4,535.8 423.6,536.4 421.8,536.3 421.8,536.3 423.3,535.9 424.6,535.2 425.6,534.1 426.2,532.7 426.4,531.2 426.1,529.7 425.4,528.4 424.3,527.4 422.9,526.8Z" fill="#000" fill-opacity="0.47"/><path d="M423.6,536.6 421.7,536.4 419.9,535.5 418.7,533.9 418.1,532.0 418.4,530.1 419.3,528.3 420.9,527.1 422.8,526.6 424.7,526.9 424.7,526.9 423.3,527.3 422.0,528.1 421.1,529.2 420.5,530.6 420.3,532.0 420.6,533.5 421.3,534.8 422.3,535.9 423.6,536.6Z" fill="#fff" fill-opacity="0.30"/><ellipse cx="423.1" cy="531.6" rx="5.2" ry="5.2" fill="none" stroke="#fff" stroke-opacity="0.16" stroke-width="0.9"/><path d="M423.1,538.2 420.7,537.7 418.7,536.4 417.2,534.5 416.6,532.1 416.8,529.7 418.0,527.5 419.9,525.9 422.2,525.1 424.6,525.2 424.6,525.2 422.5,525.6 420.7,526.6 419.2,528.1 418.3,530.0 418.1,532.1 418.5,534.2 419.6,536.0 421.2,537.4 423.1,538.2Z" fill="#000" fill-opacity="0.12"/>
<path d="M398.1,540.1 401.2,540.1 403.9,541.4 405.9,543.7 406.8,546.6 406.5,549.6 404.9,552.2 402.5,554.0 399.5,554.7 396.5,554.0 396.5,554.0 398.5,553.4 400.2,552.2 401.5,550.6 402.3,548.7 402.5,546.6 402.2,544.6 401.3,542.7 399.9,541.2 398.1,540.1Z" fill="#000" fill-opacity="0.67"/><path d="M400.3,554.9 397.3,554.6 394.7,553.2 392.8,550.8 391.9,548.0 392.3,545.0 393.7,542.3 396.1,540.5 399.0,539.7 402.0,540.1 402.0,540.1 399.8,540.7 397.9,541.9 396.4,543.6 395.5,545.7 395.2,548.0 395.7,550.2 396.7,552.2 398.3,553.8 400.3,554.9Z" fill="#fff" fill-opacity="0.41"/><ellipse cx="399.5" cy="547.3" rx="8.0" ry="8.0" fill="none" stroke="#fff" stroke-opacity="0.16" stroke-width="1.4"/><path d="M399.6,557.3 395.9,556.6 392.7,554.7 390.5,551.7 389.5,548.0 390.0,544.3 391.7,541.0 394.5,538.6 398.1,537.4 401.8,537.6 401.8,537.6 398.7,538.1 395.8,539.6 393.6,542.0 392.3,544.9 391.9,548.0 392.6,551.2 394.2,554.0 396.6,556.1 399.6,557.3Z" fill="#000" fill-opacity="0.25"/>
<path d="M394.4,524.4 396.9,524.5 399.1,525.5 400.7,527.4 401.5,529.7 401.2,532.2 399.9,534.3 397.9,535.8 395.5,536.3 393.1,535.8 393.1,535.8 394.7,535.2 396.1,534.3 397.1,533.0 397.8,531.4 398.0,529.7 397.7,528.1 397.0,526.6 395.8,525.3 394.4,524.4Z" fill="#000" fill-opacity="0.64"/><path d="M396.2,536.4 393.7,536.2 391.6,535.1 390.0,533.2 389.3,530.8 389.6,528.4 390.8,526.3 392.8,524.8 395.1,524.1 397.5,524.5 397.5,524.5 395.8,524.9 394.2,525.9 393.0,527.3 392.3,529.0 392.0,530.8 392.4,532.6 393.2,534.3 394.5,535.6 396.2,536.4Z" fill="#fff" fill-opacity="0.40"/><ellipse cx="395.5" cy="530.3" rx="6.5" ry="6.5" fill="none" stroke="#fff" stroke-opacity="0.16" stroke-width="1.2"/><path d="M395.6,538.4 392.6,537.9 390.0,536.3 388.2,533.8 387.4,530.9 387.7,527.9 389.2,525.2 391.5,523.2 394.3,522.3 397.4,522.4 397.4,522.4 394.8,522.8 392.5,524.1 390.7,526.0 389.6,528.3 389.3,530.9 389.9,533.5 391.2,535.7 393.1,537.4 395.6,538.4Z" fill="#000" fill-opacity="0.23"/>
<path d="M439.4,544.1 442.3,544.6 444.7,546.2 446.4,548.5 447.2,551.3 446.9,554.2 445.5,556.8 443.3,558.7 440.5,559.6 437.6,559.5 437.6,559.5 440.1,559.1 442.4,557.9 444.1,556.1 445.2,553.8 445.5,551.3 444.9,548.9 443.6,546.7 441.7,545.0 439.4,544.1Z" fill="#000" fill-opacity="0.26"/><path d="M440.3,559.9 437.1,559.6 434.3,558.1 432.3,555.7 431.4,552.6 431.7,549.4 433.3,546.6 435.8,544.7 438.9,543.8 442.1,544.3 442.1,544.3 439.7,544.9 437.7,546.2 436.1,548.0 435.2,550.2 434.9,552.6 435.3,555.0 436.4,557.1 438.2,558.8 440.3,559.9Z" fill="#fff" fill-opacity="0.17"/><ellipse cx="439.4" cy="551.9" rx="8.5" ry="8.5" fill="none" stroke="#fff" stroke-opacity="0.10" stroke-width="1.5"/><path d="M439.5,562.5 435.6,561.8 432.2,559.7 429.8,556.5 428.8,552.7 429.3,548.7 431.1,545.2 434.1,542.7 437.9,541.4 441.9,541.6 441.9,541.6 438.5,542.1 435.5,543.7 433.1,546.2 431.7,549.3 431.3,552.7 432.0,556.0 433.8,559.0 436.3,561.2 439.5,562.5Z" fill="#000" fill-opacity="0.06"/>
<path d="M424.2,558.4 428.8,558.9 432.8,561.2 435.7,564.9 436.9,569.3 436.4,573.9 434.2,578.0 430.5,580.9 426.1,582.2 421.5,581.7 421.5,581.7 425.1,580.9 428.2,579.1 430.7,576.3 432.2,573.0 432.6,569.3 431.9,565.7 430.1,562.5 427.5,560.0 424.2,558.4Z" fill="#000" fill-opacity="0.47"/><path d="M426.3,582.6 421.5,582.1 417.2,579.8 414.1,576.1 412.7,571.4 413.2,566.5 415.6,562.2 419.5,559.2 424.2,558.0 429.1,558.6 429.1,558.6 425.5,559.6 422.4,561.5 420.0,564.3 418.5,567.7 418.1,571.4 418.8,575.0 420.5,578.2 423.1,580.9 426.3,582.6Z" fill="#fff" fill-opacity="0.29"/><ellipse cx="425.0" cy="570.3" rx="13.0" ry="13.0" fill="none" stroke="#fff" stroke-opacity="0.13" stroke-width="2.3"/><path d="M425.1,586.5 419.1,585.5 414.0,582.2 410.4,577.4 408.8,571.5 409.5,565.5 412.3,560.1 417.0,556.2 422.7,554.2 428.8,554.5 428.8,554.5 423.6,555.4 419.0,557.8 415.4,561.6 413.2,566.3 412.6,571.5 413.7,576.6 416.4,581.1 420.3,584.5 425.1,586.5Z" fill="#000" fill-opacity="0.16"/>
<path d="M459.3,407.4 462.3,408.1 464.8,409.8 466.5,412.2 467.3,415.1 466.9,418.1 465.5,420.8 463.3,422.8 460.5,423.8 457.5,423.8 457.5,423.8 460.2,423.5 462.6,422.3 464.6,420.3 465.7,417.8 466.0,415.1 465.5,412.4 464.0,410.1 461.9,408.4 459.3,407.4Z" fill="#000" fill-opacity="0.23"/><path d="M459.9,424.2 456.6,423.9 453.6,422.3 451.4,419.7 450.5,416.4 450.9,413.1 452.5,410.1 455.2,408.0 458.5,407.2 461.8,407.6 461.8,407.6 459.4,408.3 457.2,409.6 455.5,411.6 454.5,413.9 454.2,416.4 454.7,418.9 455.9,421.2 457.7,423.0 459.9,424.2Z" fill="#fff" fill-opacity="0.16"/><ellipse cx="459.0" cy="415.7" rx="9.0" ry="9.0" fill="none" stroke="#fff" stroke-opacity="0.11" stroke-width="1.6"/>
<path d="M453.9,424.2 456.0,424.7 457.8,425.9 459.1,427.7 459.7,429.8 459.4,432.0 458.4,433.9 456.8,435.3 454.7,436.1 452.5,436.1 452.5,436.1 454.5,435.8 456.2,434.9 457.6,433.5 458.5,431.7 458.7,429.8 458.3,427.9 457.2,426.2 455.7,424.9 453.9,424.2Z" fill="#000" fill-opacity="0.27"/><path d="M454.4,436.3 451.9,436.1 449.8,435.0 448.2,433.1 447.5,430.7 447.8,428.3 449.0,426.2 451.0,424.7 453.3,424.0 455.7,424.4 455.7,424.4 454.0,424.8 452.4,425.8 451.2,427.2 450.5,428.9 450.2,430.7 450.6,432.5 451.4,434.2 452.7,435.5 454.4,436.3Z" fill="#fff" fill-opacity="0.18"/><ellipse cx="453.7" cy="430.2" rx="6.5" ry="6.5" fill="none" stroke="#fff" stroke-opacity="0.13" stroke-width="1.2"/>
<path d="M454.5,444.8 456.3,445.1 457.7,446.1 458.8,447.5 459.2,449.3 459.0,451.0 458.2,452.6 456.9,453.8 455.2,454.4 453.4,454.3 453.4,454.3 455.0,454.1 456.4,453.4 457.5,452.3 458.2,450.8 458.4,449.3 458.0,447.7 457.2,446.4 456.0,445.3 454.5,444.8Z" fill="#000" fill-opacity="0.34"/><path d="M454.9,454.6 453.0,454.4 451.2,453.5 450.0,451.9 449.4,450.0 449.7,448.1 450.6,446.3 452.2,445.1 454.1,444.6 456.0,444.9 456.0,444.9 454.6,445.3 453.3,446.1 452.4,447.2 451.8,448.6 451.6,450.0 451.9,451.5 452.6,452.8 453.6,453.9 454.9,454.6Z" fill="#fff" fill-opacity="0.23"/><ellipse cx="454.4" cy="449.6" rx="5.2" ry="5.2" fill="none" stroke="#fff" stroke-opacity="0.16" stroke-width="0.9"/>
<path d="M458.0,397.2 459.0,397.4 459.9,398.0 460.5,398.8 460.8,399.8 460.6,400.8 460.2,401.7 459.4,402.4 458.4,402.7 457.4,402.7 457.4,402.7 458.3,402.6 459.1,402.2 459.7,401.5 460.1,400.7 460.2,399.8 460.0,398.9 459.6,398.2 458.9,397.6 458.0,397.2Z" fill="#000" fill-opacity="0.34"/><path d="M458.3,402.8 457.2,402.7 456.2,402.2 455.5,401.3 455.2,400.2 455.3,399.1 455.8,398.1 456.7,397.4 457.8,397.2 458.9,397.3 458.9,397.3 458.1,397.5 457.4,398.0 456.8,398.6 456.5,399.4 456.4,400.2 456.6,401.1 457.0,401.8 457.6,402.4 458.3,402.8Z" fill="#fff" fill-opacity="0.23"/><ellipse cx="458.0" cy="400.0" rx="3.0" ry="3.0" fill="none" stroke="#fff" stroke-opacity="0.16" stroke-width="0.7"/>
<path d="M446.0,458.8 447.1,459.0 448.1,459.7 448.8,460.6 449.1,461.8 449.0,462.9 448.4,464.0 447.5,464.8 446.4,465.2 445.2,465.1 445.2,465.1 446.3,465.0 447.2,464.5 447.9,463.8 448.4,462.8 448.5,461.8 448.3,460.7 447.7,459.8 446.9,459.2 446.0,458.8Z" fill="#000" fill-opacity="0.34"/><path d="M446.3,465.3 445.0,465.2 443.8,464.6 443.0,463.5 442.6,462.3 442.7,461.0 443.4,459.8 444.4,459.0 445.7,458.7 447.0,458.9 447.0,458.9 446.0,459.1 445.2,459.6 444.5,460.4 444.2,461.3 444.0,462.3 444.2,463.3 444.7,464.1 445.4,464.8 446.3,465.3Z" fill="#fff" fill-opacity="0.23"/><ellipse cx="445.9" cy="462.0" rx="3.5" ry="3.5" fill="none" stroke="#fff" stroke-opacity="0.16" stroke-width="0.7"/>
<path d="M453.9,469.4 456.2,469.9 458.2,471.2 459.5,473.1 460.1,475.3 459.9,477.7 458.8,479.8 457.0,481.3 454.8,482.1 452.5,482.1 452.5,482.1 454.6,481.8 456.5,480.9 457.9,479.4 458.9,477.5 459.1,475.3 458.6,473.3 457.5,471.5 455.9,470.1 453.9,469.4Z" fill="#000" fill-opacity="0.23"/><path d="M454.4,482.4 451.8,482.2 449.5,480.9 447.8,478.9 447.1,476.4 447.4,473.8 448.7,471.5 450.7,469.8 453.3,469.2 455.9,469.5 455.9,469.5 454.0,470.0 452.3,471.1 451.0,472.6 450.2,474.4 450.0,476.4 450.3,478.3 451.3,480.1 452.7,481.5 454.4,482.4Z" fill="#fff" fill-opacity="0.16"/><ellipse cx="453.7" cy="475.8" rx="7.0" ry="7.0" fill="none" stroke="#fff" stroke-opacity="0.11" stroke-width="1.3"/>
<path d="M471.5,481.7 472.9,482.0 474.1,482.8 474.9,483.9 475.3,485.3 475.1,486.7 474.5,488.0 473.4,489.0 472.0,489.5 470.6,489.4 470.6,489.4 471.9,489.2 473.0,488.7 473.9,487.7 474.4,486.6 474.6,485.3 474.3,484.1 473.6,483.0 472.7,482.2 471.5,481.7Z" fill="#000" fill-opacity="0.34"/><path d="M471.8,489.6 470.2,489.5 468.8,488.7 467.8,487.5 467.4,485.9 467.6,484.4 468.3,483.0 469.6,482.0 471.1,481.6 472.7,481.8 472.7,481.8 471.6,482.1 470.5,482.7 469.8,483.6 469.3,484.8 469.1,485.9 469.4,487.1 469.9,488.2 470.8,489.1 471.8,489.6Z" fill="#fff" fill-opacity="0.23"/><ellipse cx="471.4" cy="485.6" rx="4.2" ry="4.2" fill="none" stroke="#fff" stroke-opacity="0.16" stroke-width="0.8"/>
<path d="M477.4,490.8 479.1,491.2 480.5,492.1 481.5,493.4 481.9,495.1 481.7,496.8 480.9,498.2 479.6,499.4 478.1,499.9 476.4,499.9 476.4,499.9 477.9,499.7 479.2,499.0 480.3,497.9 480.9,496.6 481.1,495.1 480.8,493.6 480.0,492.3 478.8,491.3 477.4,490.8Z" fill="#000" fill-opacity="0.34"/><path d="M477.8,500.1 475.9,500.0 474.3,499.1 473.1,497.6 472.6,495.8 472.8,493.9 473.7,492.3 475.2,491.1 477.0,490.7 478.9,490.9 478.9,490.9 477.5,491.3 476.3,492.0 475.4,493.1 474.8,494.4 474.6,495.8 474.9,497.2 475.6,498.5 476.6,499.5 477.8,500.1Z" fill="#fff" fill-opacity="0.23"/><ellipse cx="477.3" cy="495.4" rx="5.0" ry="5.0" fill="none" stroke="#fff" stroke-opacity="0.16" stroke-width="0.9"/>
<path d="M438.4,488.2 441.6,489.0 444.4,490.8 446.3,493.5 447.2,496.8 446.8,500.1 445.3,503.0 442.8,505.3 439.7,506.5 436.3,506.4 436.3,506.4 439.3,506.1 442.1,504.7 444.2,502.5 445.5,499.8 445.9,496.8 445.2,493.8 443.6,491.2 441.3,489.3 438.4,488.2Z" fill="#000" fill-opacity="0.17"/><path d="M439.0,506.8 435.3,506.5 432.0,504.7 429.6,501.8 428.5,498.2 429.0,494.5 430.8,491.2 433.8,488.9 437.4,487.9 441.1,488.4 441.1,488.4 438.4,489.2 436.0,490.7 434.1,492.8 433.0,495.4 432.7,498.2 433.2,501.0 434.5,503.5 436.5,505.5 439.0,506.8Z" fill="#fff" fill-opacity="0.12"/><ellipse cx="438.0" cy="497.4" rx="10.0" ry="10.0" fill="none" stroke="#fff" stroke-opacity="0.08" stroke-width="1.8"/>
<path d="M457.8,496.0 459.9,496.5 461.7,497.7 463.0,499.5 463.6,501.6 463.3,503.8 462.3,505.7 460.7,507.1 458.6,507.9 456.4,507.9 456.4,507.9 458.4,507.6 460.1,506.7 461.5,505.3 462.4,503.5 462.6,501.6 462.2,499.7 461.1,498.0 459.6,496.7 457.8,496.0Z" fill="#000" fill-opacity="0.23"/><path d="M458.3,508.1 455.8,507.9 453.7,506.8 452.1,504.9 451.4,502.5 451.7,500.1 452.9,498.0 454.9,496.5 457.2,495.8 459.6,496.2 459.6,496.2 457.9,496.6 456.3,497.6 455.1,499.0 454.4,500.7 454.1,502.5 454.5,504.3 455.3,506.0 456.6,507.3 458.3,508.1Z" fill="#fff" fill-opacity="0.16"/><ellipse cx="457.6" cy="502.0" rx="6.5" ry="6.5" fill="none" stroke="#fff" stroke-opacity="0.11" stroke-width="1.2"/>
<path d="M478.8,418.6 481.1,419.1 483.1,420.4 484.4,422.3 485.0,424.5 484.8,426.9 483.7,429.0 481.9,430.5 479.7,431.3 477.4,431.3 477.4,431.3 479.5,431.0 481.4,430.1 482.8,428.6 483.8,426.7 484.0,424.5 483.5,422.5 482.4,420.7 480.8,419.3 478.8,418.6Z" fill="#000" fill-opacity="0.20"/><path d="M479.3,431.6 476.7,431.4 474.4,430.1 472.7,428.1 472.0,425.6 472.3,423.0 473.6,420.7 475.6,419.0 478.2,418.4 480.8,418.7 480.8,418.7 478.9,419.2 477.2,420.3 475.9,421.8 475.1,423.6 474.9,425.6 475.2,427.5 476.2,429.3 477.6,430.7 479.3,431.6Z" fill="#fff" fill-opacity="0.14"/><ellipse cx="478.6" cy="425.0" rx="7.0" ry="7.0" fill="none" stroke="#fff" stroke-opacity="0.10" stroke-width="1.3"/>
<path d="M474.7,422.8 475.7,423.0 476.6,423.6 477.2,424.4 477.5,425.4 477.3,426.4 476.9,427.3 476.1,428.0 475.1,428.3 474.1,428.3 474.1,428.3 475.0,428.2 475.8,427.8 476.4,427.1 476.8,426.3 476.9,425.4 476.7,424.5 476.3,423.8 475.6,423.2 474.7,422.8Z" fill="#000" fill-opacity="0.34"/><path d="M475.0,428.4 473.9,428.3 472.9,427.8 472.2,426.9 471.9,425.8 472.0,424.7 472.5,423.7 473.4,423.0 474.5,422.8 475.6,422.9 475.6,422.9 474.8,423.1 474.1,423.6 473.5,424.2 473.2,425.0 473.1,425.8 473.3,426.7 473.7,427.4 474.3,428.0 475.0,428.4Z" fill="#fff" fill-opacity="0.23"/><ellipse cx="474.7" cy="425.6" rx="3.0" ry="3.0" fill="none" stroke="#fff" stroke-opacity="0.16" stroke-width="0.7"/>
<path d="M445.9,437.0 446.8,437.2 447.5,437.6 448.0,438.3 448.2,439.1 448.1,440.0 447.7,440.7 447.1,441.3 446.3,441.6 445.4,441.5 445.4,441.5 446.1,441.4 446.8,441.1 447.3,440.5 447.6,439.9 447.7,439.1 447.6,438.4 447.2,437.8 446.6,437.3 445.9,437.0Z" fill="#000" fill-opacity="0.34"/><path d="M446.2,441.7 445.2,441.6 444.4,441.1 443.8,440.4 443.5,439.5 443.6,438.6 444.1,437.7 444.8,437.2 445.8,436.9 446.7,437.1 446.7,437.1 446.0,437.2 445.4,437.6 444.9,438.2 444.7,438.8 444.6,439.5 444.7,440.2 445.0,440.8 445.5,441.3 446.2,441.7Z" fill="#fff" fill-opacity="0.23"/><ellipse cx="445.9" cy="439.3" rx="2.5" ry="2.5" fill="none" stroke="#fff" stroke-opacity="0.16" stroke-width="0.7"/>
<path d="M507.8,321.9 508.7,322.1 509.4,322.5 509.9,323.2 510.1,324.0 510.0,324.9 509.6,325.6 509.0,326.2 508.2,326.5 507.3,326.4 507.3,326.4 508.0,326.3 508.7,326.0 509.2,325.4 509.5,324.8 509.6,324.0 509.5,323.3 509.1,322.7 508.5,322.2 507.8,321.9Z" fill="#000" fill-opacity="0.27"/><path d="M508.1,326.6 507.1,326.5 506.3,326.0 505.7,325.3 505.4,324.4 505.5,323.5 506.0,322.6 506.7,322.1 507.7,321.8 508.6,322.0 508.6,322.0 507.9,322.1 507.3,322.5 506.8,323.1 506.6,323.7 506.5,324.4 506.6,325.1 506.9,325.7 507.4,326.2 508.1,326.6Z" fill="#fff" fill-opacity="0.18"/><ellipse cx="507.8" cy="324.2" rx="2.5" ry="2.5" fill="none" stroke="#fff" stroke-opacity="0.13" stroke-width="0.7"/>
<path d="M511.0,363.0 511.9,363.2 512.6,363.6 513.1,364.3 513.3,365.1 513.2,366.0 512.8,366.7 512.2,367.3 511.4,367.6 510.5,367.5 510.5,367.5 511.2,367.4 511.9,367.1 512.4,366.5 512.7,365.9 512.8,365.1 512.7,364.4 512.3,363.8 511.7,363.3 511.0,363.0Z" fill="#000" fill-opacity="0.20"/><path d="M511.3,367.7 510.3,367.6 509.5,367.1 508.9,366.4 508.6,365.5 508.7,364.6 509.2,363.7 509.9,363.2 510.9,362.9 511.8,363.1 511.8,363.1 511.1,363.2 510.5,363.6 510.0,364.2 509.8,364.8 509.7,365.5 509.8,366.2 510.1,366.8 510.6,367.3 511.3,367.7Z" fill="#fff" fill-opacity="0.14"/><ellipse cx="511.0" cy="365.3" rx="2.5" ry="2.5" fill="none" stroke="#fff" stroke-opacity="0.10" stroke-width="0.7"/>
<path d="M508.5,372.0 509.3,372.2 509.9,372.6 510.4,373.2 510.6,373.9 510.5,374.7 510.1,375.4 509.5,375.9 508.8,376.1 508.1,376.1 508.1,376.1 508.7,376.0 509.3,375.7 509.8,375.2 510.1,374.6 510.1,373.9 510.0,373.3 509.7,372.7 509.1,372.3 508.5,372.0Z" fill="#000" fill-opacity="0.20"/><path d="M508.7,376.2 507.9,376.1 507.1,375.8 506.6,375.1 506.4,374.3 506.5,373.4 506.9,372.7 507.5,372.2 508.4,372.0 509.2,372.1 509.2,372.1 508.6,372.2 508.0,372.6 507.6,373.1 507.4,373.7 507.3,374.3 507.4,374.9 507.7,375.5 508.2,375.9 508.7,376.2Z" fill="#fff" fill-opacity="0.14"/><ellipse cx="508.5" cy="374.1" rx="2.2" ry="2.2" fill="none" stroke="#fff" stroke-opacity="0.10" stroke-width="0.7"/>
<path d="M444.5,377.7 445.1,377.8 445.6,378.1 446.0,378.6 446.1,379.2 446.0,379.8 445.8,380.3 445.3,380.7 444.7,380.9 444.1,380.9 444.1,380.9 444.7,380.8 445.1,380.5 445.5,380.2 445.7,379.7 445.8,379.2 445.7,378.7 445.4,378.2 445.0,377.9 444.5,377.7Z" fill="#000" fill-opacity="0.34"/><path d="M444.8,380.9 444.1,380.9 443.5,380.6 443.0,380.1 442.8,379.5 442.9,378.8 443.3,378.2 443.8,377.8 444.5,377.6 445.1,377.8 445.1,377.8 444.7,377.9 444.3,378.2 444.0,378.5 443.8,379.0 443.7,379.5 443.8,379.9 444.0,380.4 444.4,380.7 444.8,380.9Z" fill="#fff" fill-opacity="0.23"/><ellipse cx="444.5" cy="379.3" rx="1.8" ry="1.8" fill="none" stroke="#fff" stroke-opacity="0.16" stroke-width="0.7"/>
<path d="M446.1,387.9 446.6,388.0 447.0,388.3 447.3,388.7 447.5,389.2 447.4,389.7 447.2,390.2 446.8,390.5 446.3,390.7 445.8,390.6 445.8,390.6 446.2,390.6 446.6,390.4 446.9,390.0 447.1,389.6 447.2,389.2 447.1,388.8 446.9,388.4 446.5,388.1 446.1,387.9Z" fill="#000" fill-opacity="0.34"/><path d="M446.4,390.7 445.8,390.7 445.3,390.4 444.9,390.0 444.7,389.4 444.7,388.8 445.1,388.3 445.5,388.0 446.1,387.9 446.7,388.0 446.7,388.0 446.3,388.1 446.0,388.4 445.8,388.7 445.6,389.0 445.6,389.4 445.6,389.8 445.8,390.2 446.1,390.5 446.4,390.7Z" fill="#fff" fill-opacity="0.23"/><ellipse cx="446.1" cy="389.3" rx="1.5" ry="1.5" fill="none" stroke="#fff" stroke-opacity="0.16" stroke-width="0.7"/>
<path d="M432.4,391.6 433.0,391.7 433.5,392.0 433.9,392.5 434.0,393.1 433.9,393.7 433.7,394.2 433.2,394.6 432.6,394.8 432.0,394.8 432.0,394.8 432.6,394.7 433.0,394.4 433.4,394.1 433.6,393.6 433.7,393.1 433.6,392.6 433.3,392.1 432.9,391.8 432.4,391.6Z" fill="#000" fill-opacity="0.34"/><path d="M432.7,394.8 432.0,394.8 431.4,394.5 430.9,394.0 430.7,393.4 430.8,392.7 431.2,392.1 431.7,391.7 432.4,391.5 433.0,391.7 433.0,391.7 432.6,391.8 432.2,392.1 431.9,392.4 431.7,392.9 431.6,393.4 431.7,393.8 431.9,394.3 432.3,394.6 432.7,394.8Z" fill="#fff" fill-opacity="0.23"/><ellipse cx="432.4" cy="393.2" rx="1.8" ry="1.8" fill="none" stroke="#fff" stroke-opacity="0.16" stroke-width="0.7"/>
<path d="M460.3,349.5 460.8,349.6 461.2,349.9 461.5,350.3 461.7,350.8 461.6,351.3 461.4,351.8 461.0,352.1 460.5,352.3 460.0,352.2 460.0,352.2 460.4,352.2 460.8,352.0 461.1,351.6 461.3,351.2 461.4,350.8 461.3,350.4 461.1,350.0 460.7,349.7 460.3,349.5Z" fill="#000" fill-opacity="0.34"/><path d="M460.6,352.3 460.0,352.3 459.5,352.0 459.1,351.6 458.9,351.0 458.9,350.4 459.3,349.9 459.7,349.6 460.3,349.5 460.9,349.6 460.9,349.6 460.5,349.7 460.2,350.0 460.0,350.3 459.8,350.6 459.8,351.0 459.8,351.4 460.0,351.8 460.3,352.1 460.6,352.3Z" fill="#fff" fill-opacity="0.23"/><ellipse cx="460.3" cy="350.9" rx="1.5" ry="1.5" fill="none" stroke="#fff" stroke-opacity="0.16" stroke-width="0.7"/>
<path d="M475.7,346.3 476.3,346.4 476.8,346.7 477.2,347.2 477.3,347.8 477.2,348.4 477.0,348.9 476.5,349.3 475.9,349.5 475.3,349.5 475.3,349.5 475.9,349.4 476.3,349.1 476.7,348.8 476.9,348.3 477.0,347.8 476.9,347.3 476.6,346.8 476.2,346.5 475.7,346.3Z" fill="#000" fill-opacity="0.34"/><path d="M476.0,349.5 475.3,349.5 474.7,349.2 474.2,348.7 474.0,348.1 474.1,347.4 474.5,346.8 475.0,346.4 475.7,346.2 476.3,346.4 476.3,346.4 475.9,346.5 475.5,346.8 475.2,347.1 475.0,347.6 474.9,348.1 475.0,348.5 475.2,349.0 475.6,349.3 476.0,349.5Z" fill="#fff" fill-opacity="0.23"/><ellipse cx="475.7" cy="347.9" rx="1.8" ry="1.8" fill="none" stroke="#fff" stroke-opacity="0.16" stroke-width="0.7"/>
<path d="M483.8,361.3 484.3,361.4 484.7,361.7 485.0,362.1 485.2,362.6 485.1,363.1 484.9,363.6 484.5,363.9 484.0,364.1 483.5,364.0 483.5,364.0 483.9,364.0 484.3,363.8 484.6,363.4 484.8,363.0 484.9,362.6 484.8,362.2 484.6,361.8 484.2,361.5 483.8,361.3Z" fill="#000" fill-opacity="0.34"/><path d="M484.1,364.1 483.5,364.1 483.0,363.8 482.6,363.4 482.4,362.8 482.4,362.2 482.8,361.7 483.2,361.4 483.8,361.3 484.4,361.4 484.4,361.4 484.0,361.5 483.7,361.8 483.5,362.1 483.3,362.4 483.3,362.8 483.3,363.2 483.5,363.6 483.8,363.9 484.1,364.1Z" fill="#fff" fill-opacity="0.23"/><ellipse cx="483.8" cy="362.7" rx="1.5" ry="1.5" fill="none" stroke="#fff" stroke-opacity="0.16" stroke-width="0.7"/>
<path d="M456.5,212.3 456.9,212.3 457.3,212.5 457.6,212.9 457.7,213.3 457.7,213.8 457.5,214.2 457.1,214.4 456.7,214.5 456.2,214.5 456.2,214.5 456.5,214.4 456.8,214.2 457.1,214.0 457.2,213.6 457.2,213.3 457.2,213.0 457.0,212.7 456.8,212.4 456.5,212.3Z" fill="#000" fill-opacity="0.50"/><path d="M456.9,214.5 456.4,214.6 455.9,214.4 455.6,214.0 455.4,213.5 455.5,213.0 455.7,212.6 456.2,212.3 456.7,212.2 457.2,212.4 457.2,212.4 456.9,212.5 456.6,212.7 456.5,212.9 456.3,213.2 456.3,213.5 456.4,213.8 456.5,214.1 456.7,214.4 456.9,214.5Z" fill="#fff" fill-opacity="0.32"/><ellipse cx="456.6" cy="213.4" rx="1.2" ry="1.2" fill="none" stroke="#fff" stroke-opacity="0.16" stroke-width="0.7"/><path d="M456.8,214.9 456.2,214.9 455.6,214.6 455.2,214.1 455.0,213.5 455.1,212.9 455.4,212.4 455.9,212.0 456.5,211.8 457.2,211.9 457.2,211.9 456.7,212.1 456.4,212.3 456.1,212.7 455.9,213.1 455.8,213.5 455.9,214.0 456.1,214.4 456.4,214.7 456.8,214.9Z" fill="#000" fill-opacity="0.14"/>
<path d="M457.5,219.4 457.9,219.4 458.2,219.6 458.4,219.9 458.5,220.2 458.5,220.6 458.3,220.9 458.0,221.1 457.7,221.2 457.3,221.2 457.3,221.2 457.6,221.1 457.8,221.0 458.0,220.8 458.1,220.5 458.2,220.2 458.1,219.9 458.0,219.7 457.8,219.5 457.5,219.4Z" fill="#000" fill-opacity="0.47"/><path d="M458.0,221.2 457.5,221.2 457.1,221.1 456.8,220.8 456.7,220.4 456.7,220.0 456.9,219.6 457.3,219.4 457.7,219.4 458.1,219.5 458.1,219.5 457.9,219.6 457.8,219.8 457.6,220.0 457.6,220.2 457.5,220.4 457.6,220.6 457.7,220.8 457.8,221.0 458.0,221.2Z" fill="#fff" fill-opacity="0.30"/><ellipse cx="457.6" cy="220.3" rx="1.0" ry="1.0" fill="none" stroke="#fff" stroke-opacity="0.16" stroke-width="0.7"/><path d="M457.9,221.5 457.3,221.5 456.9,221.3 456.5,220.9 456.4,220.4 456.4,219.9 456.7,219.5 457.1,219.2 457.6,219.1 458.1,219.2 458.1,219.2 457.8,219.3 457.5,219.5 457.3,219.8 457.2,220.1 457.1,220.4 457.2,220.8 457.3,221.1 457.6,221.3 457.9,221.5Z" fill="#000" fill-opacity="0.12"/>
<path d="M477.3,228.5 477.7,228.6 478.0,228.8 478.2,229.1 478.3,229.4 478.3,229.8 478.1,230.1 477.8,230.4 477.4,230.5 477.1,230.5 477.1,230.5 477.4,230.4 477.7,230.3 477.9,230.0 478.0,229.7 478.1,229.4 478.0,229.1 477.8,228.8 477.6,228.6 477.3,228.5Z" fill="#000" fill-opacity="0.34"/><path d="M477.6,230.5 477.2,230.5 476.7,230.4 476.4,230.1 476.3,229.6 476.3,229.2 476.6,228.8 477.0,228.5 477.4,228.5 477.9,228.6 477.9,228.6 477.6,228.7 477.4,228.9 477.3,229.1 477.2,229.4 477.1,229.6 477.2,229.9 477.3,230.1 477.4,230.3 477.6,230.5Z" fill="#fff" fill-opacity="0.23"/><ellipse cx="477.3" cy="229.5" rx="1.1" ry="1.1" fill="none" stroke="#fff" stroke-opacity="0.16" stroke-width="0.7"/>
<path d="M523.5,202.0 525.2,202.4 526.6,203.3 527.6,204.6 528.0,206.3 527.8,208.0 527.0,209.4 525.7,210.6 524.2,211.1 522.5,211.1 522.5,211.1 524.0,210.9 525.3,210.2 526.4,209.1 527.0,207.8 527.2,206.3 526.9,204.8 526.1,203.5 524.9,202.5 523.5,202.0Z" fill="#000" fill-opacity="0.17"/><path d="M523.9,211.3 522.0,211.2 520.4,210.3 519.2,208.8 518.7,207.0 518.9,205.1 519.8,203.5 521.3,202.3 523.1,201.9 525.0,202.1 525.0,202.1 523.6,202.5 522.4,203.2 521.5,204.3 520.9,205.6 520.7,207.0 521.0,208.4 521.7,209.7 522.7,210.7 523.9,211.3Z" fill="#fff" fill-opacity="0.12"/><ellipse cx="523.4" cy="206.6" rx="5.0" ry="5.0" fill="none" stroke="#fff" stroke-opacity="0.08" stroke-width="0.9"/>
<path d="M525.8,219.3 527.1,219.6 528.2,220.3 529.0,221.4 529.4,222.7 529.2,224.1 528.6,225.3 527.6,226.2 526.3,226.6 524.9,226.6 524.9,226.6 526.1,226.4 527.2,225.9 528.0,225.0 528.5,223.9 528.7,222.7 528.4,221.6 527.8,220.5 526.9,219.8 525.8,219.3Z" fill="#000" fill-opacity="0.17"/><path d="M526.1,226.8 524.6,226.6 523.3,225.9 522.3,224.8 521.9,223.3 522.1,221.8 522.8,220.5 524.0,219.6 525.5,219.2 527.0,219.4 527.0,219.4 525.9,219.7 524.9,220.3 524.2,221.2 523.7,222.2 523.6,223.3 523.8,224.4 524.3,225.4 525.1,226.2 526.1,226.8Z" fill="#fff" fill-opacity="0.12"/><ellipse cx="525.7" cy="223.0" rx="4.0" ry="4.0" fill="none" stroke="#fff" stroke-opacity="0.08" stroke-width="0.7"/>
<path d="M402.3,514.9 403.5,514.9 404.6,515.5 405.4,516.4 405.8,517.6 405.6,518.8 405.0,519.9 404.0,520.6 402.8,520.9 401.6,520.7 401.6,520.7 402.5,520.4 403.2,519.9 403.7,519.2 404.1,518.4 404.2,517.6 404.0,516.7 403.6,516.0 403.0,515.3 402.3,514.9Z" fill="#000" fill-opacity="0.45"/><path d="M403.1,521.0 401.9,520.8 400.8,520.3 400.0,519.3 399.7,518.1 399.8,516.9 400.4,515.8 401.4,515.1 402.6,514.8 403.8,514.9 403.8,514.9 402.9,515.2 402.1,515.7 401.5,516.4 401.1,517.2 401.0,518.1 401.2,519.0 401.6,519.9 402.3,520.5 403.1,521.0Z" fill="#fff" fill-opacity="0.29"/><ellipse cx="402.8" cy="517.9" rx="3.3" ry="3.3" fill="none" stroke="#fff" stroke-opacity="0.13" stroke-width="0.7"/><path d="M402.8,522.0 401.3,521.7 400.0,520.9 399.1,519.6 398.7,518.2 398.8,516.6 399.6,515.3 400.7,514.3 402.2,513.8 403.7,513.9 403.7,513.9 402.4,514.1 401.2,514.7 400.3,515.7 399.8,516.9 399.6,518.2 399.9,519.5 400.6,520.6 401.6,521.4 402.8,522.0Z" fill="#000" fill-opacity="0.15"/>
<path d="M413.0,518.1 413.9,518.2 414.8,518.6 415.4,519.4 415.6,520.3 415.5,521.2 415.1,522.0 414.3,522.6 413.4,522.9 412.5,522.8 412.5,522.8 413.2,522.6 413.8,522.2 414.2,521.7 414.5,521.0 414.6,520.3 414.5,519.6 414.1,518.9 413.6,518.4 413.0,518.1Z" fill="#000" fill-opacity="0.41"/><path d="M413.5,523.0 412.5,522.9 411.7,522.4 411.0,521.6 410.8,520.7 410.9,519.7 411.3,518.9 412.1,518.3 413.1,518.0 414.1,518.1 414.1,518.1 413.3,518.3 412.7,518.7 412.2,519.3 411.9,520.0 411.8,520.7 412.0,521.4 412.3,522.1 412.8,522.6 413.5,523.0Z" fill="#fff" fill-opacity="0.26"/><ellipse cx="413.2" cy="520.5" rx="2.6" ry="2.6" fill="none" stroke="#fff" stroke-opacity="0.13" stroke-width="0.7"/><path d="M413.3,523.8 412.1,523.5 411.0,522.9 410.3,521.9 410.0,520.7 410.1,519.5 410.7,518.4 411.6,517.6 412.8,517.2 414.0,517.3 414.0,517.3 413.0,517.5 412.0,518.0 411.3,518.7 410.9,519.7 410.8,520.7 411.0,521.8 411.5,522.7 412.3,523.3 413.3,523.8Z" fill="#000" fill-opacity="0.12"/>
<path d="M383.5,518.9 384.8,518.8 386.0,519.3 387.0,520.2 387.4,521.5 387.3,522.8 386.6,523.9 385.4,524.6 384.1,524.8 382.8,524.4 382.8,524.4 383.5,524.0 384.1,523.5 384.6,522.9 384.8,522.2 384.9,521.5 384.8,520.7 384.5,520.0 384.1,519.4 383.5,518.9Z" fill="#000" fill-opacity="0.56"/><path d="M384.8,524.9 383.5,524.8 382.4,524.2 381.7,523.2 381.3,522.1 381.5,520.8 382.1,519.8 383.0,519.0 384.2,518.7 385.4,518.9 385.4,518.9 384.5,519.1 383.8,519.6 383.1,520.3 382.8,521.1 382.7,522.1 382.8,523.0 383.3,523.8 383.9,524.4 384.8,524.9Z" fill="#fff" fill-opacity="0.34"/><ellipse cx="384.4" cy="521.8" rx="3.3" ry="3.3" fill="none" stroke="#fff" stroke-opacity="0.13" stroke-width="0.7"/><path d="M384.4,525.9 382.9,525.6 381.6,524.8 380.7,523.6 380.3,522.1 380.5,520.6 381.2,519.2 382.4,518.2 383.8,517.7 385.4,517.8 385.4,517.8 384.1,518.0 382.9,518.6 382.0,519.6 381.4,520.8 381.3,522.1 381.6,523.4 382.2,524.5 383.2,525.4 384.4,525.9Z" fill="#000" fill-opacity="0.21"/>
<path d="M431.6,513.6 433.1,513.9 434.4,514.8 435.4,516.0 435.8,517.5 435.6,519.1 434.9,520.5 433.7,521.5 432.2,522.0 430.6,522.0 430.6,522.0 432.0,521.7 433.2,521.1 434.1,520.1 434.7,518.9 434.8,517.5 434.5,516.2 433.8,515.0 432.8,514.2 431.6,513.6Z" fill="#000" fill-opacity="0.31"/><path d="M432.0,522.2 430.3,522.0 428.8,521.2 427.7,519.9 427.2,518.2 427.4,516.5 428.3,515.0 429.6,514.0 431.3,513.5 433.0,513.7 433.0,513.7 431.8,514.1 430.7,514.8 429.8,515.8 429.3,516.9 429.1,518.2 429.4,519.5 430.0,520.7 430.9,521.6 432.0,522.2Z" fill="#fff" fill-opacity="0.21"/><ellipse cx="431.6" cy="517.9" rx="4.6" ry="4.6" fill="none" stroke="#fff" stroke-opacity="0.13" stroke-width="0.8"/><path d="M431.6,523.6 429.5,523.2 427.7,522.1 426.4,520.4 425.9,518.3 426.1,516.2 427.1,514.3 428.7,512.9 430.8,512.2 432.9,512.3 432.9,512.3 431.1,512.6 429.5,513.5 428.2,514.8 427.4,516.5 427.2,518.3 427.6,520.1 428.5,521.7 429.9,522.9 431.6,523.6Z" fill="#000" fill-opacity="0.06"/>
<path d="M428.9,510.2 429.8,510.4 430.6,510.8 431.1,511.6 431.4,512.4 431.3,513.3 430.8,514.1 430.1,514.7 429.3,515.0 428.4,515.0 428.4,515.0 429.1,514.8 429.8,514.5 430.3,513.9 430.6,513.2 430.7,512.4 430.6,511.7 430.2,511.0 429.6,510.5 428.9,510.2Z" fill="#000" fill-opacity="0.32"/><path d="M429.2,515.1 428.2,515.0 427.4,514.5 426.7,513.8 426.5,512.8 426.6,511.9 427.1,511.0 427.8,510.4 428.8,510.1 429.8,510.3 429.8,510.3 429.1,510.5 428.4,510.9 427.9,511.4 427.6,512.1 427.6,512.8 427.7,513.6 428.0,514.2 428.6,514.7 429.2,515.1Z" fill="#fff" fill-opacity="0.21"/><ellipse cx="429.0" cy="512.6" rx="2.6" ry="2.6" fill="none" stroke="#fff" stroke-opacity="0.13" stroke-width="0.7"/><path d="M429.0,515.9 427.8,515.7 426.7,515.0 426.0,514.0 425.7,512.9 425.8,511.6 426.4,510.6 427.3,509.8 428.5,509.4 429.7,509.4 429.7,509.4 428.7,509.6 427.8,510.1 427.0,510.9 426.6,511.8 426.5,512.9 426.7,513.9 427.2,514.8 428.0,515.5 429.0,515.9Z" fill="#000" fill-opacity="0.06"/>
<path d="M450.0,522.8 451.5,523.1 452.8,524.0 453.7,525.2 454.1,526.7 453.9,528.3 453.2,529.6 452.1,530.7 450.6,531.2 449.1,531.2 449.1,531.2 450.4,531.0 451.6,530.3 452.6,529.3 453.2,528.1 453.4,526.7 453.1,525.4 452.3,524.2 451.3,523.3 450.0,522.8Z" fill="#000" fill-opacity="0.27"/><path d="M450.4,531.4 448.7,531.2 447.1,530.4 446.1,529.1 445.6,527.4 445.8,525.7 446.6,524.2 448.0,523.1 449.6,522.7 451.4,522.9 451.4,522.9 450.1,523.3 449.0,523.9 448.1,524.9 447.6,526.1 447.5,527.4 447.7,528.7 448.3,529.8 449.2,530.8 450.4,531.4Z" fill="#fff" fill-opacity="0.18"/><ellipse cx="449.9" cy="527.0" rx="4.6" ry="4.6" fill="none" stroke="#fff" stroke-opacity="0.13" stroke-width="0.8"/>
<path d="M459.1,519.5 460.5,519.8 461.6,520.5 462.4,521.6 462.7,522.8 462.5,524.2 461.9,525.3 460.9,526.2 459.7,526.7 458.3,526.6 458.3,526.6 459.5,526.5 460.6,525.9 461.4,525.1 461.9,524.0 462.0,522.8 461.8,521.7 461.2,520.7 460.2,519.9 459.1,519.5Z" fill="#000" fill-opacity="0.27"/><path d="M459.5,526.8 458.0,526.7 456.7,526.0 455.8,524.8 455.4,523.4 455.5,522.0 456.3,520.7 457.4,519.8 458.9,519.4 460.3,519.6 460.3,519.6 459.2,519.9 458.3,520.5 457.6,521.3 457.1,522.3 457.0,523.4 457.2,524.5 457.7,525.5 458.5,526.3 459.5,526.8Z" fill="#fff" fill-opacity="0.18"/><ellipse cx="459.1" cy="523.1" rx="3.9" ry="3.9" fill="none" stroke="#fff" stroke-opacity="0.13" stroke-width="0.7"/>
<path d="M444.7,529.3 446.0,529.6 447.2,530.3 447.9,531.4 448.3,532.7 448.1,534.0 447.5,535.2 446.5,536.0 445.2,536.5 443.9,536.5 443.9,536.5 445.1,536.3 446.1,535.7 446.9,534.9 447.4,533.8 447.6,532.7 447.3,531.5 446.7,530.5 445.8,529.7 444.7,529.3Z" fill="#000" fill-opacity="0.28"/><path d="M445.1,536.6 443.6,536.5 442.3,535.8 441.4,534.7 441.0,533.2 441.1,531.8 441.8,530.5 443.0,529.6 444.4,529.2 445.9,529.4 445.9,529.4 444.8,529.7 443.9,530.3 443.2,531.1 442.7,532.1 442.6,533.2 442.8,534.3 443.3,535.3 444.1,536.1 445.1,536.6Z" fill="#fff" fill-opacity="0.19"/><ellipse cx="444.7" cy="532.9" rx="3.9" ry="3.9" fill="none" stroke="#fff" stroke-opacity="0.13" stroke-width="0.7"/>
<path d="M472.3,543.2 474.0,543.5 475.5,544.5 476.5,545.9 477.0,547.6 476.8,549.4 476.0,551.0 474.6,552.1 473.0,552.7 471.2,552.7 471.2,552.7 472.8,552.5 474.2,551.8 475.3,550.6 476.0,549.2 476.1,547.6 475.8,546.1 475.0,544.8 473.8,543.7 472.3,543.2Z" fill="#000" fill-opacity="0.27"/><path d="M472.7,552.9 470.8,552.8 469.0,551.8 467.8,550.3 467.2,548.4 467.4,546.5 468.4,544.7 470.0,543.5 471.9,543.0 473.8,543.3 473.8,543.3 472.4,543.7 471.1,544.5 470.2,545.6 469.6,546.9 469.4,548.4 469.7,549.9 470.4,551.2 471.4,552.2 472.7,552.9Z" fill="#fff" fill-opacity="0.18"/><ellipse cx="472.2" cy="548.0" rx="5.2" ry="5.2" fill="none" stroke="#fff" stroke-opacity="0.13" stroke-width="0.9"/>
<path d="M468.3,550.9 469.6,551.2 470.7,551.9 471.5,553.0 471.9,554.3 471.7,555.6 471.1,556.8 470.1,557.7 468.8,558.1 467.5,558.1 467.5,558.1 468.7,557.9 469.7,557.4 470.5,556.5 471.0,555.5 471.2,554.3 470.9,553.1 470.3,552.1 469.4,551.4 468.3,550.9Z" fill="#000" fill-opacity="0.27"/><path d="M468.7,558.3 467.2,558.1 465.9,557.4 464.9,556.3 464.5,554.9 464.7,553.4 465.4,552.1 466.6,551.2 468.0,550.8 469.5,551.0 469.5,551.0 468.4,551.3 467.5,551.9 466.7,552.7 466.3,553.8 466.2,554.9 466.4,556.0 466.9,556.9 467.7,557.7 468.7,558.3Z" fill="#fff" fill-opacity="0.18"/><ellipse cx="468.3" cy="554.5" rx="3.9" ry="3.9" fill="none" stroke="#fff" stroke-opacity="0.13" stroke-width="0.7"/>
<path d="M481.4,549.0 483.0,549.3 484.3,550.2 485.2,551.4 485.6,552.9 485.4,554.5 484.7,555.8 483.5,556.9 482.0,557.4 480.5,557.4 480.5,557.4 481.9,557.2 483.1,556.5 484.1,555.5 484.6,554.3 484.8,552.9 484.5,551.6 483.8,550.4 482.7,549.5 481.4,549.0Z" fill="#000" fill-opacity="0.27"/><path d="M481.8,557.6 480.1,557.4 478.6,556.6 477.5,555.3 477.0,553.6 477.2,551.9 478.1,550.4 479.4,549.3 481.1,548.9 482.8,549.1 482.8,549.1 481.5,549.5 480.4,550.1 479.6,551.1 479.1,552.3 478.9,553.6 479.2,554.9 479.8,556.0 480.7,557.0 481.8,557.6Z" fill="#fff" fill-opacity="0.18"/><ellipse cx="481.4" cy="553.2" rx="4.6" ry="4.6" fill="none" stroke="#fff" stroke-opacity="0.13" stroke-width="0.8"/>
<path d="M412.7,535.9 414.4,536.1 415.9,536.9 417.0,538.2 417.4,539.8 417.2,541.4 416.4,542.9 415.1,543.9 413.5,544.3 411.8,544.1 411.8,544.1 413.0,543.8 414.0,543.1 414.9,542.1 415.4,541.0 415.5,539.8 415.3,538.5 414.7,537.4 413.8,536.5 412.7,535.9Z" fill="#000" fill-opacity="0.44"/><path d="M413.7,544.5 412.0,544.3 410.5,543.5 409.4,542.2 408.9,540.5 409.1,538.8 409.9,537.3 411.3,536.2 413.0,535.8 414.7,536.0 414.7,536.0 413.4,536.4 412.3,537.0 411.5,538.0 410.9,539.2 410.8,540.5 411.0,541.8 411.6,542.9 412.6,543.9 413.7,544.5Z" fill="#fff" fill-opacity="0.28"/><ellipse cx="413.2" cy="540.1" rx="4.6" ry="4.6" fill="none" stroke="#fff" stroke-opacity="0.13" stroke-width="0.8"/><path d="M413.3,545.9 411.2,545.5 409.3,544.3 408.1,542.6 407.5,540.6 407.8,538.4 408.8,536.5 410.4,535.2 412.4,534.5 414.6,534.6 414.6,534.6 412.7,534.9 411.1,535.7 409.9,537.1 409.1,538.7 408.9,540.6 409.3,542.4 410.2,543.9 411.6,545.2 413.3,545.9Z" fill="#000" fill-opacity="0.14"/>
<path d="M414.0,545.7 415.5,545.8 416.8,546.5 417.7,547.6 418.1,549.0 418.0,550.4 417.2,551.7 416.1,552.6 414.7,552.9 413.2,552.7 413.2,552.7 414.2,552.4 415.1,551.8 415.8,551.0 416.2,550.0 416.3,549.0 416.1,547.9 415.6,547.0 414.9,546.2 414.0,545.7Z" fill="#000" fill-opacity="0.46"/><path d="M414.9,553.0 413.5,552.9 412.2,552.2 411.2,551.0 410.8,549.6 411.0,548.2 411.7,546.9 412.9,546.0 414.3,545.6 415.8,545.8 415.8,545.8 414.7,546.1 413.8,546.7 413.0,547.5 412.6,548.5 412.5,549.6 412.7,550.7 413.2,551.7 414.0,552.5 414.9,553.0Z" fill="#fff" fill-opacity="0.29"/><ellipse cx="414.5" cy="549.3" rx="3.9" ry="3.9" fill="none" stroke="#fff" stroke-opacity="0.13" stroke-width="0.7"/><path d="M414.6,554.2 412.8,553.9 411.2,552.9 410.1,551.4 409.6,549.7 409.9,547.8 410.7,546.2 412.1,545.0 413.8,544.4 415.7,544.5 415.7,544.5 414.1,544.8 412.7,545.5 411.6,546.7 411.0,548.1 410.8,549.7 411.1,551.2 411.9,552.6 413.1,553.6 414.6,554.2Z" fill="#000" fill-opacity="0.15"/>
<path d="M451.2,561.5 453.0,561.8 454.5,562.8 455.6,564.2 456.0,566.0 455.8,567.8 455.0,569.4 453.6,570.5 451.9,571.1 450.1,571.0 450.1,571.0 451.6,570.8 453.0,570.0 454.0,568.9 454.7,567.5 454.9,566.0 454.5,564.5 453.8,563.1 452.6,562.1 451.2,561.5Z" fill="#000" fill-opacity="0.33"/><path d="M451.8,571.3 449.8,571.1 448.1,570.2 446.8,568.7 446.3,566.8 446.5,564.8 447.5,563.1 449.0,561.9 450.9,561.4 452.9,561.6 452.9,561.6 451.4,562.0 450.2,562.8 449.2,563.9 448.6,565.3 448.4,566.8 448.7,568.2 449.4,569.5 450.5,570.6 451.8,571.3Z" fill="#fff" fill-opacity="0.22"/><ellipse cx="451.2" cy="566.3" rx="5.2" ry="5.2" fill="none" stroke="#fff" stroke-opacity="0.13" stroke-width="0.9"/><path d="M451.3,572.9 448.9,572.4 446.8,571.1 445.3,569.2 444.7,566.8 445.0,564.4 446.1,562.2 448.0,560.6 450.3,559.8 452.7,560.0 452.7,560.0 450.7,560.3 448.8,561.3 447.4,562.8 446.5,564.7 446.2,566.8 446.7,568.9 447.7,570.7 449.3,572.1 451.3,572.9Z" fill="#000" fill-opacity="0.07"/>
<path d="M460.4,560.7 461.5,560.9 462.5,561.5 463.1,562.4 463.4,563.5 463.3,564.6 462.8,565.6 461.9,566.3 460.9,566.7 459.7,566.7 459.7,566.7 460.7,566.5 461.6,566.0 462.2,565.3 462.7,564.5 462.8,563.5 462.6,562.5 462.1,561.7 461.3,561.1 460.4,560.7Z" fill="#000" fill-opacity="0.28"/><path d="M460.7,566.8 459.5,566.7 458.4,566.1 457.6,565.2 457.3,564.0 457.4,562.8 458.0,561.7 459.0,560.9 460.2,560.6 461.4,560.8 461.4,560.8 460.5,561.0 459.7,561.5 459.1,562.2 458.8,563.1 458.7,564.0 458.8,564.9 459.3,565.7 459.9,566.4 460.7,566.8Z" fill="#fff" fill-opacity="0.19"/><ellipse cx="460.4" cy="563.7" rx="3.3" ry="3.3" fill="none" stroke="#fff" stroke-opacity="0.13" stroke-width="0.7"/>
<path d="M478.8,568.0 480.1,568.2 481.2,568.9 482.0,570.0 482.3,571.3 482.2,572.6 481.6,573.8 480.6,574.7 479.3,575.1 478.0,575.1 478.0,575.1 479.2,574.9 480.2,574.4 481.0,573.6 481.5,572.5 481.7,571.3 481.4,570.2 480.8,569.1 479.9,568.4 478.8,568.0Z" fill="#000" fill-opacity="0.27"/><path d="M479.1,575.3 477.7,575.2 476.4,574.5 475.4,573.3 475.0,571.9 475.2,570.4 475.9,569.1 477.1,568.2 478.5,567.8 480.0,568.0 480.0,568.0 478.9,568.3 477.9,568.9 477.2,569.8 476.8,570.8 476.6,571.9 476.8,573.0 477.4,574.0 478.2,574.8 479.1,575.3Z" fill="#fff" fill-opacity="0.18"/><ellipse cx="478.7" cy="571.6" rx="3.9" ry="3.9" fill="none" stroke="#fff" stroke-opacity="0.13" stroke-width="0.7"/>
<path d="M469.6,574.5 470.9,574.8 472.0,575.5 472.8,576.6 473.2,577.9 473.0,579.2 472.4,580.4 471.4,581.3 470.1,581.7 468.8,581.6 468.8,581.6 469.9,581.5 471.0,580.9 471.8,580.1 472.3,579.0 472.4,577.9 472.1,576.7 471.6,575.7 470.7,574.9 469.6,574.5Z" fill="#000" fill-opacity="0.30"/><path d="M470.0,581.8 468.5,581.7 467.2,581.0 466.3,579.9 465.8,578.4 466.0,577.0 466.7,575.7 467.9,574.8 469.3,574.4 470.8,574.6 470.8,574.6 469.7,574.9 468.8,575.5 468.0,576.3 467.6,577.3 467.5,578.4 467.7,579.5 468.2,580.5 469.0,581.3 470.0,581.8Z" fill="#fff" fill-opacity="0.20"/><ellipse cx="469.6" cy="578.1" rx="3.9" ry="3.9" fill="none" stroke="#fff" stroke-opacity="0.13" stroke-width="0.7"/><path d="M469.6,583.0 467.8,582.7 466.2,581.7 465.1,580.3 464.7,578.5 464.9,576.7 465.7,575.0 467.1,573.9 468.9,573.3 470.7,573.3 470.7,573.3 469.1,573.6 467.8,574.3 466.7,575.5 466.0,576.9 465.8,578.5 466.2,580.0 467.0,581.4 468.1,582.4 469.6,583.0Z" fill="#000" fill-opacity="0.05"/>
<path d="M461.6,580.4 462.7,580.5 463.7,581.1 464.4,582.0 464.7,583.1 464.6,584.3 464.0,585.3 463.1,586.0 462.1,586.4 460.9,586.3 460.9,586.3 461.8,586.1 462.7,585.6 463.3,584.9 463.7,584.1 463.8,583.1 463.6,582.2 463.1,581.4 462.4,580.7 461.6,580.4Z" fill="#000" fill-opacity="0.35"/><path d="M462.0,586.5 460.8,586.3 459.7,585.8 458.9,584.8 458.6,583.6 458.7,582.4 459.3,581.3 460.3,580.6 461.5,580.3 462.7,580.4 462.7,580.4 461.8,580.7 461.0,581.2 460.4,581.9 460.1,582.7 460.0,583.6 460.1,584.5 460.6,585.4 461.2,586.0 462.0,586.5Z" fill="#fff" fill-opacity="0.23"/><ellipse cx="461.7" cy="583.4" rx="3.3" ry="3.3" fill="none" stroke="#fff" stroke-opacity="0.13" stroke-width="0.7"/><path d="M461.7,587.5 460.2,587.2 458.9,586.4 458.0,585.1 457.6,583.7 457.8,582.1 458.5,580.8 459.7,579.8 461.1,579.3 462.7,579.4 462.7,579.4 461.4,579.6 460.2,580.2 459.3,581.2 458.7,582.4 458.6,583.7 458.9,585.0 459.5,586.1 460.5,587.0 461.7,587.5Z" fill="#000" fill-opacity="0.08"/>
<path d="M433.6,576.6 435.3,576.7 436.8,577.4 437.9,578.7 438.4,580.4 438.2,582.1 437.3,583.5 436.0,584.6 434.3,585.0 432.6,584.7 432.6,584.7 433.8,584.3 434.8,583.6 435.6,582.7 436.1,581.6 436.2,580.4 436.0,579.2 435.4,578.1 434.6,577.2 433.6,576.6Z" fill="#000" fill-opacity="0.47"/><path d="M434.7,585.1 433.0,584.9 431.4,584.1 430.3,582.8 429.9,581.1 430.0,579.4 430.9,577.9 432.3,576.8 433.9,576.4 435.6,576.6 435.6,576.6 434.4,577.0 433.3,577.7 432.4,578.6 431.9,579.8 431.8,581.1 432.0,582.4 432.6,583.5 433.5,584.5 434.7,585.1Z" fill="#fff" fill-opacity="0.29"/><ellipse cx="434.2" cy="580.7" rx="4.6" ry="4.6" fill="none" stroke="#fff" stroke-opacity="0.13" stroke-width="0.8"/><path d="M434.2,586.5 432.1,586.1 430.3,585.0 429.0,583.2 428.5,581.2 428.7,579.0 429.7,577.2 431.4,575.8 433.4,575.1 435.5,575.2 435.5,575.2 433.7,575.5 432.1,576.3 430.8,577.7 430.0,579.3 429.8,581.2 430.2,583.0 431.1,584.6 432.5,585.8 434.2,586.5Z" fill="#000" fill-opacity="0.16"/>
<path d="M443.1,571.9 444.5,572.1 445.7,572.7 446.6,573.8 447.0,575.2 446.8,576.6 446.1,577.8 445.0,578.7 443.7,579.1 442.3,578.9 442.3,578.9 443.3,578.7 444.3,578.1 445.0,577.3 445.5,576.3 445.6,575.2 445.4,574.1 444.8,573.2 444.1,572.4 443.1,571.9Z" fill="#000" fill-opacity="0.40"/><path d="M443.8,579.2 442.3,579.1 441.0,578.4 440.1,577.2 439.6,575.8 439.8,574.4 440.5,573.1 441.7,572.2 443.1,571.8 444.6,572.0 444.6,572.0 443.5,572.3 442.6,572.9 441.8,573.7 441.4,574.7 441.3,575.8 441.5,576.9 442.0,577.9 442.8,578.7 443.8,579.2Z" fill="#fff" fill-opacity="0.26"/><ellipse cx="443.4" cy="575.5" rx="3.9" ry="3.9" fill="none" stroke="#fff" stroke-opacity="0.13" stroke-width="0.7"/><path d="M443.4,580.4 441.6,580.1 440.0,579.1 438.9,577.6 438.5,575.9 438.7,574.0 439.5,572.4 440.9,571.2 442.7,570.6 444.5,570.7 444.5,570.7 442.9,571.0 441.6,571.7 440.5,572.9 439.8,574.3 439.6,575.9 440.0,577.4 440.8,578.8 441.9,579.8 443.4,580.4Z" fill="#000" fill-opacity="0.11"/>
<path d="M409.0,524.6 409.9,524.7 410.8,525.1 411.4,525.9 411.7,526.8 411.6,527.8 411.1,528.6 410.3,529.2 409.4,529.4 408.4,529.3 408.4,529.3 409.1,529.1 409.7,528.7 410.1,528.2 410.4,527.5 410.5,526.8 410.4,526.1 410.1,525.5 409.6,525.0 409.0,524.6Z" fill="#000" fill-opacity="0.44"/><path d="M409.6,529.5 408.6,529.4 407.7,529.0 407.1,528.2 406.8,527.2 406.9,526.3 407.4,525.4 408.2,524.8 409.1,524.5 410.1,524.7 410.1,524.7 409.4,524.9 408.8,525.3 408.3,525.8 408.0,526.5 407.9,527.2 408.0,528.0 408.4,528.6 408.9,529.2 409.6,529.5Z" fill="#fff" fill-opacity="0.28"/><ellipse cx="409.3" cy="527.0" rx="2.6" ry="2.6" fill="none" stroke="#fff" stroke-opacity="0.13" stroke-width="0.7"/><path d="M409.3,530.3 408.1,530.1 407.1,529.4 406.4,528.5 406.0,527.3 406.2,526.1 406.8,525.0 407.7,524.2 408.8,523.8 410.1,523.8 410.1,523.8 409.0,524.0 408.1,524.5 407.4,525.3 406.9,526.2 406.8,527.3 407.0,528.3 407.6,529.2 408.4,529.9 409.3,530.3Z" fill="#000" fill-opacity="0.14"/>
<path d="M455.2,539.7 456.3,540.0 457.2,540.6 457.9,541.5 458.2,542.5 458.0,543.6 457.5,544.6 456.7,545.4 455.6,545.7 454.5,545.7 454.5,545.7 455.5,545.6 456.4,545.1 457.0,544.4 457.5,543.5 457.6,542.5 457.4,541.6 456.9,540.7 456.1,540.1 455.2,539.7Z" fill="#000" fill-opacity="0.27"/><path d="M455.5,545.8 454.3,545.7 453.2,545.2 452.4,544.2 452.1,543.0 452.2,541.8 452.8,540.7 453.8,540.0 455.0,539.6 456.2,539.8 456.2,539.8 455.3,540.1 454.5,540.5 453.9,541.2 453.5,542.1 453.4,543.0 453.6,543.9 454.0,544.8 454.7,545.4 455.5,545.8Z" fill="#fff" fill-opacity="0.18"/><ellipse cx="455.2" cy="542.8" rx="3.3" ry="3.3" fill="none" stroke="#fff" stroke-opacity="0.13" stroke-width="0.7"/>
<path d="M464.4,533.2 465.5,533.4 466.4,534.0 467.0,534.9 467.3,536.0 467.2,537.1 466.7,538.1 465.8,538.8 464.8,539.2 463.7,539.1 463.7,539.1 464.7,539.0 465.5,538.6 466.2,537.8 466.6,537.0 466.7,536.0 466.5,535.0 466.0,534.2 465.3,533.5 464.4,533.2Z" fill="#000" fill-opacity="0.27"/><path d="M464.7,539.3 463.4,539.2 462.3,538.6 461.6,537.6 461.2,536.5 461.4,535.2 462.0,534.2 462.9,533.4 464.1,533.1 465.3,533.3 465.3,533.3 464.5,533.5 463.7,534.0 463.1,534.7 462.7,535.5 462.6,536.5 462.8,537.4 463.2,538.2 463.8,538.9 464.7,539.3Z" fill="#fff" fill-opacity="0.18"/><ellipse cx="464.3" cy="536.2" rx="3.3" ry="3.3" fill="none" stroke="#fff" stroke-opacity="0.13" stroke-width="0.7"/>
<path d="M474.9,527.3 476.2,527.6 477.3,528.3 478.1,529.4 478.4,530.7 478.3,532.0 477.6,533.2 476.6,534.1 475.4,534.5 474.1,534.5 474.1,534.5 475.2,534.3 476.3,533.8 477.1,532.9 477.6,531.9 477.7,530.7 477.5,529.5 476.9,528.5 476.0,527.8 474.9,527.3Z" fill="#000" fill-opacity="0.27"/><path d="M475.2,534.7 473.7,534.5 472.4,533.8 471.5,532.7 471.1,531.3 471.3,529.8 472.0,528.5 473.1,527.6 474.6,527.2 476.0,527.4 476.0,527.4 475.0,527.7 474.0,528.3 473.3,529.2 472.8,530.2 472.7,531.3 472.9,532.4 473.4,533.4 474.2,534.2 475.2,534.7Z" fill="#fff" fill-opacity="0.18"/><ellipse cx="474.8" cy="531.0" rx="3.9" ry="3.9" fill="none" stroke="#fff" stroke-opacity="0.13" stroke-width="0.7"/>
<path d="M484.0,537.1 485.1,537.3 486.0,537.9 486.7,538.8 487.0,539.9 486.9,541.0 486.3,542.0 485.5,542.7 484.5,543.1 483.3,543.1 483.3,543.1 484.3,542.9 485.2,542.5 485.9,541.8 486.3,540.9 486.4,539.9 486.2,539.0 485.7,538.1 484.9,537.5 484.0,537.1Z" fill="#000" fill-opacity="0.27"/><path d="M484.3,543.2 483.1,543.1 482.0,542.5 481.2,541.6 480.9,540.4 481.0,539.2 481.6,538.1 482.6,537.3 483.8,537.0 485.0,537.2 485.0,537.2 484.1,537.4 483.3,537.9 482.7,538.6 482.3,539.5 482.2,540.4 482.4,541.3 482.8,542.1 483.5,542.8 484.3,543.2Z" fill="#fff" fill-opacity="0.18"/><ellipse cx="484.0" cy="540.1" rx="3.3" ry="3.3" fill="none" stroke="#fff" stroke-opacity="0.13" stroke-width="0.7"/>
<path d="M453.9,550.8 454.7,551.0 455.5,551.5 456.0,552.2 456.2,553.1 456.1,553.9 455.7,554.7 455.0,555.3 454.2,555.6 453.3,555.6 453.3,555.6 454.1,555.5 454.8,555.1 455.3,554.5 455.6,553.8 455.7,553.1 455.6,552.3 455.2,551.6 454.6,551.1 453.9,550.8Z" fill="#000" fill-opacity="0.28"/><path d="M454.1,555.7 453.1,555.6 452.3,555.2 451.6,554.4 451.4,553.4 451.5,552.5 452.0,551.6 452.7,551.0 453.7,550.7 454.7,550.9 454.7,550.9 453.9,551.1 453.3,551.5 452.8,552.0 452.5,552.7 452.4,553.4 452.6,554.2 452.9,554.8 453.5,555.4 454.1,555.7Z" fill="#fff" fill-opacity="0.19"/><ellipse cx="453.8" cy="553.2" rx="2.6" ry="2.6" fill="none" stroke="#fff" stroke-opacity="0.13" stroke-width="0.7"/>
<path d="M445.6,580.4 446.8,580.5 447.9,581.0 448.6,582.0 449.0,583.1 448.8,584.3 448.3,585.3 447.3,586.1 446.2,586.4 445.0,586.2 445.0,586.2 445.8,586.0 446.6,585.5 447.2,584.8 447.5,584.0 447.6,583.1 447.5,582.2 447.1,581.4 446.4,580.8 445.6,580.4Z" fill="#000" fill-opacity="0.42"/><path d="M446.3,586.5 445.1,586.3 444.0,585.8 443.2,584.8 442.9,583.6 443.0,582.4 443.6,581.3 444.6,580.6 445.8,580.3 447.0,580.4 447.0,580.4 446.1,580.7 445.3,581.2 444.7,581.9 444.3,582.7 444.2,583.6 444.4,584.5 444.8,585.4 445.5,586.0 446.3,586.5Z" fill="#fff" fill-opacity="0.27"/><ellipse cx="446.0" cy="583.4" rx="3.3" ry="3.3" fill="none" stroke="#fff" stroke-opacity="0.13" stroke-width="0.7"/><path d="M446.0,587.5 444.5,587.2 443.2,586.4 442.3,585.1 441.9,583.7 442.1,582.1 442.8,580.8 444.0,579.8 445.4,579.3 446.9,579.4 446.9,579.4 445.6,579.6 444.5,580.2 443.6,581.2 443.0,582.4 442.9,583.7 443.1,585.0 443.8,586.1 444.8,587.0 446.0,587.5Z" fill="#000" fill-opacity="0.13"/>
<path d="M456.1,588.2 457.3,588.3 458.4,588.9 459.1,589.8 459.5,591.0 459.3,592.1 458.7,593.2 457.8,593.9 456.7,594.2 455.5,594.1 455.5,594.1 456.3,593.8 457.1,593.4 457.7,592.7 458.1,591.9 458.2,591.0 458.0,590.1 457.6,589.3 456.9,588.6 456.1,588.2Z" fill="#000" fill-opacity="0.42"/><path d="M456.8,594.3 455.6,594.2 454.5,593.6 453.7,592.7 453.4,591.5 453.5,590.3 454.1,589.2 455.1,588.4 456.3,588.1 457.5,588.3 457.5,588.3 456.6,588.5 455.8,589.0 455.2,589.7 454.8,590.6 454.7,591.5 454.9,592.4 455.3,593.2 456.0,593.9 456.8,594.3Z" fill="#fff" fill-opacity="0.27"/><ellipse cx="456.5" cy="591.2" rx="3.3" ry="3.3" fill="none" stroke="#fff" stroke-opacity="0.13" stroke-width="0.7"/><path d="M456.5,595.3 455.0,595.0 453.7,594.2 452.8,593.0 452.4,591.5 452.6,590.0 453.3,588.7 454.4,587.7 455.9,587.2 457.4,587.2 457.4,587.2 456.1,587.5 455.0,588.1 454.1,589.0 453.5,590.2 453.3,591.5 453.6,592.8 454.3,593.9 455.3,594.8 456.5,595.3Z" fill="#000" fill-opacity="0.12"/>
<path d="M439.9,590.3 441.5,590.3 442.9,590.9 443.9,592.0 444.3,593.5 444.2,595.0 443.4,596.3 442.1,597.2 440.6,597.5 439.2,597.1 439.2,597.1 440.1,596.7 440.9,596.2 441.5,595.4 441.9,594.5 442.0,593.5 441.8,592.5 441.4,591.6 440.8,590.9 439.9,590.3Z" fill="#000" fill-opacity="0.51"/><path d="M441.2,597.6 439.7,597.4 438.4,596.7 437.4,595.6 437.0,594.2 437.2,592.7 437.9,591.4 439.1,590.5 440.5,590.1 442.0,590.3 442.0,590.3 440.9,590.6 440.0,591.2 439.2,592.0 438.8,593.1 438.7,594.2 438.9,595.3 439.4,596.2 440.2,597.0 441.2,597.6Z" fill="#fff" fill-opacity="0.32"/><ellipse cx="440.7" cy="593.8" rx="3.9" ry="3.9" fill="none" stroke="#fff" stroke-opacity="0.13" stroke-width="0.7"/><path d="M440.8,598.8 439.0,598.4 437.4,597.5 436.3,596.0 435.8,594.2 436.1,592.4 436.9,590.8 438.3,589.6 440.0,589.0 441.9,589.1 441.9,589.1 440.3,589.3 438.9,590.1 437.9,591.2 437.2,592.6 437.0,594.2 437.3,595.8 438.1,597.1 439.3,598.1 440.8,598.8Z" fill="#000" fill-opacity="0.18"/>
<path d="M469.4,588.2 470.6,588.4 471.6,589.0 472.3,589.9 472.6,591.0 472.4,592.1 471.9,593.1 471.0,593.9 469.9,594.2 468.7,594.1 468.7,594.1 469.7,593.9 470.5,593.5 471.1,592.8 471.5,591.9 471.6,591.0 471.4,590.1 471.0,589.2 470.3,588.6 469.4,588.2Z" fill="#000" fill-opacity="0.36"/><path d="M469.9,594.3 468.7,594.2 467.6,593.6 466.8,592.7 466.5,591.5 466.6,590.3 467.2,589.2 468.2,588.4 469.4,588.1 470.6,588.3 470.6,588.3 469.7,588.5 468.9,589.0 468.3,589.7 467.9,590.6 467.8,591.5 468.0,592.4 468.4,593.2 469.1,593.9 469.9,594.3Z" fill="#fff" fill-opacity="0.23"/><ellipse cx="469.6" cy="591.2" rx="3.3" ry="3.3" fill="none" stroke="#fff" stroke-opacity="0.13" stroke-width="0.7"/><path d="M469.6,595.3 468.1,595.0 466.8,594.2 465.9,593.0 465.5,591.5 465.7,590.0 466.4,588.7 467.5,587.7 469.0,587.2 470.5,587.2 470.5,587.2 469.2,587.5 468.1,588.1 467.2,589.0 466.6,590.2 466.5,591.5 466.7,592.8 467.4,593.9 468.4,594.8 469.6,595.3Z" fill="#000" fill-opacity="0.09"/>
<path d="M481.4,584.3 482.5,584.5 483.4,585.1 484.1,586.0 484.4,587.1 484.2,588.2 483.7,589.2 482.9,589.9 481.8,590.3 480.7,590.2 480.7,590.2 481.6,590.1 482.5,589.6 483.2,588.9 483.6,588.0 483.7,587.1 483.5,586.1 483.0,585.3 482.3,584.6 481.4,584.3Z" fill="#000" fill-opacity="0.29"/><path d="M481.7,590.4 480.5,590.3 479.4,589.7 478.6,588.7 478.3,587.6 478.4,586.3 479.0,585.3 480.0,584.5 481.2,584.2 482.4,584.4 482.4,584.4 481.5,584.6 480.7,585.1 480.1,585.8 479.7,586.6 479.6,587.6 479.8,588.5 480.2,589.3 480.9,590.0 481.7,590.4Z" fill="#fff" fill-opacity="0.20"/><ellipse cx="481.4" cy="587.3" rx="3.3" ry="3.3" fill="none" stroke="#fff" stroke-opacity="0.13" stroke-width="0.7"/><path d="M481.4,591.4 479.9,591.1 478.6,590.3 477.7,589.1 477.3,587.6 477.4,586.1 478.2,584.7 479.3,583.7 480.8,583.2 482.3,583.3 482.3,583.3 481.0,583.5 479.8,584.1 478.9,585.1 478.4,586.3 478.2,587.6 478.5,588.9 479.2,590.0 480.2,590.9 481.4,591.4Z" fill="#000" fill-opacity="0.04"/>
<path d="M477.2,598.0 478.1,598.1 479.0,598.5 479.6,599.3 479.8,600.2 479.7,601.1 479.3,602.0 478.5,602.5 477.6,602.8 476.7,602.7 476.7,602.7 477.4,602.5 478.0,602.1 478.5,601.6 478.7,600.9 478.8,600.2 478.7,599.5 478.3,598.8 477.8,598.3 477.2,598.0Z" fill="#000" fill-opacity="0.40"/><path d="M477.7,602.9 476.7,602.8 475.8,602.3 475.2,601.6 474.9,600.6 475.1,599.6 475.5,598.8 476.3,598.2 477.3,597.9 478.2,598.0 478.2,598.0 477.5,598.2 476.9,598.6 476.4,599.2 476.1,599.9 476.0,600.6 476.2,601.3 476.5,602.0 477.0,602.5 477.7,602.9Z" fill="#fff" fill-opacity="0.26"/><ellipse cx="477.4" cy="600.4" rx="2.6" ry="2.6" fill="none" stroke="#fff" stroke-opacity="0.13" stroke-width="0.7"/><path d="M477.5,603.7 476.2,603.4 475.2,602.8 474.5,601.8 474.2,600.6 474.3,599.4 474.9,598.3 475.8,597.5 477.0,597.2 478.2,597.2 478.2,597.2 477.2,597.4 476.2,597.9 475.5,598.6 475.1,599.6 474.9,600.6 475.2,601.7 475.7,602.6 476.5,603.3 477.5,603.7Z" fill="#000" fill-opacity="0.11"/>
<path d="M412.9,480.9 415.2,481.3 417.1,482.4 418.5,484.3 419.1,486.5 418.9,488.7 417.8,490.7 416.0,492.2 413.9,492.9 411.6,492.8 411.6,492.8 413.5,492.4 415.1,491.5 416.5,490.1 417.3,488.4 417.5,486.5 417.1,484.6 416.1,482.9 414.7,481.7 412.9,480.9Z" fill="#000" fill-opacity="0.34"/><path d="M413.8,493.1 411.3,492.9 409.2,491.7 407.6,489.8 406.9,487.5 407.2,485.0 408.4,482.9 410.3,481.3 412.7,480.7 415.2,481.0 415.2,481.0 413.4,481.5 411.8,482.5 410.6,483.9 409.8,485.6 409.6,487.5 410.0,489.3 410.8,490.9 412.1,492.2 413.8,493.1Z" fill="#fff" fill-opacity="0.22"/><ellipse cx="413.1" cy="486.9" rx="6.6" ry="6.6" fill="none" stroke="#fff" stroke-opacity="0.12" stroke-width="1.2"/><path d="M413.2,495.1 410.1,494.6 407.6,492.9 405.7,490.5 404.9,487.5 405.3,484.5 406.7,481.8 409.0,479.8 411.9,478.8 415.0,479.0 415.0,479.0 412.4,479.4 410.1,480.6 408.3,482.5 407.2,484.9 406.9,487.5 407.4,490.1 408.8,492.4 410.7,494.1 413.2,495.1Z" fill="#000" fill-opacity="0.08"/>
<path d="M405.5,498.4 407.2,498.6 408.6,499.4 409.6,500.7 410.1,502.3 409.9,503.9 409.1,505.4 407.8,506.4 406.2,506.8 404.6,506.6 404.6,506.6 405.8,506.3 406.9,505.7 407.7,504.7 408.3,503.6 408.4,502.3 408.2,501.0 407.6,499.9 406.6,499.0 405.5,498.4Z" fill="#000" fill-opacity="0.39"/><path d="M406.4,507.0 404.7,506.8 403.1,506.0 402.0,504.7 401.6,503.0 401.8,501.3 402.6,499.8 404.0,498.7 405.6,498.3 407.3,498.5 407.3,498.5 406.1,498.9 405.0,499.6 404.1,500.5 403.6,501.7 403.5,503.0 403.7,504.3 404.3,505.4 405.2,506.4 406.4,507.0Z" fill="#fff" fill-opacity="0.25"/><ellipse cx="405.9" cy="502.6" rx="4.6" ry="4.6" fill="none" stroke="#fff" stroke-opacity="0.12" stroke-width="0.8"/><path d="M405.9,508.4 403.8,508.0 402.0,506.9 400.7,505.1 400.2,503.1 400.4,500.9 401.4,499.1 403.1,497.7 405.1,497.0 407.2,497.1 407.2,497.1 405.4,497.4 403.8,498.2 402.5,499.6 401.7,501.2 401.5,503.1 401.9,504.9 402.9,506.5 404.2,507.7 405.9,508.4Z" fill="#000" fill-opacity="0.12"/>
<path d="M416.9,499.0 418.2,499.2 419.4,499.9 420.3,501.0 420.6,502.4 420.5,503.7 419.8,504.9 418.8,505.8 417.4,506.2 416.1,506.1 416.1,506.1 417.2,505.9 418.2,505.3 418.9,504.5 419.4,503.5 419.5,502.4 419.3,501.2 418.7,500.3 417.9,499.5 416.9,499.0Z" fill="#000" fill-opacity="0.34"/><path d="M417.4,506.4 416.0,506.2 414.7,505.5 413.7,504.4 413.3,503.0 413.5,501.5 414.2,500.2 415.4,499.3 416.8,498.9 418.3,499.1 418.3,499.1 417.2,499.4 416.2,500.0 415.5,500.8 415.1,501.9 414.9,503.0 415.1,504.1 415.7,505.0 416.5,505.8 417.4,506.4Z" fill="#fff" fill-opacity="0.22"/><ellipse cx="417.0" cy="502.6" rx="3.9" ry="3.9" fill="none" stroke="#fff" stroke-opacity="0.12" stroke-width="0.7"/><path d="M417.1,507.6 415.3,507.2 413.7,506.3 412.6,504.8 412.1,503.0 412.3,501.2 413.2,499.6 414.6,498.4 416.3,497.8 418.2,497.9 418.2,497.9 416.6,498.1 415.2,498.9 414.1,500.0 413.5,501.4 413.3,503.0 413.6,504.6 414.4,505.9 415.6,506.9 417.1,507.6Z" fill="#000" fill-opacity="0.08"/>
<path d="M430.8,507.4 431.6,507.6 432.4,508.1 433.0,508.8 433.2,509.7 433.1,510.6 432.7,511.4 432.0,511.9 431.1,512.2 430.2,512.2 430.2,512.2 431.0,512.1 431.7,511.7 432.2,511.1 432.5,510.4 432.6,509.7 432.4,508.9 432.1,508.2 431.5,507.7 430.8,507.4Z" fill="#000" fill-opacity="0.29"/><path d="M431.1,512.3 430.1,512.2 429.2,511.8 428.6,511.0 428.3,510.1 428.4,509.1 428.9,508.2 429.7,507.6 430.6,507.4 431.6,507.5 431.6,507.5 430.9,507.7 430.3,508.1 429.8,508.6 429.5,509.3 429.4,510.1 429.5,510.8 429.9,511.4 430.4,512.0 431.1,512.3Z" fill="#fff" fill-opacity="0.19"/><ellipse cx="430.8" cy="509.8" rx="2.6" ry="2.6" fill="none" stroke="#fff" stroke-opacity="0.12" stroke-width="0.7"/><path d="M430.8,513.1 429.6,512.9 428.6,512.3 427.8,511.3 427.5,510.1 427.7,508.9 428.2,507.8 429.2,507.0 430.3,506.6 431.6,506.7 431.6,506.7 430.5,506.8 429.6,507.3 428.9,508.1 428.4,509.1 428.3,510.1 428.5,511.1 429.1,512.0 429.8,512.7 430.8,513.1Z" fill="#000" fill-opacity="0.05"/>
<path d="M426.1,512.0 427.0,512.2 427.8,512.6 428.4,513.4 428.6,514.2 428.5,515.2 428.1,516.0 427.4,516.5 426.5,516.8 425.6,516.8 425.6,516.8 426.3,516.6 427.0,516.3 427.5,515.7 427.8,515.0 427.9,514.2 427.8,513.5 427.4,512.8 426.8,512.3 426.1,512.0Z" fill="#000" fill-opacity="0.31"/><path d="M426.5,516.9 425.5,516.8 424.6,516.4 424.0,515.6 423.7,514.6 423.8,513.7 424.3,512.8 425.1,512.2 426.0,511.9 427.0,512.1 427.0,512.1 426.3,512.3 425.7,512.7 425.2,513.2 424.9,513.9 424.8,514.6 424.9,515.4 425.3,516.0 425.8,516.6 426.5,516.9Z" fill="#fff" fill-opacity="0.21"/><ellipse cx="426.2" cy="514.4" rx="2.6" ry="2.6" fill="none" stroke="#fff" stroke-opacity="0.12" stroke-width="0.7"/><path d="M426.2,517.7 425.0,517.5 424.0,516.8 423.3,515.9 422.9,514.7 423.1,513.5 423.6,512.4 424.6,511.6 425.7,511.2 427.0,511.2 427.0,511.2 425.9,511.4 425.0,511.9 424.3,512.7 423.8,513.6 423.7,514.7 423.9,515.7 424.5,516.6 425.3,517.3 426.2,517.7Z" fill="#000" fill-opacity="0.07"/>
<path d="M452.4,511.4 453.3,511.5 454.1,512.0 454.6,512.7 454.8,513.6 454.7,514.5 454.3,515.3 453.6,515.9 452.8,516.2 451.9,516.1 451.9,516.1 452.7,516.0 453.4,515.7 453.9,515.1 454.2,514.4 454.3,513.6 454.2,512.8 453.8,512.2 453.2,511.7 452.4,511.4Z" fill="#000" fill-opacity="0.25"/><path d="M452.7,516.3 451.7,516.2 450.8,515.7 450.2,514.9 449.9,514.0 450.0,513.0 450.5,512.2 451.3,511.5 452.2,511.3 453.2,511.4 453.2,511.4 452.5,511.6 451.9,512.0 451.4,512.6 451.1,513.3 451.0,514.0 451.1,514.7 451.5,515.4 452.0,515.9 452.7,516.3Z" fill="#fff" fill-opacity="0.17"/><ellipse cx="452.4" cy="513.8" rx="2.6" ry="2.6" fill="none" stroke="#fff" stroke-opacity="0.12" stroke-width="0.7"/>
<path d="M459.0,518.7 460.3,518.9 461.4,519.7 462.2,520.7 462.6,522.0 462.4,523.4 461.8,524.5 460.8,525.4 459.5,525.9 458.2,525.8 458.2,525.8 459.4,525.7 460.4,525.1 461.2,524.3 461.7,523.2 461.9,522.0 461.6,520.9 461.0,519.9 460.1,519.1 459.0,518.7Z" fill="#000" fill-opacity="0.25"/><path d="M459.4,526.0 457.9,525.9 456.6,525.2 455.6,524.0 455.2,522.6 455.4,521.1 456.1,519.9 457.3,518.9 458.7,518.6 460.2,518.8 460.2,518.8 459.1,519.1 458.2,519.6 457.4,520.5 457.0,521.5 456.9,522.6 457.1,523.7 457.6,524.7 458.4,525.5 459.4,526.0Z" fill="#fff" fill-opacity="0.17"/><ellipse cx="459.0" cy="522.3" rx="3.9" ry="3.9" fill="none" stroke="#fff" stroke-opacity="0.12" stroke-width="0.7"/>
<path d="M450.5,523.9 451.6,524.1 452.5,524.7 453.2,525.6 453.4,526.7 453.3,527.8 452.8,528.7 452.0,529.5 450.9,529.9 449.8,529.8 449.8,529.8 450.8,529.7 451.6,529.2 452.3,528.5 452.7,527.6 452.9,526.7 452.6,525.7 452.1,524.9 451.4,524.2 450.5,523.9Z" fill="#000" fill-opacity="0.25"/><path d="M450.8,530.0 449.5,529.9 448.5,529.3 447.7,528.3 447.3,527.1 447.5,525.9 448.1,524.8 449.1,524.1 450.2,523.8 451.5,523.9 451.5,523.9 450.6,524.2 449.8,524.7 449.2,525.4 448.8,526.2 448.7,527.1 448.9,528.1 449.3,528.9 450.0,529.5 450.8,530.0Z" fill="#fff" fill-opacity="0.17"/><ellipse cx="450.4" cy="526.9" rx="3.3" ry="3.3" fill="none" stroke="#fff" stroke-opacity="0.12" stroke-width="0.7"/>
<path d="M443.3,520.7 444.8,521.0 446.1,521.9 447.0,523.1 447.4,524.6 447.3,526.2 446.5,527.5 445.4,528.5 443.9,529.1 442.4,529.0 442.4,529.0 443.7,528.8 445.0,528.2 445.9,527.2 446.5,526.0 446.7,524.6 446.4,523.3 445.7,522.1 444.6,521.2 443.3,520.7Z" fill="#000" fill-opacity="0.26"/><path d="M443.7,529.2 442.0,529.1 440.5,528.3 439.4,526.9 438.9,525.3 439.1,523.6 439.9,522.1 441.3,521.0 443.0,520.6 444.7,520.8 444.7,520.8 443.4,521.1 442.3,521.8 441.5,522.8 440.9,524.0 440.8,525.3 441.0,526.6 441.6,527.7 442.6,528.6 443.7,529.2Z" fill="#fff" fill-opacity="0.17"/><ellipse cx="443.2" cy="524.9" rx="4.6" ry="4.6" fill="none" stroke="#fff" stroke-opacity="0.12" stroke-width="0.8"/>
<path d="M444.6,531.1 445.7,531.3 446.6,531.9 447.3,532.8 447.5,533.9 447.4,535.0 446.9,536.0 446.1,536.7 445.0,537.1 443.9,537.0 443.9,537.0 444.9,536.9 445.7,536.4 446.4,535.7 446.8,534.8 446.9,533.9 446.7,532.9 446.2,532.1 445.5,531.4 444.6,531.1Z" fill="#000" fill-opacity="0.27"/><path d="M444.9,537.2 443.7,537.1 442.6,536.5 441.8,535.5 441.4,534.3 441.6,533.1 442.2,532.1 443.2,531.3 444.3,531.0 445.6,531.1 445.6,531.1 444.7,531.4 443.9,531.9 443.3,532.6 442.9,533.4 442.8,534.4 443.0,535.3 443.4,536.1 444.1,536.7 444.9,537.2Z" fill="#fff" fill-opacity="0.18"/><ellipse cx="444.5" cy="534.1" rx="3.3" ry="3.3" fill="none" stroke="#fff" stroke-opacity="0.12" stroke-width="0.7"/>
<path d="M456.4,525.1 457.2,525.3 458.0,525.8 458.5,526.5 458.7,527.4 458.6,528.2 458.2,529.0 457.5,529.6 456.7,529.9 455.8,529.9 455.8,529.9 456.6,529.8 457.3,529.4 457.8,528.8 458.2,528.1 458.2,527.4 458.1,526.6 457.7,525.9 457.1,525.4 456.4,525.1Z" fill="#000" fill-opacity="0.25"/><path d="M456.6,530.0 455.6,529.9 454.8,529.5 454.1,528.7 453.9,527.7 454.0,526.8 454.4,525.9 455.2,525.3 456.2,525.0 457.2,525.2 457.2,525.2 456.4,525.4 455.8,525.8 455.3,526.3 455.0,527.0 454.9,527.7 455.1,528.5 455.4,529.1 455.9,529.7 456.6,530.0Z" fill="#fff" fill-opacity="0.17"/><ellipse cx="456.3" cy="527.5" rx="2.6" ry="2.6" fill="none" stroke="#fff" stroke-opacity="0.12" stroke-width="0.7"/>
<path d="M432.7,529.8 433.8,529.9 434.8,530.5 435.5,531.4 435.8,532.5 435.6,533.7 435.1,534.7 434.2,535.4 433.1,535.8 432.0,535.7 432.0,535.7 432.9,535.5 433.8,535.1 434.4,534.4 434.8,533.5 434.9,532.5 434.7,531.6 434.3,530.8 433.5,530.1 432.7,529.8Z" fill="#000" fill-opacity="0.31"/><path d="M433.1,535.9 431.9,535.8 430.8,535.2 430.0,534.2 429.7,533.0 429.8,531.8 430.4,530.7 431.4,530.0 432.6,529.7 433.8,529.8 433.8,529.8 432.9,530.1 432.1,530.6 431.5,531.3 431.1,532.1 431.0,533.0 431.2,534.0 431.6,534.8 432.3,535.4 433.1,535.9Z" fill="#fff" fill-opacity="0.21"/><ellipse cx="432.8" cy="532.8" rx="3.3" ry="3.3" fill="none" stroke="#fff" stroke-opacity="0.12" stroke-width="0.7"/><path d="M432.8,536.9 431.3,536.6 430.0,535.8 429.1,534.6 428.7,533.1 428.8,531.6 429.6,530.2 430.7,529.2 432.2,528.7 433.7,528.8 433.7,528.8 432.4,529.0 431.2,529.6 430.3,530.6 429.8,531.8 429.6,533.1 429.9,534.4 430.6,535.5 431.6,536.4 432.8,536.9Z" fill="#000" fill-opacity="0.07"/>
<path d="M489.2,478.8 490.7,479.1 492.0,479.9 492.9,481.2 493.3,482.7 493.1,484.2 492.4,485.6 491.2,486.6 489.8,487.2 488.2,487.1 488.2,487.1 489.6,486.9 490.8,486.3 491.8,485.3 492.4,484.1 492.5,482.7 492.2,481.3 491.5,480.2 490.5,479.3 489.2,478.8Z" fill="#000" fill-opacity="0.25"/><path d="M489.6,487.3 487.8,487.2 486.3,486.4 485.2,485.0 484.7,483.4 484.9,481.7 485.8,480.1 487.1,479.1 488.8,478.6 490.5,478.9 490.5,478.9 489.3,479.2 488.2,479.9 487.3,480.9 486.8,482.1 486.6,483.4 486.9,484.6 487.5,485.8 488.4,486.7 489.6,487.3Z" fill="#fff" fill-opacity="0.17"/><ellipse cx="489.1" cy="483.0" rx="4.6" ry="4.6" fill="none" stroke="#fff" stroke-opacity="0.12" stroke-width="0.8"/>
<path d="M491.7,468.2 492.8,468.4 493.8,469.0 494.4,469.9 494.7,471.0 494.6,472.1 494.1,473.1 493.2,473.8 492.2,474.2 491.1,474.1 491.1,474.1 492.0,474.0 492.9,473.6 493.6,472.8 494.0,472.0 494.1,471.0 493.9,470.0 493.4,469.2 492.7,468.5 491.7,468.2Z" fill="#000" fill-opacity="0.25"/><path d="M492.0,474.3 490.8,474.2 489.7,473.6 488.9,472.6 488.6,471.5 488.7,470.2 489.3,469.2 490.3,468.4 491.5,468.1 492.7,468.3 492.7,468.3 491.8,468.5 491.0,469.0 490.4,469.7 490.1,470.5 490.0,471.5 490.1,472.4 490.6,473.2 491.2,473.9 492.0,474.3Z" fill="#fff" fill-opacity="0.17"/><ellipse cx="491.7" cy="471.2" rx="3.3" ry="3.3" fill="none" stroke="#fff" stroke-opacity="0.12" stroke-width="0.7"/>
<path d="M512.7,455.1 513.8,455.3 514.7,455.9 515.4,456.8 515.7,457.9 515.5,459.0 515.0,460.0 514.2,460.7 513.1,461.1 512.0,461.0 512.0,461.0 513.0,460.9 513.9,460.5 514.6,459.7 515.0,458.9 515.1,457.9 514.9,456.9 514.4,456.1 513.6,455.4 512.7,455.1Z" fill="#000" fill-opacity="0.25"/><path d="M513.0,461.2 511.8,461.1 510.7,460.5 509.9,459.5 509.6,458.4 509.7,457.1 510.3,456.1 511.3,455.3 512.5,455.0 513.7,455.2 513.7,455.2 512.8,455.4 512.0,455.9 511.4,456.6 511.0,457.4 510.9,458.4 511.1,459.3 511.5,460.1 512.2,460.8 513.0,461.2Z" fill="#fff" fill-opacity="0.17"/><ellipse cx="512.7" cy="458.1" rx="3.3" ry="3.3" fill="none" stroke="#fff" stroke-opacity="0.12" stroke-width="0.7"/>
<path d="M483.9,448.5 484.7,448.7 485.5,449.1 486.0,449.9 486.2,450.7 486.1,451.6 485.7,452.4 485.1,453.0 484.2,453.3 483.3,453.2 483.3,453.2 484.1,453.1 484.8,452.8 485.3,452.2 485.7,451.5 485.8,450.7 485.6,450.0 485.2,449.3 484.6,448.8 483.9,448.5Z" fill="#000" fill-opacity="0.25"/><path d="M484.1,453.4 483.1,453.3 482.3,452.8 481.6,452.1 481.4,451.1 481.5,450.1 482.0,449.3 482.7,448.7 483.7,448.4 484.7,448.5 484.7,448.5 483.9,448.7 483.3,449.1 482.8,449.7 482.5,450.4 482.4,451.1 482.6,451.8 482.9,452.5 483.5,453.0 484.1,453.4Z" fill="#fff" fill-opacity="0.17"/><ellipse cx="483.8" cy="450.9" rx="2.6" ry="2.6" fill="none" stroke="#fff" stroke-opacity="0.12" stroke-width="0.7"/>
<path d="M471.4,462.3 472.5,462.5 473.5,463.1 474.1,464.0 474.4,465.1 474.3,466.2 473.8,467.2 472.9,467.9 471.9,468.3 470.8,468.3 470.8,468.3 471.7,468.1 472.6,467.7 473.3,466.9 473.7,466.1 473.8,465.1 473.6,464.1 473.1,463.3 472.4,462.7 471.4,462.3Z" fill="#000" fill-opacity="0.25"/><path d="M471.7,468.4 470.5,468.3 469.4,467.7 468.6,466.8 468.3,465.6 468.4,464.3 469.0,463.3 470.0,462.5 471.2,462.2 472.4,462.4 472.4,462.4 471.5,462.6 470.7,463.1 470.1,463.8 469.8,464.7 469.7,465.6 469.8,466.5 470.3,467.3 470.9,468.0 471.7,468.4Z" fill="#fff" fill-opacity="0.17"/><ellipse cx="471.4" cy="465.3" rx="3.3" ry="3.3" fill="none" stroke="#fff" stroke-opacity="0.12" stroke-width="0.7"/>
<path d="M466.8,448.4 467.5,448.6 468.0,448.9 468.4,449.5 468.6,450.1 468.5,450.8 468.2,451.4 467.7,451.8 467.1,452.0 466.4,452.0 466.4,452.0 467.0,451.9 467.5,451.6 467.9,451.2 468.2,450.7 468.2,450.1 468.1,449.5 467.8,449.0 467.4,448.7 466.8,448.4Z" fill="#000" fill-opacity="0.25"/><path d="M467.1,452.1 466.3,452.0 465.6,451.7 465.2,451.1 465.0,450.4 465.0,449.7 465.4,449.0 466.0,448.6 466.7,448.4 467.5,448.5 467.5,448.5 466.9,448.6 466.5,448.9 466.1,449.4 465.9,449.9 465.8,450.4 465.9,450.9 466.2,451.4 466.6,451.8 467.1,452.1Z" fill="#fff" fill-opacity="0.17"/><ellipse cx="466.8" cy="450.2" rx="2.0" ry="2.0" fill="none" stroke="#fff" stroke-opacity="0.12" stroke-width="0.7"/>
<path d="M499.7,524.7 501.7,525.1 503.3,526.2 504.5,527.8 505.0,529.8 504.7,531.7 503.8,533.5 502.3,534.8 500.5,535.5 498.5,535.5 498.5,535.5 500.3,535.2 501.8,534.4 503.1,533.1 503.9,531.5 504.1,529.8 503.7,528.0 502.7,526.5 501.4,525.4 499.7,524.7Z" fill="#000" fill-opacity="0.25"/><path d="M500.2,535.7 498.0,535.5 496.0,534.5 494.6,532.8 494.0,530.6 494.2,528.4 495.3,526.5 497.1,525.1 499.2,524.6 501.4,524.9 501.4,524.9 499.8,525.3 498.4,526.2 497.3,527.4 496.6,529.0 496.4,530.6 496.7,532.3 497.5,533.8 498.7,534.9 500.2,535.7Z" fill="#fff" fill-opacity="0.17"/><ellipse cx="499.6" cy="530.2" rx="5.9" ry="5.9" fill="none" stroke="#fff" stroke-opacity="0.12" stroke-width="1.1"/>
<path d="M507.5,520.0 508.8,520.3 509.9,521.0 510.7,522.1 511.0,523.3 510.9,524.7 510.3,525.8 509.3,526.7 508.0,527.2 506.7,527.1 506.7,527.1 507.8,527.0 508.9,526.4 509.7,525.6 510.2,524.5 510.4,523.3 510.1,522.2 509.5,521.2 508.6,520.4 507.5,520.0Z" fill="#000" fill-opacity="0.25"/><path d="M507.8,527.3 506.4,527.2 505.1,526.5 504.1,525.3 503.7,523.9 503.9,522.5 504.6,521.2 505.8,520.3 507.2,519.9 508.7,520.1 508.7,520.1 507.6,520.4 506.6,521.0 505.9,521.8 505.5,522.8 505.3,523.9 505.5,525.0 506.1,526.0 506.8,526.8 507.8,527.3Z" fill="#fff" fill-opacity="0.17"/><ellipse cx="507.4" cy="523.6" rx="3.9" ry="3.9" fill="none" stroke="#fff" stroke-opacity="0.12" stroke-width="0.7"/>
<path d="M491.8,533.1 493.1,533.4 494.2,534.1 495.0,535.2 495.3,536.4 495.2,537.8 494.5,538.9 493.5,539.8 492.3,540.3 491.0,540.2 491.0,540.2 492.1,540.1 493.2,539.5 494.0,538.7 494.5,537.6 494.6,536.4 494.4,535.3 493.8,534.3 492.9,533.5 491.8,533.1Z" fill="#000" fill-opacity="0.25"/><path d="M492.1,540.4 490.6,540.3 489.3,539.6 488.4,538.4 488.0,537.0 488.2,535.6 488.9,534.3 490.0,533.4 491.5,533.0 492.9,533.2 492.9,533.2 491.9,533.5 490.9,534.1 490.2,534.9 489.7,535.9 489.6,537.0 489.8,538.1 490.3,539.1 491.1,539.9 492.1,540.4Z" fill="#fff" fill-opacity="0.17"/><ellipse cx="491.7" cy="536.7" rx="3.9" ry="3.9" fill="none" stroke="#fff" stroke-opacity="0.12" stroke-width="0.7"/>
<path d="M480.0,529.8 481.0,530.0 482.0,530.6 482.6,531.5 482.9,532.6 482.8,533.7 482.3,534.6 481.4,535.4 480.4,535.7 479.3,535.7 479.3,535.7 480.2,535.6 481.1,535.1 481.8,534.4 482.2,533.5 482.3,532.6 482.1,531.6 481.6,530.8 480.9,530.1 480.0,529.8Z" fill="#000" fill-opacity="0.25"/><path d="M480.3,535.9 479.0,535.8 477.9,535.2 477.2,534.2 476.8,533.0 477.0,531.8 477.6,530.7 478.5,530.0 479.7,529.7 480.9,529.8 480.9,529.8 480.0,530.1 479.3,530.6 478.6,531.3 478.3,532.1 478.2,533.0 478.3,534.0 478.8,534.8 479.4,535.4 480.3,535.9Z" fill="#fff" fill-opacity="0.17"/><ellipse cx="479.9" cy="532.8" rx="3.3" ry="3.3" fill="none" stroke="#fff" stroke-opacity="0.12" stroke-width="0.7"/>
<path d="M473.4,515.3 474.5,515.6 475.4,516.2 476.1,517.1 476.4,518.1 476.2,519.2 475.7,520.2 474.9,521.0 473.8,521.3 472.7,521.3 472.7,521.3 473.7,521.2 474.6,520.7 475.3,520.0 475.7,519.1 475.8,518.1 475.6,517.2 475.1,516.3 474.3,515.7 473.4,515.3Z" fill="#000" fill-opacity="0.25"/><path d="M473.7,521.5 472.5,521.3 471.4,520.8 470.6,519.8 470.3,518.6 470.4,517.4 471.0,516.3 472.0,515.6 473.2,515.3 474.4,515.4 474.4,515.4 473.5,515.7 472.7,516.2 472.1,516.9 471.7,517.7 471.6,518.6 471.8,519.5 472.2,520.4 472.9,521.0 473.7,521.5Z" fill="#fff" fill-opacity="0.17"/><ellipse cx="473.4" cy="518.4" rx="3.3" ry="3.3" fill="none" stroke="#fff" stroke-opacity="0.12" stroke-width="0.7"/>
<path d="M512.7,499.0 514.0,499.3 515.2,500.0 515.9,501.1 516.3,502.4 516.1,503.7 515.5,504.9 514.5,505.8 513.2,506.2 511.9,506.2 511.9,506.2 513.1,506.0 514.1,505.5 515.0,504.6 515.5,503.6 515.6,502.4 515.3,501.2 514.7,500.2 513.8,499.5 512.7,499.0Z" fill="#000" fill-opacity="0.25"/><path d="M513.1,506.4 511.6,506.2 510.3,505.5 509.4,504.4 508.9,503.0 509.1,501.5 509.8,500.2 511.0,499.3 512.4,498.9 513.9,499.1 513.9,499.1 512.8,499.4 511.9,500.0 511.1,500.8 510.7,501.9 510.6,503.0 510.8,504.1 511.3,505.0 512.1,505.8 513.1,506.4Z" fill="#fff" fill-opacity="0.17"/><ellipse cx="512.7" cy="502.6" rx="3.9" ry="3.9" fill="none" stroke="#fff" stroke-opacity="0.12" stroke-width="0.7"/>
<path d="M432.1,496.6 432.6,496.7 433.1,496.9 433.5,497.4 433.6,497.9 433.5,498.5 433.3,499.0 432.8,499.4 432.3,499.5 431.7,499.5 431.7,499.5 432.2,499.4 432.7,499.2 433.0,498.9 433.2,498.4 433.2,497.9 433.1,497.5 432.9,497.1 432.5,496.7 432.1,496.6Z" fill="#000" fill-opacity="0.27"/><path d="M432.4,499.6 431.7,499.6 431.2,499.3 430.7,498.8 430.5,498.2 430.6,497.6 430.9,497.0 431.5,496.6 432.1,496.5 432.7,496.6 432.7,496.6 432.3,496.8 431.9,497.0 431.7,497.4 431.5,497.8 431.4,498.2 431.5,498.6 431.7,499.0 432.0,499.4 432.4,499.6Z" fill="#fff" fill-opacity="0.18"/><ellipse cx="432.1" cy="498.1" rx="1.6" ry="1.6" fill="none" stroke="#fff" stroke-opacity="0.12" stroke-width="0.7"/>
<path d="M401.6,505.5 402.6,505.6 403.5,506.0 404.1,506.7 404.4,507.7 404.3,508.6 403.8,509.5 403.0,510.1 402.0,510.3 401.1,510.1 401.1,510.1 401.7,509.9 402.3,509.5 402.8,509.0 403.0,508.4 403.1,507.7 403.0,507.0 402.7,506.4 402.2,505.8 401.6,505.5Z" fill="#000" fill-opacity="0.42"/><path d="M402.2,510.4 401.3,510.3 400.4,509.8 399.8,509.0 399.5,508.1 399.6,507.1 400.1,506.3 400.9,505.7 401.8,505.4 402.8,505.5 402.8,505.5 402.1,505.7 401.4,506.1 401.0,506.7 400.7,507.4 400.6,508.1 400.7,508.8 401.1,509.5 401.6,510.0 402.2,510.4Z" fill="#fff" fill-opacity="0.26"/><ellipse cx="402.0" cy="507.9" rx="2.6" ry="2.6" fill="none" stroke="#fff" stroke-opacity="0.12" stroke-width="0.7"/><path d="M402.0,511.2 400.8,510.9 399.7,510.3 399.0,509.3 398.7,508.1 398.8,506.9 399.4,505.8 400.3,505.0 401.5,504.6 402.7,504.7 402.7,504.7 401.7,504.9 400.8,505.4 400.0,506.1 399.6,507.1 399.5,508.1 399.7,509.2 400.2,510.1 401.0,510.8 402.0,511.2Z" fill="#000" fill-opacity="0.13"/>
<path d="M403.4,514.8 404.9,514.9 406.2,515.5 407.1,516.6 407.5,518.0 407.4,519.5 406.6,520.7 405.5,521.6 404.1,522.0 402.6,521.7 402.6,521.7 403.7,521.4 404.5,520.9 405.2,520.1 405.6,519.1 405.8,518.0 405.6,517.0 405.1,516.1 404.4,515.3 403.4,514.8Z" fill="#000" fill-opacity="0.42"/><path d="M404.3,522.1 402.9,521.9 401.6,521.2 400.6,520.1 400.2,518.7 400.4,517.2 401.1,515.9 402.3,515.0 403.7,514.6 405.2,514.8 405.2,514.8 404.1,515.1 403.1,515.7 402.4,516.6 402.0,517.6 401.8,518.7 402.0,519.8 402.6,520.8 403.4,521.6 404.3,522.1Z" fill="#fff" fill-opacity="0.27"/><ellipse cx="403.9" cy="518.4" rx="3.9" ry="3.9" fill="none" stroke="#fff" stroke-opacity="0.12" stroke-width="0.7"/><path d="M404.0,523.3 402.2,522.9 400.6,522.0 399.5,520.5 399.0,518.7 399.2,516.9 400.1,515.3 401.5,514.1 403.2,513.5 405.1,513.6 405.1,513.6 403.5,513.8 402.1,514.6 401.0,515.7 400.4,517.2 400.2,518.7 400.5,520.3 401.3,521.6 402.5,522.7 404.0,523.3Z" fill="#000" fill-opacity="0.13"/>
<path d="M400.7,527.2 402.0,527.2 403.1,527.7 403.9,528.7 404.3,529.9 404.2,531.1 403.5,532.2 402.5,532.9 401.3,533.2 400.1,532.9 400.1,532.9 400.9,532.6 401.6,532.1 402.1,531.5 402.4,530.7 402.5,529.9 402.4,529.0 402.0,528.3 401.4,527.6 400.7,527.2Z" fill="#000" fill-opacity="0.45"/><path d="M401.6,533.2 400.4,533.1 399.3,532.6 398.6,531.6 398.2,530.4 398.3,529.2 399.0,528.1 399.9,527.4 401.1,527.0 402.3,527.2 402.3,527.2 401.4,527.5 400.7,527.9 400.0,528.6 399.7,529.5 399.6,530.4 399.7,531.3 400.2,532.2 400.8,532.8 401.6,533.2Z" fill="#fff" fill-opacity="0.28"/><ellipse cx="401.3" cy="530.2" rx="3.3" ry="3.3" fill="none" stroke="#fff" stroke-opacity="0.12" stroke-width="0.7"/><path d="M401.3,534.2 399.8,534.0 398.5,533.2 397.6,531.9 397.2,530.5 397.4,528.9 398.1,527.6 399.3,526.6 400.7,526.1 402.3,526.2 402.3,526.2 401.0,526.4 399.8,527.0 398.9,528.0 398.3,529.2 398.2,530.5 398.5,531.7 399.1,532.9 400.1,533.7 401.3,534.2Z" fill="#000" fill-opacity="0.16"/>
<path d="M412.8,518.6 413.8,518.7 414.6,519.1 415.2,519.9 415.5,520.8 415.4,521.7 414.9,522.6 414.2,523.1 413.3,523.4 412.3,523.3 412.3,523.3 413.0,523.1 413.6,522.7 414.1,522.2 414.4,521.5 414.5,520.8 414.3,520.1 414.0,519.4 413.5,518.9 412.8,518.6Z" fill="#000" fill-opacity="0.38"/><path d="M413.4,523.5 412.4,523.4 411.5,522.9 410.9,522.1 410.6,521.2 410.7,520.2 411.2,519.4 412.0,518.8 412.9,518.5 413.9,518.6 413.9,518.6 413.2,518.8 412.6,519.2 412.1,519.8 411.8,520.5 411.7,521.2 411.8,521.9 412.2,522.6 412.7,523.1 413.4,523.5Z" fill="#fff" fill-opacity="0.24"/><ellipse cx="413.1" cy="521.0" rx="2.6" ry="2.6" fill="none" stroke="#fff" stroke-opacity="0.12" stroke-width="0.7"/><path d="M413.1,524.3 411.9,524.0 410.9,523.4 410.2,522.4 409.8,521.2 410.0,520.0 410.5,518.9 411.5,518.1 412.6,517.7 413.9,517.8 413.9,517.8 412.8,518.0 411.9,518.5 411.2,519.2 410.7,520.2 410.6,521.2 410.8,522.3 411.4,523.2 412.2,523.9 413.1,524.3Z" fill="#000" fill-opacity="0.11"/>
<path d="M411.5,526.5 412.4,526.5 413.3,527.0 413.9,527.7 414.2,528.6 414.1,529.6 413.6,530.4 412.8,531.0 411.9,531.3 410.9,531.1 410.9,531.1 411.6,530.9 412.2,530.5 412.7,530.0 413.0,529.3 413.0,528.6 412.9,527.9 412.6,527.3 412.1,526.8 411.5,526.5Z" fill="#000" fill-opacity="0.40"/><path d="M412.1,531.3 411.1,531.2 410.2,530.8 409.6,530.0 409.3,529.1 409.4,528.1 409.9,527.2 410.7,526.6 411.6,526.4 412.6,526.5 412.6,526.5 411.9,526.7 411.3,527.1 410.8,527.6 410.5,528.3 410.4,529.1 410.5,529.8 410.9,530.4 411.4,531.0 412.1,531.3Z" fill="#fff" fill-opacity="0.25"/><ellipse cx="411.8" cy="528.8" rx="2.6" ry="2.6" fill="none" stroke="#fff" stroke-opacity="0.12" stroke-width="0.7"/><path d="M411.8,532.1 410.6,531.9 409.6,531.3 408.8,530.3 408.5,529.1 408.7,527.9 409.2,526.8 410.2,526.0 411.3,525.6 412.6,525.7 412.6,525.7 411.5,525.8 410.6,526.3 409.9,527.1 409.4,528.0 409.3,529.1 409.5,530.1 410.1,531.0 410.9,531.7 411.8,532.1Z" fill="#000" fill-opacity="0.12"/>
<path d="M415.4,534.3 416.4,534.4 417.2,534.8 417.8,535.6 418.1,536.5 418.0,537.4 417.5,538.3 416.8,538.9 415.8,539.1 414.9,539.0 414.9,539.0 415.6,538.8 416.2,538.4 416.6,537.9 416.9,537.2 417.0,536.5 416.9,535.8 416.5,535.2 416.0,534.7 415.4,534.3Z" fill="#000" fill-opacity="0.40"/><path d="M416.0,539.2 415.0,539.1 414.1,538.6 413.5,537.9 413.2,536.9 413.4,535.9 413.8,535.1 414.6,534.5 415.6,534.2 416.5,534.4 416.5,534.4 415.8,534.5 415.2,534.9 414.7,535.5 414.4,536.2 414.3,536.9 414.5,537.6 414.8,538.3 415.3,538.8 416.0,539.2Z" fill="#fff" fill-opacity="0.25"/><ellipse cx="415.7" cy="536.7" rx="2.6" ry="2.6" fill="none" stroke="#fff" stroke-opacity="0.12" stroke-width="0.7"/><path d="M415.7,540.0 414.5,539.8 413.5,539.1 412.8,538.1 412.5,536.9 412.6,535.7 413.2,534.6 414.1,533.9 415.3,533.5 416.5,533.5 416.5,533.5 415.5,533.7 414.5,534.2 413.8,535.0 413.4,535.9 413.2,536.9 413.5,538.0 414.0,538.9 414.8,539.6 415.7,540.0Z" fill="#000" fill-opacity="0.12"/>
<path d="M499.6,496.4 500.9,496.7 502.1,497.4 502.8,498.5 503.2,499.8 503.0,501.1 502.4,502.3 501.4,503.1 500.1,503.6 498.8,503.6 498.8,503.6 500.0,503.4 501.0,502.8 501.9,502.0 502.4,500.9 502.5,499.8 502.2,498.6 501.6,497.6 500.7,496.8 499.6,496.4Z" fill="#000" fill-opacity="0.25"/><path d="M500.0,503.7 498.5,503.6 497.2,502.9 496.3,501.8 495.8,500.3 496.0,498.9 496.7,497.6 497.9,496.7 499.3,496.3 500.8,496.5 500.8,496.5 499.7,496.8 498.8,497.4 498.0,498.2 497.6,499.2 497.5,500.3 497.7,501.4 498.2,502.4 499.0,503.2 500.0,503.7Z" fill="#fff" fill-opacity="0.17"/><ellipse cx="499.6" cy="500.0" rx="3.9" ry="3.9" fill="none" stroke="#fff" stroke-opacity="0.12" stroke-width="0.7"/>
<path d="M489.1,504.9 490.2,505.1 491.2,505.7 491.8,506.6 492.1,507.7 492.0,508.8 491.4,509.8 490.6,510.5 489.6,510.9 488.4,510.8 488.4,510.8 489.4,510.7 490.3,510.2 491.0,509.5 491.4,508.6 491.5,507.7 491.3,506.7 490.8,505.9 490.0,505.2 489.1,504.9Z" fill="#000" fill-opacity="0.25"/><path d="M489.4,511.0 488.2,510.9 487.1,510.3 486.3,509.3 486.0,508.1 486.1,506.9 486.7,505.9 487.7,505.1 488.9,504.8 490.1,504.9 490.1,504.9 489.2,505.2 488.4,505.7 487.8,506.4 487.4,507.2 487.3,508.2 487.5,509.1 487.9,509.9 488.6,510.5 489.4,511.0Z" fill="#fff" fill-opacity="0.17"/><ellipse cx="489.1" cy="507.9" rx="3.3" ry="3.3" fill="none" stroke="#fff" stroke-opacity="0.12" stroke-width="0.7"/>
<path d="M503.5,510.1 504.6,510.3 505.6,510.9 506.2,511.8 506.5,512.9 506.4,514.0 505.9,515.0 505.0,515.7 504.0,516.1 502.9,516.1 502.9,516.1 503.8,515.9 504.7,515.5 505.4,514.8 505.8,513.9 505.9,512.9 505.7,511.9 505.2,511.1 504.5,510.5 503.5,510.1Z" fill="#000" fill-opacity="0.25"/><path d="M503.8,516.2 502.6,516.1 501.5,515.5 500.7,514.6 500.4,513.4 500.5,512.2 501.1,511.1 502.1,510.3 503.3,510.0 504.5,510.2 504.5,510.2 503.6,510.4 502.8,510.9 502.2,511.6 501.9,512.5 501.8,513.4 501.9,514.3 502.4,515.1 503.0,515.8 503.8,516.2Z" fill="#fff" fill-opacity="0.17"/><ellipse cx="503.5" cy="513.1" rx="3.3" ry="3.3" fill="none" stroke="#fff" stroke-opacity="0.12" stroke-width="0.7"/>
<path d="M481.2,510.7 482.1,510.9 482.9,511.4 483.4,512.1 483.6,512.9 483.5,513.8 483.1,514.6 482.4,515.2 481.6,515.5 480.7,515.5 480.7,515.5 481.5,515.4 482.2,515.0 482.7,514.4 483.1,513.7 483.1,512.9 483.0,512.2 482.6,511.5 482.0,511.0 481.2,510.7Z" fill="#000" fill-opacity="0.25"/><path d="M481.5,515.6 480.5,515.5 479.6,515.0 479.0,514.3 478.7,513.3 478.9,512.4 479.3,511.5 480.1,510.9 481.1,510.6 482.0,510.8 482.0,510.8 481.3,511.0 480.7,511.4 480.2,511.9 479.9,512.6 479.8,513.3 480.0,514.1 480.3,514.7 480.8,515.2 481.5,515.6Z" fill="#fff" fill-opacity="0.17"/><ellipse cx="481.2" cy="513.1" rx="2.6" ry="2.6" fill="none" stroke="#fff" stroke-opacity="0.12" stroke-width="0.7"/>
<path d="M515.3,483.9 516.4,484.1 517.4,484.7 518.0,485.6 518.3,486.7 518.2,487.8 517.6,488.8 516.8,489.5 515.8,489.9 514.6,489.9 514.6,489.9 515.6,489.7 516.5,489.3 517.2,488.6 517.6,487.7 517.7,486.7 517.5,485.7 517.0,484.9 516.2,484.3 515.3,483.9Z" fill="#000" fill-opacity="0.25"/><path d="M515.6,490.0 514.4,489.9 513.3,489.3 512.5,488.4 512.2,487.2 512.3,486.0 512.9,484.9 513.9,484.1 515.1,483.8 516.3,484.0 516.3,484.0 515.4,484.2 514.6,484.7 514.0,485.4 513.6,486.3 513.5,487.2 513.7,488.1 514.1,488.9 514.8,489.6 515.6,490.0Z" fill="#fff" fill-opacity="0.17"/><ellipse cx="515.3" cy="486.9" rx="3.3" ry="3.3" fill="none" stroke="#fff" stroke-opacity="0.12" stroke-width="0.7"/>
<path d="M507.4,475.3 508.3,475.5 509.1,476.0 509.6,476.7 509.8,477.6 509.7,478.5 509.3,479.3 508.6,479.8 507.8,480.1 506.9,480.1 506.9,480.1 507.7,480.0 508.4,479.6 508.9,479.1 509.3,478.4 509.3,477.6 509.2,476.8 508.8,476.1 508.2,475.6 507.4,475.3Z" fill="#000" fill-opacity="0.25"/><path d="M507.7,480.2 506.7,480.1 505.8,479.7 505.2,478.9 504.9,478.0 505.1,477.0 505.5,476.1 506.3,475.5 507.3,475.3 508.2,475.4 508.2,475.4 507.5,475.6 506.9,476.0 506.4,476.5 506.1,477.2 506.0,478.0 506.2,478.7 506.5,479.4 507.0,479.9 507.7,480.2Z" fill="#fff" fill-opacity="0.17"/><ellipse cx="507.4" cy="477.8" rx="2.6" ry="2.6" fill="none" stroke="#fff" stroke-opacity="0.12" stroke-width="0.7"/>
<path d="M448.5,169.4 449.8,169.2 451.1,169.5 452.1,170.4 452.5,171.7 452.4,173.0 451.7,174.1 450.5,174.8 449.2,174.9 448.0,174.3 448.0,174.3 448.6,174.0 449.0,173.5 449.4,173.0 449.6,172.4 449.7,171.7 449.6,171.0 449.4,170.4 449.0,169.9 448.5,169.4Z" fill="#000" fill-opacity="0.75"/><path d="M450.0,175.0 448.8,174.9 447.8,174.3 447.1,173.4 446.7,172.3 446.9,171.1 447.4,170.1 448.4,169.4 449.5,169.1 450.7,169.2 450.7,169.2 449.8,169.5 449.1,169.9 448.5,170.6 448.1,171.4 448.0,172.3 448.2,173.2 448.6,173.9 449.2,174.6 450.0,175.0Z" fill="#fff" fill-opacity="0.46"/><ellipse cx="449.7" cy="172.0" rx="3.1" ry="3.1" fill="none" stroke="#fff" stroke-opacity="0.16" stroke-width="0.7"/><path d="M449.7,175.9 448.3,175.7 447.0,174.9 446.2,173.7 445.8,172.3 446.0,170.9 446.6,169.6 447.8,168.6 449.1,168.2 450.6,168.2 450.6,168.2 449.4,168.4 448.3,169.0 447.4,169.9 446.9,171.1 446.7,172.3 447.0,173.6 447.6,174.6 448.6,175.5 449.7,175.9Z" fill="#000" fill-opacity="0.30"/>
<path d="M470.5,156.5 471.7,156.2 472.8,156.6 473.7,157.4 474.1,158.4 473.9,159.6 473.3,160.6 472.3,161.2 471.1,161.2 470.0,160.8 470.0,160.8 470.5,160.5 471.0,160.1 471.3,159.6 471.5,159.0 471.5,158.5 471.5,157.9 471.3,157.3 470.9,156.9 470.5,156.5Z" fill="#000" fill-opacity="0.75"/><path d="M471.8,161.3 470.8,161.2 469.9,160.8 469.3,160.0 469.0,159.0 469.1,158.0 469.6,157.1 470.4,156.4 471.4,156.2 472.4,156.3 472.4,156.3 471.7,156.5 471.0,156.9 470.5,157.5 470.2,158.2 470.1,159.0 470.3,159.7 470.6,160.4 471.2,161.0 471.8,161.3Z" fill="#fff" fill-opacity="0.46"/><ellipse cx="471.6" cy="158.8" rx="2.7" ry="2.7" fill="none" stroke="#fff" stroke-opacity="0.16" stroke-width="0.7"/><path d="M471.6,162.2 470.3,161.9 469.2,161.3 468.5,160.2 468.2,159.0 468.3,157.7 468.9,156.6 469.9,155.8 471.1,155.4 472.4,155.4 472.4,155.4 471.3,155.6 470.3,156.1 469.6,156.9 469.1,157.9 469.0,159.0 469.2,160.1 469.7,161.0 470.6,161.7 471.6,162.2Z" fill="#000" fill-opacity="0.30"/>
<path d="M484.9,159.1 486.1,159.0 487.3,159.5 488.1,160.4 488.5,161.6 488.3,162.8 487.7,163.9 486.7,164.5 485.5,164.7 484.3,164.4 484.3,164.4 485.0,164.1 485.6,163.7 486.1,163.1 486.3,162.3 486.4,161.6 486.3,160.8 486.0,160.1 485.5,159.5 484.9,159.1Z" fill="#000" fill-opacity="0.65"/><path d="M485.9,164.8 484.8,164.7 483.7,164.2 483.0,163.3 482.7,162.1 482.8,161.0 483.4,159.9 484.3,159.2 485.4,158.9 486.6,159.1 486.6,159.1 485.7,159.3 485.0,159.8 484.4,160.4 484.1,161.3 484.0,162.1 484.1,163.0 484.5,163.8 485.2,164.4 485.9,164.8Z" fill="#fff" fill-opacity="0.40"/><ellipse cx="485.6" cy="161.9" rx="3.1" ry="3.1" fill="none" stroke="#fff" stroke-opacity="0.16" stroke-width="0.7"/><path d="M485.7,165.8 484.2,165.5 483.0,164.7 482.1,163.6 481.7,162.2 481.9,160.7 482.6,159.4 483.7,158.5 485.1,158.0 486.5,158.1 486.5,158.1 485.3,158.3 484.2,158.9 483.3,159.8 482.8,160.9 482.7,162.2 482.9,163.4 483.5,164.5 484.5,165.3 485.7,165.8Z" fill="#000" fill-opacity="0.24"/>
<path d="M488.0,153.0 488.9,152.8 489.8,153.1 490.4,153.7 490.7,154.6 490.6,155.5 490.1,156.3 489.3,156.8 488.4,156.8 487.6,156.5 487.6,156.5 488.0,156.2 488.3,155.9 488.6,155.5 488.7,155.1 488.8,154.6 488.7,154.1 488.6,153.7 488.3,153.3 488.0,153.0Z" fill="#000" fill-opacity="0.73"/><path d="M489.0,156.9 488.2,156.8 487.4,156.4 486.9,155.8 486.7,155.0 486.8,154.2 487.2,153.5 487.8,153.0 488.6,152.8 489.4,152.9 489.4,152.9 488.8,153.0 488.3,153.4 487.9,153.8 487.7,154.4 487.6,155.0 487.7,155.6 488.0,156.2 488.4,156.6 489.0,156.9Z" fill="#fff" fill-opacity="0.44"/><ellipse cx="488.8" cy="154.8" rx="2.2" ry="2.2" fill="none" stroke="#fff" stroke-opacity="0.16" stroke-width="0.7"/><path d="M488.8,157.6 487.8,157.4 486.9,156.9 486.3,156.1 486.0,155.1 486.1,154.0 486.6,153.1 487.4,152.4 488.4,152.1 489.5,152.2 489.5,152.2 488.6,152.4 487.9,152.8 487.3,153.4 486.9,154.2 486.8,155.1 487.0,155.9 487.4,156.6 488.1,157.2 488.8,157.6Z" fill="#000" fill-opacity="0.28"/>
<path d="M495.9,153.7 496.8,153.6 497.6,153.9 498.3,154.6 498.6,155.4 498.5,156.3 498.0,157.0 497.2,157.5 496.3,157.6 495.5,157.3 495.5,157.3 495.9,157.1 496.3,156.8 496.6,156.4 496.8,155.9 496.8,155.4 496.8,154.9 496.6,154.4 496.3,154.0 495.9,153.7Z" fill="#000" fill-opacity="0.69"/><path d="M496.8,157.7 496.0,157.6 495.2,157.2 494.7,156.6 494.5,155.8 494.6,155.0 495.0,154.3 495.6,153.8 496.4,153.6 497.2,153.7 497.2,153.7 496.6,153.8 496.1,154.2 495.7,154.6 495.5,155.2 495.4,155.8 495.5,156.4 495.8,157.0 496.2,157.4 496.8,157.7Z" fill="#fff" fill-opacity="0.42"/><ellipse cx="496.6" cy="155.6" rx="2.2" ry="2.2" fill="none" stroke="#fff" stroke-opacity="0.16" stroke-width="0.7"/><path d="M496.7,158.4 495.6,158.2 494.7,157.7 494.1,156.8 493.8,155.8 494.0,154.8 494.4,153.9 495.2,153.2 496.2,152.9 497.3,153.0 497.3,153.0 496.4,153.1 495.7,153.6 495.1,154.2 494.7,155.0 494.6,155.8 494.8,156.7 495.2,157.4 495.9,158.0 496.7,158.4Z" fill="#000" fill-opacity="0.26"/>
<path d="M481.1,164.8 482.2,164.8 483.2,165.2 484.0,166.1 484.3,167.1 484.2,168.2 483.6,169.1 482.7,169.7 481.7,169.9 480.6,169.7 480.6,169.7 481.3,169.4 481.8,169.0 482.3,168.4 482.5,167.8 482.6,167.1 482.5,166.4 482.2,165.7 481.7,165.2 481.1,164.8Z" fill="#000" fill-opacity="0.62"/><path d="M482.0,170.0 481.0,169.9 480.0,169.4 479.4,168.6 479.1,167.6 479.2,166.5 479.7,165.6 480.5,165.0 481.6,164.7 482.6,164.8 482.6,164.8 481.8,165.0 481.2,165.4 480.6,166.1 480.3,166.8 480.2,167.6 480.4,168.4 480.7,169.1 481.3,169.6 482.0,170.0Z" fill="#fff" fill-opacity="0.39"/><ellipse cx="481.7" cy="167.3" rx="2.8" ry="2.8" fill="none" stroke="#fff" stroke-opacity="0.16" stroke-width="0.7"/><path d="M481.7,170.9 480.5,170.6 479.3,169.9 478.6,168.9 478.2,167.6 478.4,166.3 479.0,165.1 480.0,164.3 481.2,163.9 482.5,163.9 482.5,163.9 481.4,164.1 480.4,164.6 479.6,165.5 479.2,166.5 479.0,167.6 479.3,168.7 479.9,169.7 480.7,170.4 481.7,170.9Z" fill="#000" fill-opacity="0.22"/>
<path d="M475.7,167.0 476.6,166.9 477.4,167.3 478.0,167.9 478.3,168.7 478.2,169.6 477.7,170.3 477.0,170.8 476.1,170.9 475.3,170.7 475.3,170.7 475.8,170.5 476.2,170.2 476.6,169.7 476.8,169.2 476.8,168.7 476.7,168.2 476.5,167.7 476.2,167.3 475.7,167.0Z" fill="#000" fill-opacity="0.63"/><path d="M476.5,171.0 475.7,170.9 474.9,170.5 474.4,169.9 474.2,169.1 474.3,168.3 474.7,167.5 475.3,167.0 476.1,166.8 476.9,166.9 476.9,166.9 476.3,167.1 475.8,167.4 475.4,167.9 475.2,168.5 475.1,169.1 475.2,169.7 475.5,170.2 475.9,170.7 476.5,171.0Z" fill="#fff" fill-opacity="0.39"/><ellipse cx="476.2" cy="168.9" rx="2.2" ry="2.2" fill="none" stroke="#fff" stroke-opacity="0.16" stroke-width="0.7"/><path d="M476.3,171.6 475.3,171.5 474.4,170.9 473.8,170.1 473.5,169.1 473.6,168.1 474.1,167.2 474.9,166.5 475.9,166.2 477.0,166.3 477.0,166.3 476.1,166.4 475.4,166.8 474.8,167.5 474.4,168.3 474.3,169.1 474.5,170.0 474.9,170.7 475.6,171.3 476.3,171.6Z" fill="#000" fill-opacity="0.23"/>
<path d="M482.2,173.9 482.9,174.0 483.6,174.3 484.0,174.8 484.2,175.5 484.1,176.2 483.8,176.8 483.2,177.2 482.5,177.3 481.8,177.2 481.8,177.2 482.3,177.1 482.7,176.8 483.0,176.4 483.2,176.0 483.3,175.5 483.2,175.0 483.0,174.5 482.6,174.2 482.2,173.9Z" fill="#000" fill-opacity="0.56"/><path d="M482.8,177.4 482.0,177.3 481.4,177.0 480.9,176.5 480.7,175.8 480.8,175.1 481.2,174.4 481.7,174.0 482.4,173.8 483.1,174.0 483.1,174.0 482.6,174.1 482.2,174.4 481.9,174.8 481.7,175.3 481.6,175.8 481.7,176.3 481.9,176.8 482.3,177.1 482.8,177.4Z" fill="#fff" fill-opacity="0.35"/><ellipse cx="482.5" cy="175.6" rx="1.9" ry="1.9" fill="none" stroke="#fff" stroke-opacity="0.16" stroke-width="0.7"/><path d="M482.6,178.0 481.7,177.8 481.0,177.4 480.4,176.7 480.2,175.8 480.3,174.9 480.7,174.1 481.4,173.6 482.3,173.3 483.2,173.4 483.2,173.4 482.4,173.5 481.8,173.9 481.3,174.4 481.0,175.1 481.0,175.8 481.1,176.5 481.4,177.2 482.0,177.7 482.6,178.0Z" fill="#000" fill-opacity="0.18"/>
<path d="M493.3,182.8 494.0,182.9 494.6,183.2 495.0,183.8 495.2,184.4 495.1,185.1 494.8,185.6 494.2,186.1 493.6,186.2 492.9,186.2 492.9,186.2 493.5,186.1 493.9,185.8 494.3,185.4 494.5,184.9 494.6,184.4 494.5,183.9 494.2,183.4 493.8,183.0 493.3,182.8Z" fill="#000" fill-opacity="0.45"/><path d="M493.7,186.3 493.0,186.3 492.3,185.9 491.9,185.4 491.7,184.7 491.7,184.0 492.1,183.4 492.7,182.9 493.4,182.8 494.1,182.9 494.1,182.9 493.6,183.0 493.1,183.3 492.8,183.7 492.6,184.2 492.6,184.7 492.6,185.2 492.9,185.7 493.2,186.0 493.7,186.3Z" fill="#fff" fill-opacity="0.29"/><ellipse cx="493.4" cy="184.5" rx="1.9" ry="1.9" fill="none" stroke="#fff" stroke-opacity="0.16" stroke-width="0.7"/><path d="M493.6,186.9 492.7,186.7 491.9,186.3 491.3,185.6 491.1,184.7 491.2,183.8 491.6,183.0 492.3,182.5 493.2,182.2 494.1,182.3 494.1,182.3 493.4,182.4 492.8,182.8 492.3,183.3 492.0,184.0 491.9,184.7 492.0,185.4 492.4,186.1 492.9,186.6 493.6,186.9Z" fill="#000" fill-opacity="0.11"/>
<path d="M499.7,189.3 500.2,189.4 500.7,189.7 501.0,190.1 501.1,190.7 501.1,191.2 500.8,191.7 500.4,192.0 499.9,192.2 499.3,192.2 499.3,192.2 499.8,192.1 500.2,191.9 500.5,191.5 500.7,191.1 500.7,190.7 500.6,190.2 500.4,189.8 500.1,189.5 499.7,189.3Z" fill="#000" fill-opacity="0.39"/><path d="M500.0,192.2 499.4,192.2 498.8,192.0 498.4,191.5 498.2,190.9 498.3,190.3 498.6,189.8 499.1,189.4 499.7,189.3 500.3,189.4 500.3,189.4 499.9,189.6 499.6,189.8 499.3,190.1 499.1,190.5 499.1,190.9 499.2,191.3 499.3,191.7 499.6,192.0 500.0,192.2Z" fill="#fff" fill-opacity="0.26"/><ellipse cx="499.7" cy="190.8" rx="1.6" ry="1.6" fill="none" stroke="#fff" stroke-opacity="0.16" stroke-width="0.7"/><path d="M499.9,192.7 499.1,192.6 498.4,192.3 498.0,191.7 497.7,190.9 497.8,190.2 498.2,189.5 498.8,189.0 499.5,188.8 500.3,188.9 500.3,188.9 499.7,189.1 499.2,189.4 498.8,189.8 498.6,190.4 498.5,190.9 498.6,191.5 498.9,192.0 499.3,192.5 499.9,192.7Z" fill="#000" fill-opacity="0.07"/>
<path d="M516.9,183.6 517.5,183.7 518.0,184.0 518.4,184.6 518.6,185.2 518.5,185.8 518.2,186.4 517.7,186.8 517.1,187.0 516.5,187.0 516.5,187.0 517.0,186.9 517.5,186.6 517.9,186.2 518.1,185.7 518.2,185.2 518.1,184.6 517.8,184.2 517.4,183.8 516.9,183.6Z" fill="#000" fill-opacity="0.35"/><path d="M517.1,187.1 516.4,187.0 515.8,186.7 515.3,186.2 515.1,185.5 515.2,184.8 515.5,184.1 516.1,183.7 516.8,183.5 517.5,183.7 517.5,183.7 517.0,183.8 516.6,184.1 516.3,184.5 516.0,185.0 516.0,185.5 516.1,186.0 516.3,186.4 516.7,186.8 517.1,187.1Z" fill="#fff" fill-opacity="0.24"/><ellipse cx="516.9" cy="185.3" rx="1.9" ry="1.9" fill="none" stroke="#fff" stroke-opacity="0.16" stroke-width="0.7"/>
<path d="M507.2,161.3 508.0,161.4 508.8,161.7 509.4,162.4 509.6,163.2 509.5,164.1 509.1,164.9 508.4,165.4 507.6,165.6 506.7,165.4 506.7,165.4 507.3,165.3 507.8,164.9 508.2,164.4 508.5,163.9 508.5,163.2 508.4,162.6 508.1,162.1 507.7,161.6 507.2,161.3Z" fill="#000" fill-opacity="0.55"/><path d="M507.7,165.7 506.9,165.6 506.1,165.2 505.5,164.5 505.3,163.6 505.4,162.8 505.8,162.0 506.5,161.4 507.4,161.2 508.2,161.3 508.2,161.3 507.6,161.5 507.0,161.9 506.6,162.4 506.3,163.0 506.3,163.6 506.4,164.3 506.7,164.9 507.2,165.3 507.7,165.7Z" fill="#fff" fill-opacity="0.35"/><ellipse cx="507.5" cy="163.4" rx="2.3" ry="2.3" fill="none" stroke="#fff" stroke-opacity="0.16" stroke-width="0.7"/><path d="M507.6,166.4 506.5,166.2 505.5,165.6 504.9,164.7 504.6,163.7 504.7,162.6 505.2,161.6 506.1,160.9 507.1,160.5 508.2,160.6 508.2,160.6 507.3,160.8 506.5,161.2 505.9,161.9 505.5,162.7 505.4,163.7 505.6,164.6 506.0,165.4 506.7,166.0 507.6,166.4Z" fill="#000" fill-opacity="0.17"/>
<path d="M513.4,156.9 514.1,156.9 514.9,157.2 515.4,157.8 515.6,158.6 515.5,159.3 515.1,160.0 514.5,160.5 513.7,160.6 513.0,160.4 513.0,160.4 513.5,160.3 513.9,160.0 514.2,159.6 514.4,159.1 514.5,158.6 514.4,158.1 514.1,157.6 513.8,157.2 513.4,156.9Z" fill="#000" fill-opacity="0.59"/><path d="M514.0,160.7 513.2,160.6 512.5,160.2 512.0,159.7 511.8,158.9 511.9,158.2 512.3,157.5 512.9,157.0 513.6,156.8 514.4,156.9 514.4,156.9 513.9,157.1 513.4,157.4 513.0,157.8 512.8,158.4 512.7,158.9 512.8,159.5 513.1,160.0 513.5,160.4 514.0,160.7Z" fill="#fff" fill-opacity="0.37"/><ellipse cx="513.8" cy="158.8" rx="2.0" ry="2.0" fill="none" stroke="#fff" stroke-opacity="0.16" stroke-width="0.7"/><path d="M513.9,161.3 512.9,161.1 512.1,160.7 511.5,159.9 511.2,158.9 511.3,158.0 511.8,157.1 512.5,156.5 513.5,156.2 514.4,156.3 514.4,156.3 513.7,156.5 513.0,156.9 512.4,157.4 512.1,158.2 512.0,159.0 512.2,159.7 512.6,160.4 513.1,161.0 513.9,161.3Z" fill="#000" fill-opacity="0.20"/>
<path d="M523.0,164.4 523.8,164.5 524.5,164.9 525.0,165.6 525.3,166.4 525.2,167.2 524.8,168.0 524.1,168.5 523.3,168.7 522.5,168.6 522.5,168.6 523.1,168.5 523.7,168.1 524.1,167.6 524.4,167.0 524.5,166.4 524.4,165.7 524.0,165.2 523.6,164.7 523.0,164.4Z" fill="#000" fill-opacity="0.47"/><path d="M523.4,168.8 522.5,168.7 521.7,168.3 521.2,167.6 520.9,166.8 521.0,165.9 521.4,165.1 522.1,164.6 523.0,164.3 523.9,164.5 523.9,164.5 523.2,164.6 522.7,165.0 522.2,165.5 522.0,166.1 521.9,166.8 522.0,167.4 522.3,168.0 522.8,168.5 523.4,168.8Z" fill="#fff" fill-opacity="0.30"/><ellipse cx="523.1" cy="166.6" rx="2.3" ry="2.3" fill="none" stroke="#fff" stroke-opacity="0.16" stroke-width="0.7"/><path d="M523.2,169.5 522.1,169.3 521.2,168.7 520.5,167.9 520.2,166.8 520.3,165.7 520.9,164.7 521.7,164.0 522.7,163.7 523.9,163.7 523.9,163.7 522.9,163.9 522.1,164.3 521.5,165.0 521.1,165.9 521.0,166.8 521.2,167.7 521.6,168.5 522.3,169.1 523.2,169.5Z" fill="#000" fill-opacity="0.12"/>
<path d="M529.2,160.2 529.8,160.2 530.5,160.5 530.9,161.1 531.1,161.7 531.0,162.4 530.7,163.0 530.1,163.4 529.5,163.6 528.8,163.5 528.8,163.5 529.3,163.4 529.7,163.1 530.0,162.7 530.2,162.2 530.3,161.7 530.2,161.2 530.0,160.8 529.6,160.4 529.2,160.2Z" fill="#000" fill-opacity="0.52"/><path d="M529.6,163.6 528.9,163.6 528.3,163.3 527.8,162.7 527.6,162.0 527.7,161.3 528.0,160.7 528.6,160.3 529.3,160.1 530.0,160.2 530.0,160.2 529.5,160.4 529.1,160.6 528.8,161.0 528.5,161.5 528.5,162.0 528.6,162.5 528.8,163.0 529.2,163.4 529.6,163.6Z" fill="#fff" fill-opacity="0.33"/><ellipse cx="529.4" cy="161.9" rx="1.9" ry="1.9" fill="none" stroke="#fff" stroke-opacity="0.16" stroke-width="0.7"/><path d="M529.5,164.2 528.6,164.1 527.8,163.6 527.3,162.9 527.0,162.1 527.1,161.2 527.6,160.4 528.3,159.8 529.1,159.5 530.0,159.6 530.0,159.6 529.3,159.8 528.7,160.1 528.2,160.7 527.9,161.3 527.8,162.1 528.0,162.8 528.3,163.4 528.9,163.9 529.5,164.2Z" fill="#000" fill-opacity="0.15"/>
<path d="M504.2,172.5 505.0,172.6 505.6,173.0 506.0,173.5 506.2,174.2 506.2,174.9 505.8,175.6 505.2,176.0 504.5,176.2 503.8,176.2 503.8,176.2 504.4,176.0 504.9,175.7 505.2,175.3 505.5,174.8 505.5,174.2 505.4,173.7 505.2,173.2 504.7,172.8 504.2,172.5Z" fill="#000" fill-opacity="0.47"/><path d="M504.6,176.3 503.8,176.2 503.2,175.9 502.7,175.3 502.5,174.5 502.5,173.8 502.9,173.1 503.5,172.6 504.3,172.4 505.0,172.6 505.0,172.6 504.5,172.7 504.0,173.0 503.6,173.5 503.4,174.0 503.3,174.5 503.4,175.1 503.7,175.6 504.1,176.0 504.6,176.3Z" fill="#fff" fill-opacity="0.30"/><ellipse cx="504.4" cy="174.4" rx="2.0" ry="2.0" fill="none" stroke="#fff" stroke-opacity="0.16" stroke-width="0.7"/><path d="M504.5,176.9 503.5,176.8 502.7,176.3 502.1,175.5 501.8,174.6 502.0,173.6 502.4,172.8 503.2,172.1 504.1,171.9 505.1,171.9 505.1,171.9 504.3,172.1 503.6,172.5 503.1,173.1 502.7,173.8 502.6,174.6 502.8,175.4 503.2,176.0 503.8,176.6 504.5,176.9Z" fill="#000" fill-opacity="0.12"/>
<path d="M466.1,164.5 467.1,164.4 468.0,164.7 468.7,165.4 469.0,166.3 468.9,167.3 468.4,168.1 467.6,168.6 466.6,168.7 465.7,168.4 465.7,168.4 466.2,168.1 466.6,167.8 466.9,167.3 467.1,166.9 467.1,166.3 467.1,165.8 466.9,165.3 466.5,164.9 466.1,164.5Z" fill="#000" fill-opacity="0.70"/><path d="M467.1,168.8 466.2,168.7 465.5,168.3 464.9,167.6 464.7,166.8 464.8,165.9 465.2,165.1 465.9,164.6 466.7,164.3 467.6,164.5 467.6,164.5 467.0,164.6 466.4,165.0 466.0,165.5 465.7,166.1 465.6,166.8 465.8,167.4 466.1,168.0 466.5,168.5 467.1,168.8Z" fill="#fff" fill-opacity="0.43"/><ellipse cx="466.9" cy="166.6" rx="2.3" ry="2.3" fill="none" stroke="#fff" stroke-opacity="0.16" stroke-width="0.7"/><path d="M466.9,169.5 465.9,169.3 464.9,168.7 464.2,167.9 464.0,166.8 464.1,165.7 464.6,164.7 465.4,164.0 466.5,163.7 467.6,163.7 467.6,163.7 466.7,163.9 465.9,164.3 465.2,165.0 464.8,165.9 464.7,166.8 464.9,167.7 465.4,168.5 466.1,169.1 466.9,169.5Z" fill="#000" fill-opacity="0.27"/>
<path d="M459.8,161.8 460.6,161.6 461.5,161.8 462.2,162.4 462.5,163.2 462.4,164.1 461.9,164.8 461.1,165.2 460.2,165.3 459.4,164.9 459.4,164.9 459.8,164.7 460.1,164.4 460.3,164.0 460.4,163.6 460.5,163.2 460.4,162.8 460.3,162.4 460.1,162.1 459.8,161.8Z" fill="#000" fill-opacity="0.76"/><path d="M460.9,165.4 460.1,165.3 459.4,164.9 458.9,164.3 458.7,163.6 458.8,162.8 459.2,162.2 459.8,161.7 460.5,161.5 461.3,161.6 461.3,161.6 460.7,161.8 460.3,162.1 459.9,162.5 459.7,163.0 459.6,163.6 459.7,164.2 460.0,164.7 460.4,165.1 460.9,165.4Z" fill="#fff" fill-opacity="0.46"/><ellipse cx="460.6" cy="163.4" rx="2.0" ry="2.0" fill="none" stroke="#fff" stroke-opacity="0.16" stroke-width="0.7"/><path d="M460.7,166.0 459.8,165.8 458.9,165.3 458.4,164.6 458.1,163.6 458.2,162.7 458.7,161.8 459.4,161.2 460.3,160.9 461.3,161.0 461.3,161.0 460.5,161.2 459.8,161.5 459.3,162.1 459.0,162.8 458.9,163.6 459.0,164.4 459.4,165.1 460.0,165.6 460.7,166.0Z" fill="#000" fill-opacity="0.31"/>
<path d="M458.5,177.1 459.4,177.1 460.2,177.4 460.8,178.0 461.1,178.9 461.0,179.7 460.5,180.5 459.8,180.9 458.9,181.1 458.1,180.8 458.1,180.8 458.6,180.6 459.0,180.3 459.3,179.9 459.5,179.4 459.5,178.9 459.5,178.3 459.2,177.9 458.9,177.4 458.5,177.1Z" fill="#000" fill-opacity="0.65"/><path d="M459.3,181.1 458.5,181.1 457.7,180.7 457.2,180.0 457.0,179.2 457.1,178.4 457.5,177.7 458.1,177.2 458.9,177.0 459.7,177.1 459.7,177.1 459.1,177.3 458.6,177.6 458.2,178.1 458.0,178.6 457.9,179.2 458.0,179.9 458.3,180.4 458.7,180.8 459.3,181.1Z" fill="#fff" fill-opacity="0.40"/><ellipse cx="459.1" cy="179.1" rx="2.2" ry="2.2" fill="none" stroke="#fff" stroke-opacity="0.16" stroke-width="0.7"/><path d="M459.2,181.8 458.1,181.6 457.2,181.1 456.6,180.3 456.3,179.3 456.5,178.2 456.9,177.3 457.7,176.7 458.7,176.3 459.8,176.4 459.8,176.4 458.9,176.6 458.2,177.0 457.6,177.6 457.2,178.4 457.1,179.3 457.3,180.1 457.7,180.9 458.4,181.4 459.2,181.8Z" fill="#000" fill-opacity="0.24"/>
<path d="M466.5,177.5 467.2,177.5 467.8,177.8 468.2,178.3 468.4,178.9 468.4,179.6 468.0,180.1 467.5,180.5 466.8,180.6 466.2,180.5 466.2,180.5 466.6,180.3 466.9,180.1 467.2,179.7 467.3,179.3 467.4,178.9 467.3,178.5 467.1,178.1 466.9,177.8 466.5,177.5Z" fill="#000" fill-opacity="0.61"/><path d="M467.1,180.7 466.5,180.6 465.9,180.4 465.4,179.8 465.2,179.2 465.3,178.6 465.7,178.0 466.2,177.6 466.8,177.4 467.5,177.6 467.5,177.6 467.1,177.7 466.7,178.0 466.4,178.3 466.2,178.7 466.1,179.2 466.2,179.7 466.4,180.1 466.7,180.4 467.1,180.7Z" fill="#fff" fill-opacity="0.38"/><ellipse cx="466.9" cy="179.1" rx="1.7" ry="1.7" fill="none" stroke="#fff" stroke-opacity="0.16" stroke-width="0.7"/><path d="M467.0,181.2 466.2,181.1 465.5,180.7 465.0,180.0 464.7,179.2 464.8,178.4 465.2,177.7 465.9,177.2 466.7,176.9 467.5,177.0 467.5,177.0 466.9,177.2 466.3,177.5 465.9,178.0 465.6,178.6 465.5,179.2 465.7,179.9 466.0,180.5 466.4,180.9 467.0,181.2Z" fill="#000" fill-opacity="0.21"/>
<ellipse cx="415.9" cy="578.1" rx="3.1179039301310043" ry="1.8864628820960698" fill="#000" fill-opacity="0.7"/>
<ellipse cx="402.8" cy="571.6" rx="3.5633187772925763" ry="2.096069868995633" fill="#000" fill-opacity="0.7"/>
<ellipse cx="432.9" cy="595.2" rx="3.5633187772925763" ry="1.8864628820960698" fill="#000" fill-opacity="0.7"/>
<ellipse cx="443.4" cy="593.8" rx="2.672489082969432" ry="1.6768558951965065" fill="#000" fill-opacity="0.7"/>
<ellipse cx="448.6" cy="588.6" rx="2.2270742358078603" ry="1.4672489082969433" fill="#000" fill-opacity="0.7"/>
<ellipse cx="409.3" cy="583.4" rx="3.1179039301310043" ry="1.6768558951965065" fill="#000" fill-opacity="0.7"/>
<ellipse cx="396.2" cy="562.4" rx="2.672489082969432" ry="1.8864628820960698" fill="#000" fill-opacity="0.7"/>
<ellipse cx="388.3" cy="549.3" rx="2.672489082969432" ry="1.8864628820960698" fill="#000" fill-opacity="0.7"/>
<ellipse cx="381.8" cy="536.2" rx="2.2270742358078603" ry="1.6768558951965065" fill="#000" fill-opacity="0.7"/>
<ellipse cx="425.0" cy="591.2" rx="3.1179039301310043" ry="1.6768558951965065" fill="#000" fill-opacity="0.7"/>
<ellipse cx="438.1" cy="600.4" rx="3.1179039301310043" ry="1.4672489082969433" fill="#000" fill-opacity="0.7"/>
<ellipse cx="419.8" cy="587.3" rx="2.2270742358078603" ry="1.25764192139738" fill="#000" fill-opacity="0.7"/>
<ellipse cx="391.0" cy="555.9" rx="2.004366812227074" ry="1.4672489082969433" fill="#000" fill-opacity="0.7"/>
<ellipse cx="377.9" cy="527.0" rx="2.004366812227074" ry="1.4672489082969433" fill="#000" fill-opacity="0.7"/>
<ellipse cx="445.2" cy="171.2" rx="1.1" ry="0.9" fill="#000" fill-opacity="0.5"/>
<ellipse cx="452.4" cy="166.0" rx="1.1" ry="0.9" fill="#000" fill-opacity="0.5"/>
<ellipse cx="473.4" cy="158.1" rx="1.1" ry="0.9" fill="#000" fill-opacity="0.5"/>
<ellipse cx="479.3" cy="168.6" rx="1.1" ry="0.9" fill="#000" fill-opacity="0.5"/>
<ellipse cx="486.5" cy="161.4" rx="1.1" ry="0.9" fill="#000" fill-opacity="0.5"/>
<ellipse cx="497.6" cy="157.4" rx="1.1" ry="0.9" fill="#000" fill-opacity="0.5"/>
<ellipse cx="493.7" cy="184.3" rx="1.1" ry="0.9" fill="#000" fill-opacity="0.5"/>
<ellipse cx="482.5" cy="175.8" rx="1.1" ry="0.9" fill="#000" fill-opacity="0.5"/>
<ellipse cx="457.0" cy="213.4" rx="1.1" ry="0.9" fill="#000" fill-opacity="0.5"/>
<ellipse cx="409.3" cy="578.2" rx="1.5" ry="2.5" transform="rotate(-14 411.1 578.4)" fill="#000" fill-opacity="0.39"/>
<ellipse cx="411.1" cy="578.4" rx="1.3" ry="2.8" transform="rotate(-14 411.1 578.4)" fill="#d8d2cc" fill-opacity="0.28"/>
<ellipse cx="394.5" cy="571.7" rx="2.4" ry="2.3" transform="rotate(14 397.3 571.9)" fill="#000" fill-opacity="0.39"/>
<ellipse cx="397.3" cy="571.9" rx="2.2" ry="2.5" transform="rotate(14 397.3 571.9)" fill="#d8d2cc" fill-opacity="0.28"/>
<ellipse cx="424.8" cy="595.3" rx="2.2" ry="2.3" transform="rotate(-8 427.4 595.5)" fill="#000" fill-opacity="0.39"/>
<ellipse cx="427.4" cy="595.5" rx="2.0" ry="2.6" transform="rotate(-8 427.4 595.5)" fill="#d8d2cc" fill-opacity="0.28"/>
<ellipse cx="437.8" cy="593.9" rx="1.2" ry="1.2" transform="rotate(23 439.3 594.1)" fill="#000" fill-opacity="0.39"/>
<ellipse cx="439.3" cy="594.1" rx="1.1" ry="1.4" transform="rotate(23 439.3 594.1)" fill="#d8d2cc" fill-opacity="0.28"/>
<ellipse cx="443.8" cy="588.7" rx="1.2" ry="1.1" transform="rotate(33 445.2 588.9)" fill="#000" fill-opacity="0.39"/>
<ellipse cx="445.2" cy="588.9" rx="1.1" ry="1.2" transform="rotate(33 445.2 588.9)" fill="#d8d2cc" fill-opacity="0.28"/>
<ellipse cx="404.5" cy="583.7" rx="1.4" ry="2.1" transform="rotate(-8 404.5 583.7)" fill="#d8d2cc" fill-opacity="0.28"/>
<ellipse cx="390.2" cy="562.5" rx="1.6" ry="1.8" transform="rotate(13 392.1 562.7)" fill="#000" fill-opacity="0.39"/>
<ellipse cx="392.1" cy="562.7" rx="1.4" ry="2.0" transform="rotate(13 392.1 562.7)" fill="#d8d2cc" fill-opacity="0.28"/>
<ellipse cx="382.7" cy="549.4" rx="1.3" ry="1.5" transform="rotate(-11 384.3 549.6)" fill="#000" fill-opacity="0.39"/>
<ellipse cx="384.3" cy="549.6" rx="1.2" ry="1.6" transform="rotate(-11 384.3 549.6)" fill="#d8d2cc" fill-opacity="0.28"/>
<ellipse cx="377.1" cy="536.3" rx="1.1" ry="1.1" transform="rotate(-17 378.4 536.5)" fill="#000" fill-opacity="0.39"/>
<ellipse cx="378.4" cy="536.5" rx="1.0" ry="1.2" transform="rotate(-17 378.4 536.5)" fill="#d8d2cc" fill-opacity="0.28"/>
<ellipse cx="417.7" cy="591.3" rx="2.1" ry="2.6" transform="rotate(-15 420.3 591.5)" fill="#000" fill-opacity="0.39"/>
<ellipse cx="420.3" cy="591.5" rx="2.0" ry="2.9" transform="rotate(-15 420.3 591.5)" fill="#d8d2cc" fill-opacity="0.28"/>
<ellipse cx="431.8" cy="600.5" rx="1.3" ry="1.6" transform="rotate(20 433.4 600.7)" fill="#000" fill-opacity="0.39"/>
<ellipse cx="433.4" cy="600.7" rx="1.2" ry="1.8" transform="rotate(20 433.4 600.7)" fill="#d8d2cc" fill-opacity="0.28"/>
<ellipse cx="414.7" cy="587.4" rx="1.4" ry="1.0" transform="rotate(12 416.4 587.6)" fill="#000" fill-opacity="0.39"/>
<ellipse cx="416.4" cy="587.6" rx="1.3" ry="1.1" transform="rotate(12 416.4 587.6)" fill="#d8d2cc" fill-opacity="0.28"/>
<ellipse cx="386.9" cy="556.0" rx="0.8" ry="1.3" transform="rotate(16 387.9 556.2)" fill="#000" fill-opacity="0.39"/>
<ellipse cx="387.9" cy="556.2" rx="0.7" ry="1.4" transform="rotate(16 387.9 556.2)" fill="#d8d2cc" fill-opacity="0.28"/>
<ellipse cx="373.1" cy="527.1" rx="1.4" ry="1.1" transform="rotate(28 374.8 527.3)" fill="#000" fill-opacity="0.39"/>
<ellipse cx="374.8" cy="527.3" rx="1.3" ry="1.2" transform="rotate(28 374.8 527.3)" fill="#d8d2cc" fill-opacity="0.28"/>
<ellipse cx="412.1" cy="207.0" rx="1.4" ry="1.7" transform="rotate(-28 413.8 207.2)" fill="#000" fill-opacity="0.39"/>
<ellipse cx="413.8" cy="207.2" rx="1.2" ry="1.9" transform="rotate(-28 413.8 207.2)" fill="#d8d2cc" fill-opacity="0.28"/>
<ellipse cx="415.0" cy="202.4" rx="1.1" ry="1.8" transform="rotate(-1 416.4 202.6)" fill="#000" fill-opacity="0.39"/>
<ellipse cx="416.4" cy="202.6" rx="1.0" ry="2.0" transform="rotate(-1 416.4 202.6)" fill="#d8d2cc" fill-opacity="0.28"/>
<ellipse cx="418.1" cy="199.2" rx="1.3" ry="1.4" transform="rotate(25 419.7 199.4)" fill="#000" fill-opacity="0.39"/>
<ellipse cx="419.7" cy="199.4" rx="1.2" ry="1.5" transform="rotate(25 419.7 199.4)" fill="#d8d2cc" fill-opacity="0.28"/>
<ellipse cx="412.4" cy="205.3" rx="1.0" ry="1.0" transform="rotate(-22 412.4 205.3)" fill="#d8d2cc" fill-opacity="0.28"/>
<ellipse cx="442.1" cy="173.0" rx="1.0" ry="1.2" transform="rotate(39 443.2 173.2)" fill="#000" fill-opacity="0.50"/>
<ellipse cx="443.2" cy="173.2" rx="0.9" ry="1.4" transform="rotate(39 443.2 173.2)" fill="#d8d2cc" fill-opacity="0.36"/>
<ellipse cx="445.6" cy="169.7" rx="1.3" ry="1.8" transform="rotate(11 447.2 169.9)" fill="#000" fill-opacity="0.50"/>
<ellipse cx="447.2" cy="169.9" rx="1.2" ry="2.0" transform="rotate(11 447.2 169.9)" fill="#d8d2cc" fill-opacity="0.36"/>
<ellipse cx="448.8" cy="171.7" rx="1.3" ry="1.8" transform="rotate(36 450.4 171.9)" fill="#000" fill-opacity="0.50"/>
<ellipse cx="450.4" cy="171.9" rx="1.2" ry="2.0" transform="rotate(36 450.4 171.9)" fill="#d8d2cc" fill-opacity="0.36"/>
<ellipse cx="445.2" cy="164.7" rx="1.4" ry="2.0" transform="rotate(-22 445.2 164.7)" fill="#d8d2cc" fill-opacity="0.36"/>
<ellipse cx="452.4" cy="161.4" rx="1.1" ry="1.1" transform="rotate(10 452.4 161.4)" fill="#d8d2cc" fill-opacity="0.36"/>
<ellipse cx="459.6" cy="157.4" rx="1.3" ry="1.1" transform="rotate(-15 459.6 157.4)" fill="#d8d2cc" fill-opacity="0.36"/>
<ellipse cx="466.7" cy="157.2" rx="1.2" ry="1.2" transform="rotate(27 468.1 157.4)" fill="#000" fill-opacity="0.50"/>
<ellipse cx="468.1" cy="157.4" rx="1.1" ry="1.3" transform="rotate(27 468.1 157.4)" fill="#d8d2cc" fill-opacity="0.36"/>
<ellipse cx="470.0" cy="158.6" rx="1.2" ry="1.6" transform="rotate(6 471.4 158.8)" fill="#000" fill-opacity="0.50"/>
<ellipse cx="471.4" cy="158.8" rx="1.1" ry="1.8" transform="rotate(6 471.4 158.8)" fill="#d8d2cc" fill-opacity="0.36"/>
<ellipse cx="473.8" cy="157.2" rx="1.3" ry="1.9" transform="rotate(38 475.3 157.4)" fill="#000" fill-opacity="0.50"/>
<ellipse cx="475.3" cy="157.4" rx="1.2" ry="2.1" transform="rotate(38 475.3 157.4)" fill="#d8d2cc" fill-opacity="0.36"/>
<ellipse cx="485.9" cy="161.2" rx="1.0" ry="1.8" transform="rotate(-4 487.1 161.4)" fill="#000" fill-opacity="0.50"/>
<ellipse cx="487.1" cy="161.4" rx="0.9" ry="2.0" transform="rotate(-4 487.1 161.4)" fill="#d8d2cc" fill-opacity="0.36"/>
<ellipse cx="489.2" cy="163.1" rx="1.0" ry="1.3" transform="rotate(7 490.4 163.3)" fill="#000" fill-opacity="0.50"/>
<ellipse cx="490.4" cy="163.3" rx="0.9" ry="1.5" transform="rotate(7 490.4 163.3)" fill="#d8d2cc" fill-opacity="0.36"/>
<ellipse cx="494.4" cy="157.2" rx="1.6" ry="1.3" transform="rotate(-28 496.3 157.4)" fill="#000" fill-opacity="0.50"/>
<ellipse cx="496.3" cy="157.4" rx="1.4" ry="1.5" transform="rotate(-28 496.3 157.4)" fill="#d8d2cc" fill-opacity="0.36"/>
<ellipse cx="478.2" cy="167.1" rx="1.5" ry="1.1" transform="rotate(5 479.9 167.3)" fill="#000" fill-opacity="0.50"/>
<ellipse cx="479.9" cy="167.3" rx="1.4" ry="1.2" transform="rotate(5 479.9 167.3)" fill="#d8d2cc" fill-opacity="0.36"/>
<ellipse cx="482.1" cy="165.8" rx="1.5" ry="1.5" transform="rotate(3 483.8 166.0)" fill="#000" fill-opacity="0.50"/>
<ellipse cx="483.8" cy="166.0" rx="1.3" ry="1.6" transform="rotate(3 483.8 166.0)" fill="#d8d2cc" fill-opacity="0.36"/>
<ellipse cx="447.8" cy="193.9" rx="1.1" ry="0.7" transform="rotate(12 449.1 194.1)" fill="#000" fill-opacity="0.39"/>
<ellipse cx="449.1" cy="194.1" rx="1.0" ry="0.8" transform="rotate(12 449.1 194.1)" fill="#d8d2cc" fill-opacity="0.28"/>
<ellipse cx="444.1" cy="193.9" rx="0.9" ry="1.4" transform="rotate(28 445.2 194.1)" fill="#000" fill-opacity="0.39"/>
<ellipse cx="445.2" cy="194.1" rx="0.8" ry="1.6" transform="rotate(28 445.2 194.1)" fill="#d8d2cc" fill-opacity="0.28"/>
<ellipse cx="441.7" cy="204.4" rx="0.7" ry="0.9" transform="rotate(3 442.6 204.6)" fill="#000" fill-opacity="0.39"/>
<ellipse cx="442.6" cy="204.6" rx="0.7" ry="1.0" transform="rotate(3 442.6 204.6)" fill="#d8d2cc" fill-opacity="0.28"/>
<ellipse cx="446.6" cy="208.3" rx="1.0" ry="1.0" transform="rotate(-3 447.8 208.5)" fill="#000" fill-opacity="0.39"/>
<ellipse cx="447.8" cy="208.5" rx="0.9" ry="1.1" transform="rotate(-3 447.8 208.5)" fill="#d8d2cc" fill-opacity="0.28"/>
<ellipse cx="433.8" cy="204.4" rx="1.1" ry="1.4" transform="rotate(0 435.1 204.6)" fill="#000" fill-opacity="0.39"/>
<ellipse cx="435.1" cy="204.6" rx="1.0" ry="1.6" transform="rotate(0 435.1 204.6)" fill="#d8d2cc" fill-opacity="0.28"/>
<ellipse cx="451.7" cy="206.4" rx="1.1" ry="1.0" transform="rotate(-23 453.1 206.6)" fill="#000" fill-opacity="0.39"/>
<ellipse cx="453.1" cy="206.6" rx="1.0" ry="1.1" transform="rotate(-23 453.1 206.6)" fill="#d8d2cc" fill-opacity="0.28"/>
<ellipse cx="367.5" cy="309.6" rx="1.2" ry="1.5" transform="rotate(34 368.8 309.8)" fill="#000" fill-opacity="0.33"/>
<ellipse cx="368.8" cy="309.8" rx="1.1" ry="1.6" transform="rotate(34 368.8 309.8)" fill="#d8d2cc" fill-opacity="0.24"/>
<ellipse cx="373.0" cy="307.2" rx="1.4" ry="1.6" transform="rotate(25 374.7 307.4)" fill="#000" fill-opacity="0.33"/>
<ellipse cx="374.7" cy="307.4" rx="1.3" ry="1.8" transform="rotate(25 374.7 307.4)" fill="#d8d2cc" fill-opacity="0.24"/>
<ellipse cx="375.2" cy="304.2" rx="1.3" ry="1.5" transform="rotate(25 376.7 304.4)" fill="#000" fill-opacity="0.33"/>
<ellipse cx="376.7" cy="304.4" rx="1.2" ry="1.7" transform="rotate(25 376.7 304.4)" fill="#d8d2cc" fill-opacity="0.24"/>
<ellipse cx="378.0" cy="310.6" rx="1.4" ry="1.2" transform="rotate(-23 379.7 310.8)" fill="#000" fill-opacity="0.33"/>
<ellipse cx="379.7" cy="310.8" rx="1.3" ry="1.4" transform="rotate(-23 379.7 310.8)" fill="#d8d2cc" fill-opacity="0.24"/>
<ellipse cx="383.4" cy="310.6" rx="1.0" ry="1.1" transform="rotate(-3 384.6 310.8)" fill="#000" fill-opacity="0.33"/>
<ellipse cx="384.6" cy="310.8" rx="0.9" ry="1.2" transform="rotate(-3 384.6 310.8)" fill="#d8d2cc" fill-opacity="0.24"/>
<ellipse cx="385.9" cy="312.1" rx="1.3" ry="0.9" transform="rotate(3 387.5 312.3)" fill="#000" fill-opacity="0.33"/>
<ellipse cx="387.5" cy="312.3" rx="1.2" ry="1.0" transform="rotate(3 387.5 312.3)" fill="#d8d2cc" fill-opacity="0.24"/>
<ellipse cx="389.9" cy="313.6" rx="1.3" ry="1.1" transform="rotate(-24 391.4 313.8)" fill="#000" fill-opacity="0.33"/>
<ellipse cx="391.4" cy="313.8" rx="1.2" ry="1.3" transform="rotate(-24 391.4 313.8)" fill="#d8d2cc" fill-opacity="0.24"/>
<ellipse cx="392.7" cy="312.6" rx="1.0" ry="1.0" transform="rotate(28 393.9 312.8)" fill="#000" fill-opacity="0.33"/>
<ellipse cx="393.9" cy="312.8" rx="0.9" ry="1.1" transform="rotate(28 393.9 312.8)" fill="#d8d2cc" fill-opacity="0.24"/>
<ellipse cx="395.2" cy="314.5" rx="1.0" ry="1.1" transform="rotate(29 396.4 314.7)" fill="#000" fill-opacity="0.33"/>
<ellipse cx="396.4" cy="314.7" rx="0.9" ry="1.2" transform="rotate(29 396.4 314.7)" fill="#d8d2cc" fill-opacity="0.24"/>
<ellipse cx="390.8" cy="316.5" rx="1.3" ry="1.4" transform="rotate(36 392.4 316.7)" fill="#000" fill-opacity="0.33"/>
<ellipse cx="392.4" cy="316.7" rx="1.2" ry="1.6" transform="rotate(36 392.4 316.7)" fill="#d8d2cc" fill-opacity="0.24"/>
<ellipse cx="384.5" cy="316.5" rx="0.9" ry="1.8" transform="rotate(11 385.5 316.7)" fill="#000" fill-opacity="0.33"/>
<ellipse cx="385.5" cy="316.7" rx="0.8" ry="1.9" transform="rotate(11 385.5 316.7)" fill="#d8d2cc" fill-opacity="0.24"/>
<ellipse cx="393.2" cy="319.9" rx="1.0" ry="1.6" transform="rotate(18 394.4 320.1)" fill="#000" fill-opacity="0.33"/>
<ellipse cx="394.4" cy="320.1" rx="0.9" ry="1.8" transform="rotate(18 394.4 320.1)" fill="#d8d2cc" fill-opacity="0.24"/>
<ellipse cx="435.9" cy="312.6" rx="1.4" ry="1.0" transform="rotate(12 437.6 312.8)" fill="#000" fill-opacity="0.33"/>
<ellipse cx="437.6" cy="312.8" rx="1.3" ry="1.1" transform="rotate(12 437.6 312.8)" fill="#d8d2cc" fill-opacity="0.24"/>
<ellipse cx="438.2" cy="312.1" rx="1.1" ry="1.5" transform="rotate(-12 439.6 312.3)" fill="#000" fill-opacity="0.33"/>
<ellipse cx="439.6" cy="312.3" rx="1.0" ry="1.6" transform="rotate(-12 439.6 312.3)" fill="#d8d2cc" fill-opacity="0.24"/>
</g>
</g>
</svg>
</div></div>
<div id="cap"><span style="left:0.20px;letter-spacing:-0.037px;">Canon EOS 5D Mark II</span> <span style="left:142.60px;letter-spacing:0.000px;">|</span> <span style="left:149.50px;letter-spacing:-0.267px;">800 iso</span> <span style="left:198.60px;letter-spacing:0.000px;">|</span> <span style="left:205.90px;letter-spacing:-0.200px;">1/80 sec</span> <span style="left:262.70px;letter-spacing:0.000px;">|</span> <span style="left:269.10px;letter-spacing:-0.267px;">f/11</span> <span style="left:298.60px;letter-spacing:0.000px;">|</span> <span style="left:313.90px;letter-spacing:-0.560px;">700 mm</span> <span style="left:368.90px;letter-spacing:0.000px;">|</span> <span style="left:376.40px;letter-spacing:-0.371px;">flash No</span> <span style="left:430.50px;letter-spacing:0.000px;">|</span> <span style="left:437.40px;letter-spacing:-0.122px;">28/09/2009</span> <span style="left:514.70px;letter-spacing:-0.414px;">19:28:03</span> <span style="left:572.90px;letter-spacing:0.000px;">|</span> <span class="r" style="left:580.30px;letter-spacing:-0.587px;">Copyright</span> <span class="r" style="left:642.10px;letter-spacing:0.000px;font-size:16.5px;top:1px;">©</span> <span class="r" style="left:659.40px;letter-spacing:-0.200px;">Fabrizio</span> <span class="r" style="left:710.30px;letter-spacing:-0.317px;">Rochira</span> <span class="r" style="left:759.80px;letter-spacing:-0.733px;">2009</span></div>
</body></html>
